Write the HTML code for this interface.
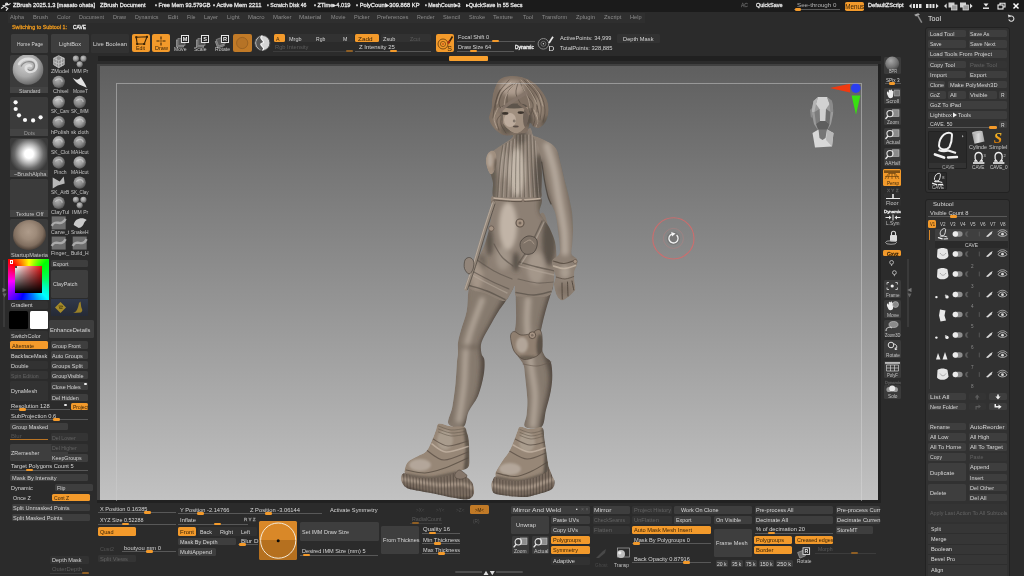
<!DOCTYPE html>
<html><head><meta charset="utf-8"><title>ZBrush</title>
<style>
html,body{margin:0;padding:0;background:#2b2b2b;}
body{width:1024px;height:576px;overflow:hidden;position:relative;font-family:"Liberation Sans",sans-serif;}
#r{position:absolute;left:0;top:0;width:1024px;height:576px;overflow:hidden;filter:blur(0.4px);}
#r div,#r span,#r svg{position:absolute;white-space:nowrap;overflow:hidden;}
#r span{line-height:1.15;overflow:visible;}
#r .b{box-sizing:content-box;}
</style></head><body><div id="r">
<div style="left:0px;top:0px;width:1024px;height:11.5px;background:#1b1b1b;"></div>
<div style="left:0px;top:11.5px;width:1024px;height:564.5px;background:#2b2b2b;"></div>
<div style="left:98px;top:56.2px;width:783px;height:5px;background:#202020;"></div>
<div style="left:97.4px;top:63.8px;width:783.2px;height:439px;background:#212121;"></div>
<div style="left:97.4px;top:63.8px;width:781px;height:436.4px;background:#404040;"></div>
<div style="left:100px;top:66px;width:778px;height:434px;background:linear-gradient(#5f5f5f,#8b8b8b 45%,#c2c2c2);"></div>
<svg style="left:0;top:0" width="1024" height="576" viewBox="0 0 1024 576"><defs>
<filter id="b2" x="-20%" y="-20%" width="140%" height="140%"><feGaussianBlur stdDeviation="2.2"/></filter>
<filter id="b1" x="-20%" y="-20%" width="140%" height="140%"><feGaussianBlur stdDeviation="1.3"/></filter>
<filter id="b0" x="-20%" y="-20%" width="140%" height="140%"><feGaussianBlur stdDeviation="0.7"/></filter>
<clipPath id="cp1"><path d="M480.0 255.0C475.2 258.7 472.9 266.0 471.0 272.0C469.1 278.0 469.0 284.5 468.3 291.0C467.6 297.5 467.9 304.5 466.7 311.0C465.5 317.5 462.4 324.8 461.0 330.0C459.6 335.2 458.5 338.6 458.0 342.5C457.5 346.4 458.2 350.1 458.0 353.4C457.8 356.6 457.4 357.0 457.0 362.0C456.6 367.0 456.3 375.9 455.5 383.4C454.7 390.9 453.5 400.2 452.3 407.0C451.1 413.8 446.6 420.7 448.4 424.0C450.2 427.3 459.9 429.1 463.3 427.0C466.7 424.9 466.2 416.7 468.7 411.5C471.1 406.3 475.5 402.0 478.0 396.0C480.5 390.0 482.5 381.6 483.6 375.6C484.7 369.6 484.8 363.7 484.4 360.0C484.0 356.3 482.0 356.3 481.5 353.4C481.0 350.5 480.2 346.9 481.5 342.5C482.8 338.1 486.5 332.2 489.4 327.0C492.3 321.8 496.1 315.2 498.7 311.0C501.3 306.8 502.4 306.2 505.0 302.0C507.6 297.8 512.6 292.0 514.4 286.0C516.2 280.0 518.4 272.0 516.0 266.0C513.6 260.0 506.0 251.8 500.0 250.0C494.0 248.2 484.8 251.3 480.0 255.0Z"/></clipPath><clipPath id="cp2"><path d="M515.0 262.0C510.8 273.0 514.9 274.4 515.0 280.0C515.1 285.6 515.4 289.1 515.6 295.6C515.8 302.1 516.2 313.0 516.0 319.0C515.8 325.0 515.2 328.5 514.4 331.5C513.6 334.5 511.3 334.1 511.0 337.0C510.7 339.9 511.5 345.2 512.8 348.7C514.1 352.2 517.2 355.3 519.0 358.0C520.8 360.7 522.5 362.1 523.5 365.0C524.5 367.9 524.4 369.9 525.0 375.6C525.6 381.3 527.0 392.5 527.3 399.0C527.6 405.5 527.0 410.0 526.6 414.7C526.2 419.4 522.5 424.9 525.0 427.0C527.5 429.1 537.9 429.8 541.4 427.0C544.9 424.2 544.4 416.0 546.0 410.0C547.6 404.0 549.8 396.7 550.8 391.0C551.8 385.3 552.3 380.4 552.3 375.6C552.3 370.8 551.9 365.1 550.8 362.0C549.7 358.9 547.1 359.2 545.6 357.0C544.1 354.8 542.8 352.7 542.0 348.7C541.2 344.7 541.0 336.6 541.0 333.0C541.0 329.4 540.9 330.7 541.7 327.0C542.5 323.3 544.2 316.2 545.6 311.0C547.0 305.8 549.0 299.9 550.3 295.6C551.6 291.3 552.6 289.8 553.4 285.0C554.2 280.2 554.5 271.5 555.0 267.0C555.5 262.5 556.5 262.0 556.5 257.8C556.5 253.6 556.3 247.2 555.0 242.0C553.7 236.8 551.2 231.2 548.7 226.5C546.2 221.8 545.6 208.1 540.0 214.0C534.4 219.9 519.2 251.0 515.0 262.0Z"/></clipPath><clipPath id="cp3"><path d="M494.0 195.0C487.7 196.5 492.9 205.1 492.5 208.0C492.1 210.9 491.5 213.9 491.0 217.0C490.5 220.1 489.5 227.1 488.6 231.0C487.7 234.9 485.4 242.4 484.0 246.0C482.6 249.6 479.7 254.5 478.0 258.0C476.3 261.5 472.2 268.0 471.0 272.0C469.8 276.0 467.0 285.1 469.0 288.0C471.0 290.9 481.2 292.3 486.0 294.0C490.8 295.7 501.2 302.1 505.0 301.0C508.8 299.9 513.0 286.7 514.5 286.0C516.0 285.3 513.3 294.5 516.0 296.0C518.7 297.5 530.3 297.3 535.0 297.0C539.7 296.7 548.3 298.0 551.0 294.0C553.7 290.0 554.3 271.8 555.0 267.0C555.7 262.2 556.5 261.1 556.5 257.8C556.5 254.5 556.0 246.2 555.0 242.0C554.0 237.8 550.8 230.4 548.7 226.5C546.6 222.6 540.8 216.4 539.6 212.5C538.4 208.6 545.6 199.3 539.5 197.0C533.4 194.7 500.3 193.5 494.0 195.0Z"/></clipPath><clipPath id="cp4"><path d="M510.5 336.0C510.7 333.2 512.2 331.7 514.0 331.5C515.8 331.3 518.2 334.7 521.0 335.0C523.8 335.3 528.2 334.4 531.0 333.5C533.8 332.6 536.2 329.6 538.0 329.5C539.8 329.4 540.8 330.4 541.5 333.0C542.2 335.6 542.3 341.8 542.2 345.0C542.1 348.2 542.2 350.0 541.0 352.0C539.8 354.0 537.8 355.8 535.0 357.0C532.2 358.2 527.1 360.0 524.0 359.5C520.9 359.0 518.4 355.9 516.5 354.0C514.6 352.1 513.8 351.0 512.8 348.0C511.8 345.0 510.3 338.8 510.5 336.0Z"/></clipPath><clipPath id="cp5"><path d="M513.5 128.0C512.2 128.8 513.9 134.9 512.5 137.0C511.1 139.1 505.5 142.3 503.0 144.0C500.5 145.7 496.0 148.5 494.0 150.0C492.0 151.5 489.1 153.5 488.0 155.0C486.9 156.5 486.0 159.3 486.0 161.0C486.0 162.7 487.4 166.3 488.0 168.0C488.6 169.7 489.8 172.0 490.5 174.0C491.2 176.0 492.5 179.9 493.0 183.0C493.5 186.1 490.8 195.3 494.0 197.5C497.2 199.7 510.9 199.4 517.0 199.5C523.1 199.6 536.7 199.8 540.0 198.5C543.3 197.2 541.2 193.1 541.5 190.0C541.8 186.9 541.9 178.9 542.0 175.0C542.1 171.1 541.2 164.6 542.0 161.0C542.8 157.4 548.1 150.8 548.0 148.0C547.9 145.2 542.9 141.7 541.0 140.0C539.1 138.3 534.9 137.1 533.5 135.5C532.1 133.9 532.0 128.6 530.5 128.0C529.0 127.4 524.3 131.0 522.0 131.0C519.7 131.0 514.8 127.2 513.5 128.0Z"/></clipPath><clipPath id="cp6"><path d="M489.0 152.0C490.2 150.8 491.8 150.2 493.0 150.5C494.2 150.8 495.4 151.9 496.0 154.0C496.6 156.1 496.8 160.0 496.5 163.0C496.2 166.0 495.1 170.2 494.0 172.0C492.9 173.8 491.2 175.0 490.0 174.0C488.8 173.0 487.2 168.7 486.5 166.0C485.8 163.3 485.6 160.3 486.0 158.0C486.4 155.7 487.8 153.2 489.0 152.0Z"/></clipPath><clipPath id="cp7"><path d="M533.7 136.0C535.4 135.5 545.9 140.4 549.4 142.5C552.9 144.6 555.3 146.7 557.0 150.0C558.7 153.3 559.8 159.7 561.0 164.4C562.2 169.1 563.8 176.6 565.0 181.5C566.2 186.4 568.0 192.4 569.0 197.0C570.0 201.6 571.4 207.3 572.0 212.0C572.6 216.7 572.9 223.5 573.0 228.0C573.1 232.5 572.7 238.1 572.5 242.0C572.3 245.9 571.0 251.5 571.6 254.0C572.2 256.5 575.8 256.8 576.6 258.4C577.4 260.0 577.3 263.1 577.0 265.0C576.7 266.9 574.9 269.1 574.5 271.0C574.1 272.9 574.1 275.4 574.2 278.0C574.3 280.6 575.3 286.1 575.3 288.0C575.3 289.9 575.5 289.6 574.5 291.0C573.5 292.4 570.2 295.6 568.3 297.0C566.4 298.4 563.7 300.6 562.0 300.5C560.3 300.4 558.2 298.4 557.0 296.0C555.8 293.6 554.2 287.3 554.0 284.4C553.8 281.5 555.8 279.1 555.6 276.5C555.4 273.9 553.1 269.5 552.6 267.0C552.1 264.5 551.1 262.2 552.2 260.0C553.3 257.8 558.8 256.9 559.7 252.5C560.6 248.2 558.7 237.0 558.0 231.0C557.3 225.0 556.4 217.2 555.0 212.5C553.6 207.8 550.1 202.5 549.0 200.0C547.9 197.5 548.4 198.4 547.8 195.6C547.2 192.8 545.6 186.7 544.7 181.5C543.8 176.3 542.5 166.3 541.5 161.0C540.5 155.7 539.2 149.8 538.0 146.0C536.8 142.2 532.0 136.5 533.7 136.0Z"/></clipPath><clipPath id="cp8"><path d="M401.2 477.5C401.3 475.9 401.2 474.4 403.0 473.6C404.8 472.8 406.0 472.4 412.0 472.5C418.0 472.6 432.2 474.2 439.0 474.0C445.8 473.8 449.1 471.0 453.0 471.0C456.9 471.0 459.4 472.2 462.5 474.0C465.6 475.8 469.9 479.1 471.9 482.0C473.8 484.9 474.2 489.0 474.2 491.5C474.2 494.0 473.4 495.7 472.0 497.0C470.6 498.3 468.9 499.3 465.6 499.4C462.3 499.5 456.4 498.3 452.0 497.5C447.6 496.7 444.3 495.8 439.0 494.7C433.7 493.6 425.2 492.1 420.0 491.0C414.8 489.9 410.8 489.6 407.8 488.4C404.9 487.1 403.4 485.3 402.3 483.5C401.2 481.7 401.1 479.1 401.2 477.5Z"/></clipPath><clipPath id="cp9"><path d="M491.4 485.3C491.3 483.1 491.9 481.1 493.0 479.5C494.1 477.9 493.5 476.1 498.0 475.8C502.5 475.5 513.0 478.1 520.0 477.5C527.0 476.9 535.4 474.4 540.0 472.5C544.6 470.6 545.5 465.4 547.5 466.0C549.5 466.6 551.1 473.3 552.3 476.0C553.5 478.7 554.6 480.0 554.7 482.0C554.8 484.0 554.3 486.4 553.0 488.0C551.7 489.6 549.9 490.4 546.9 491.6C543.9 492.8 538.6 494.1 535.0 495.0C531.4 495.9 530.0 496.9 525.0 497.0C520.0 497.1 510.2 496.2 505.0 495.5C499.8 494.8 496.0 494.7 493.7 493.0C491.4 491.3 491.5 487.6 491.4 485.3Z"/></clipPath><clipPath id="cp10"><path d="M439.0 423.6C441.5 423.0 446.8 425.8 451.0 426.3C455.2 426.8 461.3 425.6 464.0 426.7C466.7 427.8 466.2 430.8 467.0 433.0C467.8 435.2 468.3 436.3 468.7 440.0C469.1 443.7 469.3 450.6 469.3 455.0C469.3 459.4 469.9 463.9 468.7 466.5C467.5 469.1 464.3 469.4 462.0 470.5C459.7 471.6 457.8 472.0 455.0 473.0C452.2 474.0 449.2 475.6 445.0 476.5C440.8 477.4 435.0 478.4 430.0 478.5C425.0 478.6 419.1 478.1 415.0 477.3C410.9 476.5 407.2 474.8 405.5 473.5C403.8 472.2 404.3 471.6 404.7 469.7C405.1 467.8 405.6 464.3 407.8 462.0C410.0 459.7 414.9 457.8 418.0 456.0C421.1 454.2 424.0 453.9 426.5 451.0C429.0 448.1 431.2 441.9 432.8 438.4C434.4 434.9 435.0 432.5 436.0 430.0C437.0 427.5 436.5 424.2 439.0 423.6Z"/></clipPath><clipPath id="cp11"><path d="M520.3 426.7C522.5 426.4 527.4 428.9 531.0 429.0C534.6 429.1 540.0 425.7 542.2 427.5C544.5 429.3 543.6 434.2 544.5 440.0C545.4 445.8 547.1 457.3 547.7 462.0C548.4 466.7 548.7 466.2 548.4 468.0C548.1 469.8 548.2 470.9 546.0 472.5C543.8 474.1 539.3 476.1 535.0 477.5C530.7 478.9 525.0 480.2 520.0 480.7C515.0 481.2 508.8 480.8 505.0 480.4C501.2 480.0 498.6 479.4 497.0 478.3C495.4 477.2 495.3 475.4 495.3 474.0C495.3 472.6 495.6 472.0 496.9 469.7C498.2 467.4 500.9 463.1 503.0 460.0C505.1 456.9 507.4 454.6 509.4 451.0C511.4 447.4 513.4 441.7 514.8 438.4C516.1 435.1 516.6 432.9 517.5 431.0C518.4 429.1 518.0 427.0 520.3 426.7Z"/></clipPath><clipPath id="cp12"><path d="M500.0 79.0C502.6 77.0 506.3 76.3 510.0 76.0C513.7 75.7 518.2 76.0 522.0 77.0C525.8 78.0 529.8 79.8 533.0 82.0C536.2 84.2 538.7 87.0 541.0 90.0C543.3 93.0 545.7 96.5 547.0 100.0C548.3 103.5 548.8 107.5 548.6 111.0C548.4 114.5 547.4 118.2 546.0 121.0C544.6 123.8 542.0 126.5 540.0 127.5C538.0 128.5 535.7 127.8 534.0 127.0C532.3 126.2 531.2 122.2 530.0 123.0C528.8 123.8 529.0 130.2 527.0 132.0C525.0 133.8 520.2 133.5 518.0 134.0C515.8 134.5 516.2 134.7 514.0 135.0C511.8 135.3 507.8 136.2 505.0 135.6C502.2 135.0 499.3 133.2 497.0 131.3C494.7 129.4 492.3 126.4 491.0 124.0C489.7 121.6 488.9 119.7 489.0 117.0C489.1 114.3 491.0 111.1 491.5 108.0C492.0 104.9 491.7 101.7 492.2 98.4C492.7 95.1 493.3 91.4 494.6 88.2C495.9 85.0 497.4 81.0 500.0 79.0Z"/></clipPath><clipPath id="cp13"><path d="M500.5 108.5C501.4 106.4 502.9 105.3 506.0 104.5C509.1 103.7 515.5 103.2 519.0 103.5C522.5 103.8 525.3 103.9 527.0 106.0C528.7 108.1 529.1 112.8 529.0 116.0C528.9 119.2 527.8 122.4 526.5 125.0C525.2 127.6 522.8 130.1 521.0 131.5C519.2 132.9 517.4 133.4 515.5 133.2C513.6 133.0 511.4 131.9 509.5 130.5C507.6 129.1 505.4 127.2 504.0 125.0C502.6 122.8 501.4 119.8 500.8 117.0C500.2 114.2 499.6 110.6 500.5 108.5Z"/></clipPath></defs><g clip-path="url(#cp1)"><path d="M480.0 255.0C475.2 258.7 472.9 266.0 471.0 272.0C469.1 278.0 469.0 284.5 468.3 291.0C467.6 297.5 467.9 304.5 466.7 311.0C465.5 317.5 462.4 324.8 461.0 330.0C459.6 335.2 458.5 338.6 458.0 342.5C457.5 346.4 458.2 350.1 458.0 353.4C457.8 356.6 457.4 357.0 457.0 362.0C456.6 367.0 456.3 375.9 455.5 383.4C454.7 390.9 453.5 400.2 452.3 407.0C451.1 413.8 446.6 420.7 448.4 424.0C450.2 427.3 459.9 429.1 463.3 427.0C466.7 424.9 466.2 416.7 468.7 411.5C471.1 406.3 475.5 402.0 478.0 396.0C480.5 390.0 482.5 381.6 483.6 375.6C484.7 369.6 484.8 363.7 484.4 360.0C484.0 356.3 482.0 356.3 481.5 353.4C481.0 350.5 480.2 346.9 481.5 342.5C482.8 338.1 486.5 332.2 489.4 327.0C492.3 321.8 496.1 315.2 498.7 311.0C501.3 306.8 502.4 306.2 505.0 302.0C507.6 297.8 512.6 292.0 514.4 286.0C516.2 280.0 518.4 272.0 516.0 266.0C513.6 260.0 506.0 251.8 500.0 250.0C494.0 248.2 484.8 251.3 480.0 255.0Z" fill="#867a6e"/><g filter="url(#b2)"><path d="M482.0 300.0C480.2 305.0 473.7 321.7 471.0 330.0C468.3 338.3 467.2 340.8 466.0 350.0C464.8 359.2 465.2 373.3 464.0 385.0C462.8 396.7 459.8 414.2 459.0 420.0" fill="none" stroke="#b6aa9d" stroke-width="6" stroke-linecap="round" opacity="0.8"/><path d="M507.0 300.0C504.7 304.3 496.8 318.5 493.0 326.0C489.2 333.5 485.3 338.5 484.0 345.0C482.7 351.5 485.5 356.7 485.0 365.0C484.5 373.3 484.0 384.8 481.0 395.0C478.0 405.2 469.3 420.8 467.0 426.0" fill="none" stroke="#474039" stroke-width="9" stroke-linecap="round" opacity="0.8"/><path d="M467.0 292.0C466.5 296.7 465.7 311.2 464.0 320.0C462.3 328.8 458.5 334.2 457.0 345.0C455.5 355.8 456.2 372.2 455.0 385.0C453.8 397.8 450.8 415.8 450.0 422.0" fill="none" stroke="#6a5d52" stroke-width="2.5" stroke-linecap="round" opacity="0.6"/><ellipse cx="470" cy="347" rx="10" ry="3" fill="#6a5d52" opacity="0.5"/></g></g><g clip-path="url(#cp2)"><path d="M515.0 262.0C510.8 273.0 514.9 274.4 515.0 280.0C515.1 285.6 515.4 289.1 515.6 295.6C515.8 302.1 516.2 313.0 516.0 319.0C515.8 325.0 515.2 328.5 514.4 331.5C513.6 334.5 511.3 334.1 511.0 337.0C510.7 339.9 511.5 345.2 512.8 348.7C514.1 352.2 517.2 355.3 519.0 358.0C520.8 360.7 522.5 362.1 523.5 365.0C524.5 367.9 524.4 369.9 525.0 375.6C525.6 381.3 527.0 392.5 527.3 399.0C527.6 405.5 527.0 410.0 526.6 414.7C526.2 419.4 522.5 424.9 525.0 427.0C527.5 429.1 537.9 429.8 541.4 427.0C544.9 424.2 544.4 416.0 546.0 410.0C547.6 404.0 549.8 396.7 550.8 391.0C551.8 385.3 552.3 380.4 552.3 375.6C552.3 370.8 551.9 365.1 550.8 362.0C549.7 358.9 547.1 359.2 545.6 357.0C544.1 354.8 542.8 352.7 542.0 348.7C541.2 344.7 541.0 336.6 541.0 333.0C541.0 329.4 540.9 330.7 541.7 327.0C542.5 323.3 544.2 316.2 545.6 311.0C547.0 305.8 549.0 299.9 550.3 295.6C551.6 291.3 552.6 289.8 553.4 285.0C554.2 280.2 554.5 271.5 555.0 267.0C555.5 262.5 556.5 262.0 556.5 257.8C556.5 253.6 556.3 247.2 555.0 242.0C553.7 236.8 551.2 231.2 548.7 226.5C546.2 221.8 545.6 208.1 540.0 214.0C534.4 219.9 519.2 251.0 515.0 262.0Z" fill="#867a6e"/><g filter="url(#b2)"><path d="M528.0 300.0C527.8 304.2 526.5 314.2 527.0 325.0C527.5 335.8 529.7 353.3 531.0 365.0C532.3 376.7 534.7 385.0 535.0 395.0C535.3 405.0 533.3 420.0 533.0 425.0" fill="none" stroke="#b6aa9d" stroke-width="6.5" stroke-linecap="round" opacity="0.8"/><path d="M554.0 290.0C552.7 294.7 547.7 309.7 546.0 318.0C544.3 326.3 542.8 331.0 544.0 340.0C545.2 349.0 551.7 363.3 553.0 372.0C554.3 380.7 553.5 382.8 552.0 392.0C550.5 401.2 545.3 421.2 544.0 427.0" fill="none" stroke="#474039" stroke-width="9" stroke-linecap="round" opacity="0.8"/><path d="M515.0 296.0C515.2 300.3 516.3 313.8 516.0 322.0C515.7 330.2 511.8 337.3 513.0 345.0C514.2 352.7 520.8 358.8 523.0 368.0C525.2 377.2 525.8 390.3 526.0 400.0C526.2 409.7 524.3 421.7 524.0 426.0" fill="none" stroke="#65594e" stroke-width="3" stroke-linecap="round" opacity="0.6"/></g></g><g clip-path="url(#cp3)"><path d="M494.0 195.0C487.7 196.5 492.9 205.1 492.5 208.0C492.1 210.9 491.5 213.9 491.0 217.0C490.5 220.1 489.5 227.1 488.6 231.0C487.7 234.9 485.4 242.4 484.0 246.0C482.6 249.6 479.7 254.5 478.0 258.0C476.3 261.5 472.2 268.0 471.0 272.0C469.8 276.0 467.0 285.1 469.0 288.0C471.0 290.9 481.2 292.3 486.0 294.0C490.8 295.7 501.2 302.1 505.0 301.0C508.8 299.9 513.0 286.7 514.5 286.0C516.0 285.3 513.3 294.5 516.0 296.0C518.7 297.5 530.3 297.3 535.0 297.0C539.7 296.7 548.3 298.0 551.0 294.0C553.7 290.0 554.3 271.8 555.0 267.0C555.7 262.2 556.5 261.1 556.5 257.8C556.5 254.5 556.0 246.2 555.0 242.0C554.0 237.8 550.8 230.4 548.7 226.5C546.6 222.6 540.8 216.4 539.6 212.5C538.4 208.6 545.6 199.3 539.5 197.0C533.4 194.7 500.3 193.5 494.0 195.0Z" fill="#8d8074"/><g filter="url(#b2)"><ellipse cx="508" cy="226" rx="9" ry="24" fill="#c6baad" opacity="0.9"/><ellipse cx="503" cy="258" rx="7" ry="12" fill="#b6aa9d" opacity="0.5"/><ellipse cx="536" cy="268" rx="9" ry="16" fill="#b6aa9d" opacity="0.55"/><ellipse cx="549" cy="240" rx="7" ry="26" fill="#474039" opacity="0.7"/><ellipse cx="543" cy="205" rx="5" ry="12" fill="#474039" opacity="0.6"/><ellipse cx="489.5" cy="242" rx="3.5" ry="14" fill="#474039" opacity="0.7"/><ellipse cx="482" cy="262" rx="4" ry="8" fill="#474039" opacity="0.4"/><ellipse cx="516" cy="262" rx="3.5" ry="10" fill="#474039" opacity="0.75"/><ellipse cx="477" cy="276" rx="6" ry="14" fill="#bcab9b" opacity="0.5"/></g><path d="M469.0 285.5C472.0 286.4 481.0 288.7 487.0 291.0C493.0 293.3 502.0 298.1 505.0 299.5" fill="none" stroke="#5a5149" stroke-width="1.5" stroke-linecap="round" opacity=".75"/><path d="M468.5 290.5C471.4 291.4 480.2 293.8 486.0 296.0C491.8 298.2 500.2 302.2 503.0 303.5" fill="none" stroke="#c0b4a7" stroke-width="1.8" stroke-linecap="round" opacity=".75"/><path d="M472.0 271.0C475.0 272.6 483.8 277.5 490.0 280.5C496.2 283.5 505.8 287.6 509.0 289.0" fill="none" stroke="#5a5149" stroke-width="1.2" stroke-linecap="round" opacity=".65"/><path d="M472.0 275.0C475.0 276.6 484.2 281.5 490.0 284.5C495.8 287.5 504.2 291.6 507.0 293.0" fill="none" stroke="#b6aa9d" stroke-width="1.4" stroke-linecap="round" opacity=".55"/><path d="M477.0 260.0C479.8 261.8 488.2 267.8 494.0 271.0C499.8 274.2 509.0 277.7 512.0 279.0" fill="none" stroke="#5a5149" stroke-width="1.2" stroke-linecap="round" opacity=".6"/><path d="M516.0 292.5C519.0 292.9 528.2 295.2 534.0 295.0C539.8 294.8 548.2 292.1 551.0 291.5" fill="none" stroke="#5a5149" stroke-width="1.4" stroke-linecap="round" opacity=".75"/><path d="M516.0 297.5C519.0 297.9 528.3 300.1 534.0 300.0C539.7 299.9 547.3 297.5 550.0 297.0" fill="none" stroke="#c0b4a7" stroke-width="1.8" stroke-linecap="round" opacity=".7"/><path d="M519.0 262.0C522.0 262.8 531.0 265.5 537.0 267.0C543.0 268.5 552.0 270.3 555.0 271.0" fill="none" stroke="#5a5149" stroke-width="1.3" stroke-linecap="round" opacity=".7"/><path d="M519.0 266.0C522.0 266.8 531.0 269.5 537.0 271.0C543.0 272.5 552.0 274.3 555.0 275.0" fill="none" stroke="#b6aa9d" stroke-width="1.5" stroke-linecap="round" opacity=".55"/><path d="M518.0 279.0C521.2 279.7 531.0 282.5 537.0 283.0C543.0 283.5 551.2 282.2 554.0 282.0" fill="none" stroke="#5a5149" stroke-width="1.1" stroke-linecap="round" opacity=".55"/><path d="M494.0 244.0C495.3 246.2 498.8 253.3 502.0 257.0C505.2 260.7 511.2 264.5 513.0 266.0" fill="none" stroke="#5a5149" stroke-width="1.2" stroke-linecap="round" opacity=".65"/><path d="M542.0 221.0C540.2 224.8 535.0 236.8 531.0 244.0C527.0 251.2 520.2 260.7 518.0 264.0" fill="none" stroke="#5a5149" stroke-width="1.3" stroke-linecap="round" opacity=".65"/><path d="M544.0 222.0C542.2 225.8 536.8 238.0 533.0 245.0C529.2 252.0 523.0 260.8 521.0 264.0" fill="none" stroke="#c0b4a7" stroke-width="1.4" stroke-linecap="round" opacity=".5"/></g><circle cx="520" cy="223" r="4" fill="#a59383" stroke="#5f5349" stroke-width="1.1"/><circle cx="520" cy="223" r="1.5" fill="#75675b"/><path d="M521.0 241.0C522.2 239.0 525.5 236.4 528.0 236.0C530.5 235.6 534.5 236.8 536.0 238.5C537.5 240.2 537.5 243.6 537.0 246.0C536.5 248.4 535.0 251.7 533.0 253.0C531.0 254.3 527.1 254.8 525.0 254.0C522.9 253.2 521.2 250.2 520.5 248.0C519.8 245.8 519.8 243.0 521.0 241.0Z" fill="#7f7368" stroke="#4a433c" stroke-width=".8"/><path d="M524.0 243.0C525.0 242.5 528.3 239.8 530.0 240.0C531.7 240.2 533.3 243.3 534.0 244.0" fill="none" stroke="#b3a292" stroke-width="1" stroke-linecap="round" opacity=".8"/><g clip-path="url(#cp4)"><path d="M510.5 336.0C510.7 333.2 512.2 331.7 514.0 331.5C515.8 331.3 518.2 334.7 521.0 335.0C523.8 335.3 528.2 334.4 531.0 333.5C533.8 332.6 536.2 329.6 538.0 329.5C539.8 329.4 540.8 330.4 541.5 333.0C542.2 335.6 542.3 341.8 542.2 345.0C542.1 348.2 542.2 350.0 541.0 352.0C539.8 354.0 537.8 355.8 535.0 357.0C532.2 358.2 527.1 360.0 524.0 359.5C520.9 359.0 518.4 355.9 516.5 354.0C514.6 352.1 513.8 351.0 512.8 348.0C511.8 345.0 510.3 338.8 510.5 336.0Z" fill="#8f7f70"/><g filter="url(#b1)"><ellipse cx="522" cy="345" rx="6" ry="8" fill="#b6aa9d" opacity="0.9"/><ellipse cx="540" cy="346" rx="3.5" ry="12" fill="#474039" opacity="0.7"/><ellipse cx="527" cy="358" rx="10" ry="2.5" fill="#474039" opacity="0.5"/></g></g><path d="M510.5 336.0C510.7 333.2 512.2 331.7 514.0 331.5C515.8 331.3 518.2 334.7 521.0 335.0C523.8 335.3 528.2 334.4 531.0 333.5C533.8 332.6 536.2 329.6 538.0 329.5C539.8 329.4 540.8 330.4 541.5 333.0C542.2 335.6 542.3 341.8 542.2 345.0C542.1 348.2 542.2 350.0 541.0 352.0C539.8 354.0 537.8 355.8 535.0 357.0C532.2 358.2 527.1 360.0 524.0 359.5C520.9 359.0 518.4 355.9 516.5 354.0C514.6 352.1 513.8 351.0 512.8 348.0C511.8 345.0 510.3 338.8 510.5 336.0Z" fill="none" stroke="#54493f" stroke-width=".7"/><circle cx="532.3" cy="335.2" r="3.4" fill="#a59383" stroke="#5a4e44" stroke-width=".9"/><circle cx="532.3" cy="335.2" r="1.3" fill="#7d6f63"/><path d="M523.0 364.0C525.3 364.3 532.3 366.3 537.0 366.0C541.7 365.7 548.7 362.7 551.0 362.0" fill="none" stroke="#65594e" stroke-width="1" stroke-linecap="round" opacity=".6"/><g clip-path="url(#cp5)"><path d="M513.5 128.0C512.2 128.8 513.9 134.9 512.5 137.0C511.1 139.1 505.5 142.3 503.0 144.0C500.5 145.7 496.0 148.5 494.0 150.0C492.0 151.5 489.1 153.5 488.0 155.0C486.9 156.5 486.0 159.3 486.0 161.0C486.0 162.7 487.4 166.3 488.0 168.0C488.6 169.7 489.8 172.0 490.5 174.0C491.2 176.0 492.5 179.9 493.0 183.0C493.5 186.1 490.8 195.3 494.0 197.5C497.2 199.7 510.9 199.4 517.0 199.5C523.1 199.6 536.7 199.8 540.0 198.5C543.3 197.2 541.2 193.1 541.5 190.0C541.8 186.9 541.9 178.9 542.0 175.0C542.1 171.1 541.2 164.6 542.0 161.0C542.8 157.4 548.1 150.8 548.0 148.0C547.9 145.2 542.9 141.7 541.0 140.0C539.1 138.3 534.9 137.1 533.5 135.5C532.1 133.9 532.0 128.6 530.5 128.0C529.0 127.4 524.3 131.0 522.0 131.0C519.7 131.0 514.8 127.2 513.5 128.0Z" fill="#8d8074"/><g filter="url(#b2)"><ellipse cx="517" cy="172" rx="8" ry="24" fill="#c6baad" opacity="0.95"/><ellipse cx="504" cy="165" rx="4" ry="14" fill="#b6aa9d" opacity="0.5"/><ellipse cx="493" cy="182" rx="3.5" ry="20" fill="#474039" opacity="0.65"/><ellipse cx="539" cy="178" rx="5" ry="24" fill="#474039" opacity="0.75"/><ellipse cx="521" cy="136" rx="6" ry="8" fill="#474039" opacity="0.6"/><ellipse cx="545" cy="146" rx="6" ry="5" fill="#b6aa9d" opacity="0.7"/></g><path d="M502.7 145.6C502.2 149.0 500.6 157.4 499.8 166.0C498.9 174.6 497.9 191.8 497.5 197.0" fill="none" stroke="#5a5149" stroke-width="0.9" stroke-linecap="round" opacity=".6"/><path d="M504.1 145.6C503.6 149.0 502.0 157.4 501.2 166.0C500.3 174.6 499.4 191.8 499.0 197.0" fill="none" stroke="#cbbfb2" stroke-width="0.8" stroke-linecap="round" opacity=".45"/><path d="M506.2 143.4C505.8 147.2 504.5 157.1 503.8 166.0C503.1 174.9 502.3 191.8 502.0 197.0" fill="none" stroke="#5a5149" stroke-width="0.9" stroke-linecap="round" opacity=".6"/><path d="M507.6 143.4C507.2 147.2 505.9 157.1 505.2 166.0C504.5 174.9 503.8 191.8 503.5 197.0" fill="none" stroke="#cbbfb2" stroke-width="0.8" stroke-linecap="round" opacity=".45"/><path d="M509.7 141.3C509.4 145.4 508.3 156.7 507.8 166.0C507.3 175.3 506.7 191.8 506.5 197.0" fill="none" stroke="#5a5149" stroke-width="0.9" stroke-linecap="round" opacity=".6"/><path d="M511.1 141.3C510.8 145.4 509.7 156.7 509.2 166.0C508.7 175.3 508.2 191.8 508.0 197.0" fill="none" stroke="#cbbfb2" stroke-width="0.8" stroke-linecap="round" opacity=".45"/><path d="M513.2 139.1C513.0 143.6 512.2 156.3 511.8 166.0C511.4 175.7 511.1 191.8 511.0 197.0" fill="none" stroke="#5a5149" stroke-width="0.9" stroke-linecap="round" opacity=".6"/><path d="M514.6 139.1C514.4 143.6 513.6 156.3 513.2 166.0C512.9 175.7 512.6 191.8 512.5 197.0" fill="none" stroke="#cbbfb2" stroke-width="0.8" stroke-linecap="round" opacity=".45"/><path d="M516.7 135.0C516.6 140.2 516.0 155.7 515.8 166.0C515.6 176.3 515.6 191.8 515.5 197.0" fill="none" stroke="#5a5149" stroke-width="0.9" stroke-linecap="round" opacity=".6"/><path d="M518.1 135.0C518.0 140.2 517.4 155.7 517.2 166.0C517.0 176.3 517.0 191.8 517.0 197.0" fill="none" stroke="#cbbfb2" stroke-width="0.8" stroke-linecap="round" opacity=".45"/><path d="M520.2 135.0C520.2 140.2 519.8 155.7 519.8 166.0C519.8 176.3 520.0 191.8 520.0 197.0" fill="none" stroke="#5a5149" stroke-width="0.9" stroke-linecap="round" opacity=".6"/><path d="M521.6 135.0C521.6 140.2 521.2 155.7 521.2 166.0C521.2 176.3 521.5 191.8 521.5 197.0" fill="none" stroke="#cbbfb2" stroke-width="0.8" stroke-linecap="round" opacity=".45"/><path d="M523.7 135.0C523.7 140.2 523.7 155.7 523.8 166.0C523.9 176.3 524.4 191.8 524.5 197.0" fill="none" stroke="#5a5149" stroke-width="0.9" stroke-linecap="round" opacity=".6"/><path d="M525.1 135.0C525.1 140.2 525.1 155.7 525.2 166.0C525.4 176.3 525.9 191.8 526.0 197.0" fill="none" stroke="#cbbfb2" stroke-width="0.8" stroke-linecap="round" opacity=".45"/><path d="M527.2 135.0C527.3 140.2 527.5 155.7 527.8 166.0C528.1 176.3 528.8 191.8 529.0 197.0" fill="none" stroke="#5a5149" stroke-width="0.9" stroke-linecap="round" opacity=".6"/><path d="M528.6 135.0C528.7 140.2 528.9 155.7 529.2 166.0C529.5 176.3 530.3 191.8 530.5 197.0" fill="none" stroke="#cbbfb2" stroke-width="0.8" stroke-linecap="round" opacity=".45"/><path d="M530.8 135.0C530.9 140.2 531.4 155.7 531.8 166.0C532.3 176.3 533.2 191.8 533.5 197.0" fill="none" stroke="#5a5149" stroke-width="0.9" stroke-linecap="round" opacity=".6"/><path d="M532.1 135.0C532.3 140.2 532.8 155.7 533.2 166.0C533.7 176.3 534.7 191.8 535.0 197.0" fill="none" stroke="#cbbfb2" stroke-width="0.8" stroke-linecap="round" opacity=".45"/><path d="M533.9 137.6C534.1 142.3 534.8 156.1 535.4 166.0C536.0 175.9 537.1 191.8 537.5 197.0" fill="none" stroke="#5a5149" stroke-width="0.9" stroke-linecap="round" opacity=".6"/><path d="M535.3 137.6C535.5 142.3 536.2 156.1 536.8 166.0C537.4 175.9 538.6 191.8 539.0 197.0" fill="none" stroke="#cbbfb2" stroke-width="0.8" stroke-linecap="round" opacity=".45"/></g><path d="M494.0 198.0C497.8 198.3 509.3 199.7 517.0 199.8C524.7 199.9 536.2 198.8 540.0 198.6" fill="none" stroke="#bfae9e" stroke-width="1.5" stroke-linecap="round" /><path d="M494.0 200.0C497.8 200.3 509.3 201.5 517.0 201.6C524.7 201.7 536.2 200.6 540.0 200.4" fill="none" stroke="#54493f" stroke-width="1" stroke-linecap="round" opacity=".8"/><circle cx="493.2" cy="202.6" r="1.7" fill="#b3a191" stroke="#5a4e44" stroke-width=".5"/><circle cx="523" cy="200.6" r="1.6" fill="#85766a"/><g clip-path="url(#cp6)"><path d="M489.0 152.0C490.2 150.8 491.8 150.2 493.0 150.5C494.2 150.8 495.4 151.9 496.0 154.0C496.6 156.1 496.8 160.0 496.5 163.0C496.2 166.0 495.1 170.2 494.0 172.0C492.9 173.8 491.2 175.0 490.0 174.0C488.8 173.0 487.2 168.7 486.5 166.0C485.8 163.3 485.6 160.3 486.0 158.0C486.4 155.7 487.8 153.2 489.0 152.0Z" fill="#a08f7f"/><g filter="url(#b1)"><ellipse cx="490" cy="160" rx="2.5" ry="7" fill="#b6aa9d" opacity="0.9"/><ellipse cx="496" cy="166" rx="2" ry="8" fill="#474039" opacity="0.6"/></g></g><g clip-path="url(#cp7)"><path d="M533.7 136.0C535.4 135.5 545.9 140.4 549.4 142.5C552.9 144.6 555.3 146.7 557.0 150.0C558.7 153.3 559.8 159.7 561.0 164.4C562.2 169.1 563.8 176.6 565.0 181.5C566.2 186.4 568.0 192.4 569.0 197.0C570.0 201.6 571.4 207.3 572.0 212.0C572.6 216.7 572.9 223.5 573.0 228.0C573.1 232.5 572.7 238.1 572.5 242.0C572.3 245.9 571.0 251.5 571.6 254.0C572.2 256.5 575.8 256.8 576.6 258.4C577.4 260.0 577.3 263.1 577.0 265.0C576.7 266.9 574.9 269.1 574.5 271.0C574.1 272.9 574.1 275.4 574.2 278.0C574.3 280.6 575.3 286.1 575.3 288.0C575.3 289.9 575.5 289.6 574.5 291.0C573.5 292.4 570.2 295.6 568.3 297.0C566.4 298.4 563.7 300.6 562.0 300.5C560.3 300.4 558.2 298.4 557.0 296.0C555.8 293.6 554.2 287.3 554.0 284.4C553.8 281.5 555.8 279.1 555.6 276.5C555.4 273.9 553.1 269.5 552.6 267.0C552.1 264.5 551.1 262.2 552.2 260.0C553.3 257.8 558.8 256.9 559.7 252.5C560.6 248.2 558.7 237.0 558.0 231.0C557.3 225.0 556.4 217.2 555.0 212.5C553.6 207.8 550.1 202.5 549.0 200.0C547.9 197.5 548.4 198.4 547.8 195.6C547.2 192.8 545.6 186.7 544.7 181.5C543.8 176.3 542.5 166.3 541.5 161.0C540.5 155.7 539.2 149.8 538.0 146.0C536.8 142.2 532.0 136.5 533.7 136.0Z" fill="#8d8074"/><g filter="url(#b2)"><path d="M547.0 146.0C548.2 150.0 552.0 161.0 554.0 170.0C556.0 179.0 557.3 190.0 559.0 200.0C560.7 210.0 563.0 221.3 564.0 230.0C565.0 238.7 564.8 248.3 565.0 252.0" fill="none" stroke="#b6aa9d" stroke-width="7.5" stroke-linecap="round" opacity="0.9"/><path d="M559.0 152.0C560.2 156.7 563.8 170.3 566.0 180.0C568.2 189.7 570.5 200.8 572.0 210.0C573.5 219.2 574.8 227.3 575.0 235.0C575.2 242.7 573.3 252.5 573.0 256.0" fill="none" stroke="#474039" stroke-width="3" stroke-linecap="round" opacity="0.45"/><path d="M541.0 160.0C541.7 164.2 543.3 177.5 545.0 185.0C546.7 192.5 549.0 197.2 551.0 205.0C553.0 212.8 555.8 224.5 557.0 232.0C558.2 239.5 557.8 247.0 558.0 250.0" fill="none" stroke="#474039" stroke-width="3" stroke-linecap="round" opacity="0.6"/><ellipse cx="565" cy="272" rx="5" ry="7" fill="#b6aa9d" opacity="0.7"/><ellipse cx="564" cy="290" rx="7" ry="6" fill="#7a6c60" opacity="0.6"/></g><path d="M553.0 261.0C554.8 261.4 560.2 263.7 564.0 263.5C567.8 263.3 574.0 260.6 576.0 260.0" fill="none" stroke="#54493f" stroke-width="1.2" stroke-linecap="round" opacity=".8"/><path d="M553.5 266.0C555.2 266.4 560.3 268.6 564.0 268.5C567.7 268.4 573.6 266.0 575.5 265.5" fill="none" stroke="#c6b6a6" stroke-width="1.7" stroke-linecap="round" opacity=".8"/><path d="M556.0 277.0C557.5 277.3 562.0 279.1 565.0 279.0C568.0 278.9 572.5 276.9 574.0 276.5" fill="none" stroke="#54493f" stroke-width="1" stroke-linecap="round" opacity=".7"/><path d="M562.0 283.0C562.0 285.7 562.2 296.3 562.3 299.0" fill="none" stroke="#4f453c" stroke-width="0.9" stroke-linecap="round" /><path d="M567.5 282.0C567.6 284.3 567.9 293.7 568.0 296.0" fill="none" stroke="#4f453c" stroke-width="0.9" stroke-linecap="round" /><path d="M572.0 281.0C572.3 282.5 573.5 288.5 573.8 290.0" fill="none" stroke="#4f453c" stroke-width="0.9" stroke-linecap="round" /></g><circle cx="575.2" cy="261.5" r="2" fill="#a59383" stroke="#5a4e44" stroke-width=".5"/><path d="M541.7 162.0C542.2 165.2 543.7 175.8 544.7 181.5C545.7 187.2 546.8 192.2 547.8 196.0C548.8 199.8 550.5 202.7 551.0 204.0" fill="none" stroke="#463d35" stroke-width="1.2" stroke-linecap="round" opacity=".75"/><path d="M493.5 203.0C491.9 207.8 487.1 222.2 484.0 232.0C480.9 241.8 478.0 252.5 475.0 262.0C472.0 271.5 467.5 284.5 466.0 289.0" fill="none" stroke="#95887b" stroke-width="3.4" stroke-linecap="round" /><path d="M492.4 203.0C490.8 207.8 486.1 222.2 483.0 232.0C479.9 241.8 477.0 252.5 474.0 262.0C471.0 271.5 466.5 284.5 465.0 289.0" fill="none" stroke="#c0b4a7" stroke-width="1" stroke-linecap="round" opacity=".8"/><path d="M495.0 204.0C493.4 208.8 488.7 223.2 485.6 233.0C482.5 242.8 479.6 253.6 476.6 263.0C473.6 272.4 469.1 285.1 467.6 289.5" fill="none" stroke="#4a433c" stroke-width="0.9" stroke-linecap="round" opacity=".8"/><path d="M465.0 260.0C465.8 258.2 468.1 257.3 469.5 257.5C470.9 257.7 472.9 259.1 473.5 261.0C474.1 262.9 473.8 266.8 473.0 269.0C472.2 271.2 470.4 274.1 469.0 274.0C467.6 273.9 465.2 270.8 464.5 268.5C463.8 266.2 464.2 261.8 465.0 260.0Z" fill="#92857a" stroke="#4a433c" stroke-width=".7"/><circle cx="491.3" cy="228.5" r="2.6" fill="#a39181" stroke="#5a4e44" stroke-width=".6"/><g clip-path="url(#cp8)"><path d="M401.2 477.5C401.3 475.9 401.2 474.4 403.0 473.6C404.8 472.8 406.0 472.4 412.0 472.5C418.0 472.6 432.2 474.2 439.0 474.0C445.8 473.8 449.1 471.0 453.0 471.0C456.9 471.0 459.4 472.2 462.5 474.0C465.6 475.8 469.9 479.1 471.9 482.0C473.8 484.9 474.2 489.0 474.2 491.5C474.2 494.0 473.4 495.7 472.0 497.0C470.6 498.3 468.9 499.3 465.6 499.4C462.3 499.5 456.4 498.3 452.0 497.5C447.6 496.7 444.3 495.8 439.0 494.7C433.7 493.6 425.2 492.1 420.0 491.0C414.8 489.9 410.8 489.6 407.8 488.4C404.9 487.1 403.4 485.3 402.3 483.5C401.2 481.7 401.1 479.1 401.2 477.5Z" fill="#7a6c60"/><g filter="url(#b1)"><path d="M402.0 479.0C405.0 479.5 413.7 481.0 420.0 482.0C426.3 483.0 433.0 484.7 440.0 485.0C447.0 485.3 456.5 483.5 462.0 484.0C467.5 484.5 471.2 487.3 473.0 488.0" fill="none" stroke="#ad9c8c" stroke-width="4" stroke-linecap="round" opacity="0.85"/><path d="M404.0 488.0C408.3 489.0 421.5 492.2 430.0 494.0C438.5 495.8 448.0 498.2 455.0 499.0C462.0 499.8 469.2 499.0 472.0 499.0" fill="none" stroke="#474039" stroke-width="4" stroke-linecap="round" opacity="0.8"/></g><path d="M403.5 470 L404.7 501" stroke="#463d35" stroke-width="1.1" opacity=".5"/><path d="M406.6 470 L407.8 501" stroke="#463d35" stroke-width="1.1" opacity=".5"/><path d="M409.7 470 L410.9 501" stroke="#463d35" stroke-width="1.1" opacity=".5"/><path d="M412.8 470 L414.0 501" stroke="#463d35" stroke-width="1.1" opacity=".5"/><path d="M415.9 470 L417.1 501" stroke="#463d35" stroke-width="1.1" opacity=".5"/><path d="M419.0 470 L420.2 501" stroke="#463d35" stroke-width="1.1" opacity=".5"/><path d="M422.1 470 L423.3 501" stroke="#463d35" stroke-width="1.1" opacity=".5"/><path d="M425.2 470 L426.4 501" stroke="#463d35" stroke-width="1.1" opacity=".5"/><path d="M428.3 470 L429.5 501" stroke="#463d35" stroke-width="1.1" opacity=".5"/><path d="M431.4 470 L432.6 501" stroke="#463d35" stroke-width="1.1" opacity=".5"/><path d="M434.5 470 L435.7 501" stroke="#463d35" stroke-width="1.1" opacity=".5"/><path d="M437.6 470 L438.8 501" stroke="#463d35" stroke-width="1.1" opacity=".5"/><path d="M440.7 470 L441.9 501" stroke="#463d35" stroke-width="1.1" opacity=".5"/><path d="M443.8 470 L445.0 501" stroke="#463d35" stroke-width="1.1" opacity=".5"/><path d="M446.9 470 L448.1 501" stroke="#463d35" stroke-width="1.1" opacity=".5"/><path d="M450.0 470 L451.2 501" stroke="#463d35" stroke-width="1.1" opacity=".5"/><path d="M453.1 470 L454.3 501" stroke="#463d35" stroke-width="1.1" opacity=".5"/><path d="M456.2 470 L457.4 501" stroke="#463d35" stroke-width="1.1" opacity=".5"/><path d="M459.3 470 L460.5 501" stroke="#463d35" stroke-width="1.1" opacity=".5"/><path d="M462.4 470 L463.6 501" stroke="#463d35" stroke-width="1.1" opacity=".5"/><path d="M465.5 470 L466.7 501" stroke="#463d35" stroke-width="1.1" opacity=".5"/><path d="M468.6 470 L469.8 501" stroke="#463d35" stroke-width="1.1" opacity=".5"/><path d="M471.7 470 L472.9 501" stroke="#463d35" stroke-width="1.1" opacity=".5"/></g><g clip-path="url(#cp9)"><path d="M491.4 485.3C491.3 483.1 491.9 481.1 493.0 479.5C494.1 477.9 493.5 476.1 498.0 475.8C502.5 475.5 513.0 478.1 520.0 477.5C527.0 476.9 535.4 474.4 540.0 472.5C544.6 470.6 545.5 465.4 547.5 466.0C549.5 466.6 551.1 473.3 552.3 476.0C553.5 478.7 554.6 480.0 554.7 482.0C554.8 484.0 554.3 486.4 553.0 488.0C551.7 489.6 549.9 490.4 546.9 491.6C543.9 492.8 538.6 494.1 535.0 495.0C531.4 495.9 530.0 496.9 525.0 497.0C520.0 497.1 510.2 496.2 505.0 495.5C499.8 494.8 496.0 494.7 493.7 493.0C491.4 491.3 491.5 487.6 491.4 485.3Z" fill="#7a6c60"/><g filter="url(#b1)"><path d="M492.0 485.0C495.0 485.5 503.7 487.7 510.0 488.0C516.3 488.3 523.7 488.2 530.0 487.0C536.3 485.8 544.0 482.3 548.0 481.0C552.0 479.7 553.0 479.3 554.0 479.0" fill="none" stroke="#ad9c8c" stroke-width="4" stroke-linecap="round" opacity="0.85"/><path d="M493.0 494.0C496.7 494.7 507.2 497.8 515.0 498.0C522.8 498.2 533.5 496.5 540.0 495.0C546.5 493.5 551.7 490.0 554.0 489.0" fill="none" stroke="#474039" stroke-width="4" stroke-linecap="round" opacity="0.8"/></g><path d="M493.5 466 L493.9 499" stroke="#463d35" stroke-width="1.1" opacity=".5"/><path d="M496.6 466 L496.9 499" stroke="#463d35" stroke-width="1.1" opacity=".5"/><path d="M499.6 466 L500.0 499" stroke="#463d35" stroke-width="1.1" opacity=".5"/><path d="M502.6 466 L503.0 499" stroke="#463d35" stroke-width="1.1" opacity=".5"/><path d="M505.7 466 L506.1 499" stroke="#463d35" stroke-width="1.1" opacity=".5"/><path d="M508.8 466 L509.1 499" stroke="#463d35" stroke-width="1.1" opacity=".5"/><path d="M511.8 466 L512.2 499" stroke="#463d35" stroke-width="1.1" opacity=".5"/><path d="M514.9 466 L515.2 499" stroke="#463d35" stroke-width="1.1" opacity=".5"/><path d="M517.9 466 L518.3 499" stroke="#463d35" stroke-width="1.1" opacity=".5"/><path d="M521.0 466 L521.4 499" stroke="#463d35" stroke-width="1.1" opacity=".5"/><path d="M524.0 466 L524.4 499" stroke="#463d35" stroke-width="1.1" opacity=".5"/><path d="M527.0 466 L527.4 499" stroke="#463d35" stroke-width="1.1" opacity=".5"/><path d="M530.1 466 L530.5 499" stroke="#463d35" stroke-width="1.1" opacity=".5"/><path d="M533.1 466 L533.5 499" stroke="#463d35" stroke-width="1.1" opacity=".5"/><path d="M536.2 466 L536.6 499" stroke="#463d35" stroke-width="1.1" opacity=".5"/><path d="M539.2 466 L539.6 499" stroke="#463d35" stroke-width="1.1" opacity=".5"/><path d="M542.3 466 L542.7 499" stroke="#463d35" stroke-width="1.1" opacity=".5"/><path d="M545.4 466 L545.8 499" stroke="#463d35" stroke-width="1.1" opacity=".5"/><path d="M548.4 466 L548.8 499" stroke="#463d35" stroke-width="1.1" opacity=".5"/><path d="M551.5 466 L551.9 499" stroke="#463d35" stroke-width="1.1" opacity=".5"/><path d="M554.5 466 L554.9 499" stroke="#463d35" stroke-width="1.1" opacity=".5"/></g><g clip-path="url(#cp10)"><path d="M439.0 423.6C441.5 423.0 446.8 425.8 451.0 426.3C455.2 426.8 461.3 425.6 464.0 426.7C466.7 427.8 466.2 430.8 467.0 433.0C467.8 435.2 468.3 436.3 468.7 440.0C469.1 443.7 469.3 450.6 469.3 455.0C469.3 459.4 469.9 463.9 468.7 466.5C467.5 469.1 464.3 469.4 462.0 470.5C459.7 471.6 457.8 472.0 455.0 473.0C452.2 474.0 449.2 475.6 445.0 476.5C440.8 477.4 435.0 478.4 430.0 478.5C425.0 478.6 419.1 478.1 415.0 477.3C410.9 476.5 407.2 474.8 405.5 473.5C403.8 472.2 404.3 471.6 404.7 469.7C405.1 467.8 405.6 464.3 407.8 462.0C410.0 459.7 414.9 457.8 418.0 456.0C421.1 454.2 424.0 453.9 426.5 451.0C429.0 448.1 431.2 441.9 432.8 438.4C434.4 434.9 435.0 432.5 436.0 430.0C437.0 427.5 436.5 424.2 439.0 423.6Z" fill="#978777"/><g filter="url(#b1)"><ellipse cx="420" cy="465" rx="11" ry="6" fill="#b6aa9d" opacity="0.9"/><ellipse cx="445" cy="440" rx="8" ry="10" fill="#b6aa9d" opacity="0.6"/><path d="M466.0 430.0C466.3 433.3 468.0 443.3 468.0 450.0C468.0 456.7 466.3 466.7 466.0 470.0" fill="none" stroke="#474039" stroke-width="5" stroke-linecap="round" opacity="0.7"/><path d="M406.0 475.0C410.0 475.5 421.7 478.3 430.0 478.0C438.3 477.7 451.7 473.8 456.0 473.0" fill="none" stroke="#474039" stroke-width="3" stroke-linecap="round" opacity="0.6"/></g><path d="M438.5 426.0C440.6 426.7 446.7 429.6 451.0 430.0C455.3 430.4 462.2 428.8 464.5 428.5" fill="none" stroke="#65594e" stroke-width="0.8" stroke-linecap="round" opacity=".7"/><path d="M438.5 429.0C440.6 429.7 446.7 432.6 451.0 433.0C455.3 433.4 462.2 431.8 464.5 431.5" fill="none" stroke="#65594e" stroke-width="0.8" stroke-linecap="round" opacity=".7"/><path d="M438.5 432.0C440.6 432.7 446.7 435.6 451.0 436.0C455.3 436.4 462.2 434.8 464.5 434.5" fill="none" stroke="#65594e" stroke-width="0.8" stroke-linecap="round" opacity=".7"/><path d="M433.0 439.0C435.5 440.2 442.2 445.7 448.0 446.0C453.8 446.3 464.7 441.8 468.0 441.0" fill="none" stroke="#5a4e44" stroke-width="1.1" stroke-linecap="round" opacity=".75"/><path d="M427.0 450.5C429.8 452.1 437.2 459.8 444.0 460.0C450.8 460.2 464.0 453.3 468.0 452.0" fill="none" stroke="#5a4e44" stroke-width="1.1" stroke-linecap="round" opacity=".75"/><path d="M432.0 444.0C434.3 445.3 440.0 451.6 446.0 452.0C452.0 452.4 464.3 447.4 468.0 446.5" fill="none" stroke="#cbbbab" stroke-width="1.6" stroke-linecap="round" opacity=".7"/><path d="M406.0 470.0C409.2 470.5 418.5 473.3 425.0 473.0C431.5 472.7 437.8 470.5 445.0 468.0C452.2 465.5 464.2 459.7 468.0 458.0" fill="none" stroke="#54493f" stroke-width="1.1" stroke-linecap="round" opacity=".75"/></g><g clip-path="url(#cp11)"><path d="M520.3 426.7C522.5 426.4 527.4 428.9 531.0 429.0C534.6 429.1 540.0 425.7 542.2 427.5C544.5 429.3 543.6 434.2 544.5 440.0C545.4 445.8 547.1 457.3 547.7 462.0C548.4 466.7 548.7 466.2 548.4 468.0C548.1 469.8 548.2 470.9 546.0 472.5C543.8 474.1 539.3 476.1 535.0 477.5C530.7 478.9 525.0 480.2 520.0 480.7C515.0 481.2 508.8 480.8 505.0 480.4C501.2 480.0 498.6 479.4 497.0 478.3C495.4 477.2 495.3 475.4 495.3 474.0C495.3 472.6 495.6 472.0 496.9 469.7C498.2 467.4 500.9 463.1 503.0 460.0C505.1 456.9 507.4 454.6 509.4 451.0C511.4 447.4 513.4 441.7 514.8 438.4C516.1 435.1 516.6 432.9 517.5 431.0C518.4 429.1 518.0 427.0 520.3 426.7Z" fill="#978777"/><g filter="url(#b1)"><ellipse cx="510" cy="469" rx="11" ry="6" fill="#b6aa9d" opacity="0.9"/><ellipse cx="527" cy="442" rx="8" ry="10" fill="#b6aa9d" opacity="0.6"/><path d="M544.0 430.0C544.5 433.7 546.7 445.0 547.0 452.0C547.3 459.0 546.2 468.7 546.0 472.0" fill="none" stroke="#474039" stroke-width="5" stroke-linecap="round" opacity="0.75"/><path d="M497.0 478.0C500.8 478.5 512.0 481.7 520.0 481.0C528.0 480.3 540.8 475.2 545.0 474.0" fill="none" stroke="#474039" stroke-width="3" stroke-linecap="round" opacity="0.6"/></g><path d="M520.0 429.5C521.8 430.1 527.2 432.8 531.0 433.0C534.8 433.2 540.6 430.9 542.5 430.5" fill="none" stroke="#65594e" stroke-width="0.8" stroke-linecap="round" opacity=".7"/><path d="M520.0 432.5C521.8 433.1 527.2 435.8 531.0 436.0C534.8 436.2 540.6 433.9 542.5 433.5" fill="none" stroke="#65594e" stroke-width="0.8" stroke-linecap="round" opacity=".7"/><path d="M520.0 435.5C521.8 436.1 527.2 438.8 531.0 439.0C534.8 439.2 540.6 436.9 542.5 436.5" fill="none" stroke="#65594e" stroke-width="0.8" stroke-linecap="round" opacity=".7"/><path d="M515.0 439.0C517.5 440.0 525.0 444.5 530.0 445.0C535.0 445.5 542.5 442.5 545.0 442.0" fill="none" stroke="#5a4e44" stroke-width="1.1" stroke-linecap="round" opacity=".75"/><path d="M509.5 451.0C512.4 452.3 520.9 458.7 527.0 459.0C533.1 459.3 542.8 454.0 546.0 453.0" fill="none" stroke="#5a4e44" stroke-width="1.1" stroke-linecap="round" opacity=".75"/><path d="M513.0 445.0C515.7 446.2 523.5 451.6 529.0 452.0C534.5 452.4 543.2 448.2 546.0 447.5" fill="none" stroke="#cbbbab" stroke-width="1.6" stroke-linecap="round" opacity=".7"/><path d="M496.5 473.0C499.6 473.6 509.1 476.8 515.0 476.5C520.9 476.2 526.6 473.4 532.0 471.0C537.4 468.6 544.9 463.5 547.5 462.0" fill="none" stroke="#54493f" stroke-width="1.1" stroke-linecap="round" opacity=".75"/></g><path d="M455.0 474.0C455.5 472.7 457.7 470.3 459.0 470.0C460.3 469.7 461.7 471.0 463.0 472.0C464.3 473.0 467.2 474.8 467.0 476.0C466.8 477.2 463.8 478.7 462.0 479.0C460.2 479.3 457.2 478.8 456.0 478.0C454.8 477.2 454.5 475.3 455.0 474.0Z" fill="#85766a" stroke="#4f453c" stroke-width=".6"/><g clip-path="url(#cp12)"><path d="M500.0 79.0C502.6 77.0 506.3 76.3 510.0 76.0C513.7 75.7 518.2 76.0 522.0 77.0C525.8 78.0 529.8 79.8 533.0 82.0C536.2 84.2 538.7 87.0 541.0 90.0C543.3 93.0 545.7 96.5 547.0 100.0C548.3 103.5 548.8 107.5 548.6 111.0C548.4 114.5 547.4 118.2 546.0 121.0C544.6 123.8 542.0 126.5 540.0 127.5C538.0 128.5 535.7 127.8 534.0 127.0C532.3 126.2 531.2 122.2 530.0 123.0C528.8 123.8 529.0 130.2 527.0 132.0C525.0 133.8 520.2 133.5 518.0 134.0C515.8 134.5 516.2 134.7 514.0 135.0C511.8 135.3 507.8 136.2 505.0 135.6C502.2 135.0 499.3 133.2 497.0 131.3C494.7 129.4 492.3 126.4 491.0 124.0C489.7 121.6 488.9 119.7 489.0 117.0C489.1 114.3 491.0 111.1 491.5 108.0C492.0 104.9 491.7 101.7 492.2 98.4C492.7 95.1 493.3 91.4 494.6 88.2C495.9 85.0 497.4 81.0 500.0 79.0Z" fill="#7f7063"/><g filter="url(#b2)"><ellipse cx="512" cy="88" rx="12" ry="8" fill="#b9a898" opacity="0.8"/><ellipse cx="538" cy="108" rx="5" ry="12" fill="#ad9c8c" opacity="0.6"/><ellipse cx="497" cy="120" rx="4" ry="10" fill="#9f8e7e" opacity="0.5"/><ellipse cx="529" cy="118" rx="4" ry="9" fill="#474039" opacity="0.7"/><ellipse cx="507" cy="128" rx="6" ry="6" fill="#474039" opacity="0.5"/><ellipse cx="545" cy="122" rx="4" ry="6" fill="#474039" opacity="0.5"/></g><path d="M513.0 84.0C511.3 85.3 505.3 88.7 503.0 92.0C500.7 95.3 498.8 100.7 499.0 104.0C499.2 107.3 503.2 110.7 504.0 112.0" fill="none" stroke="#54493f" stroke-width="0.9" stroke-linecap="round" opacity=".7"/><path d="M516.0 83.0C514.7 84.5 509.5 88.5 508.0 92.0C506.5 95.5 507.2 102.0 507.0 104.0" fill="none" stroke="#54493f" stroke-width="0.9" stroke-linecap="round" opacity=".7"/><path d="M518.0 83.0C517.7 84.8 515.3 90.2 516.0 94.0C516.7 97.8 521.0 104.0 522.0 106.0" fill="none" stroke="#54493f" stroke-width="0.9" stroke-linecap="round" opacity=".7"/><path d="M520.0 82.0C521.0 84.0 523.8 90.3 526.0 94.0C528.2 97.7 532.2 100.7 533.0 104.0C533.8 107.3 531.3 112.3 531.0 114.0" fill="none" stroke="#54493f" stroke-width="0.9" stroke-linecap="round" opacity=".7"/><path d="M524.0 80.0C525.8 82.0 532.2 87.7 535.0 92.0C537.8 96.3 540.2 101.3 541.0 106.0C541.8 110.7 540.2 117.7 540.0 120.0" fill="none" stroke="#54493f" stroke-width="0.9" stroke-linecap="round" opacity=".7"/><path d="M530.0 83.0C531.8 85.0 538.5 90.5 541.0 95.0C543.5 99.5 544.7 105.5 545.0 110.0C545.3 114.5 543.3 120.0 543.0 122.0" fill="none" stroke="#54493f" stroke-width="0.9" stroke-linecap="round" opacity=".7"/><path d="M500.0 90.0C499.2 92.3 496.2 99.3 495.0 104.0C493.8 108.7 493.3 115.7 493.0 118.0" fill="none" stroke="#54493f" stroke-width="0.9" stroke-linecap="round" opacity=".7"/><path d="M504.0 112.0C502.8 113.3 497.8 117.0 497.0 120.0C496.2 123.0 498.7 128.3 499.0 130.0" fill="none" stroke="#54493f" stroke-width="0.9" stroke-linecap="round" opacity=".7"/><path d="M502.0 114.0C501.8 115.7 500.3 120.8 501.0 124.0C501.7 127.2 505.2 131.5 506.0 133.0" fill="none" stroke="#54493f" stroke-width="0.9" stroke-linecap="round" opacity=".7"/><path d="M531.0 108.0C531.7 109.7 534.7 115.0 535.0 118.0C535.3 121.0 533.3 124.7 533.0 126.0" fill="none" stroke="#54493f" stroke-width="0.9" stroke-linecap="round" opacity=".7"/><path d="M537.0 106.0C537.3 107.7 539.0 112.8 539.0 116.0C539.0 119.2 537.3 123.5 537.0 125.0" fill="none" stroke="#54493f" stroke-width="0.9" stroke-linecap="round" opacity=".7"/><path d="M509.0 80.0C507.2 82.3 500.3 89.0 498.0 94.0C495.7 99.0 495.5 107.3 495.0 110.0" fill="none" stroke="#54493f" stroke-width="0.9" stroke-linecap="round" opacity=".7"/><path d="M527.0 86.0C528.5 88.3 534.3 95.7 536.0 100.0C537.7 104.3 536.8 110.0 537.0 112.0" fill="none" stroke="#54493f" stroke-width="0.9" stroke-linecap="round" opacity=".7"/><path d="M511.0 82.0C509.3 83.7 503.3 88.3 501.0 92.0C498.7 95.7 497.7 102.0 497.0 104.0" fill="none" stroke="#c6b6a6" stroke-width="1" stroke-linecap="round" opacity=".55"/><path d="M521.0 80.0C522.5 81.8 527.3 87.0 530.0 91.0C532.7 95.0 535.8 101.8 537.0 104.0" fill="none" stroke="#c6b6a6" stroke-width="1" stroke-linecap="round" opacity=".55"/><path d="M527.0 80.0C528.8 82.0 535.3 87.7 538.0 92.0C540.7 96.3 542.2 103.7 543.0 106.0" fill="none" stroke="#c6b6a6" stroke-width="1" stroke-linecap="round" opacity=".55"/><path d="M498.0 108.0C497.3 109.7 494.2 114.7 494.0 118.0C493.8 121.3 496.5 126.3 497.0 128.0" fill="none" stroke="#c6b6a6" stroke-width="1" stroke-linecap="round" opacity=".55"/><path d="M534.0 110.0C534.7 111.7 537.7 117.2 538.0 120.0C538.3 122.8 536.3 125.8 536.0 127.0" fill="none" stroke="#c6b6a6" stroke-width="1" stroke-linecap="round" opacity=".55"/><path d="M514.0 85.0C512.7 86.8 507.7 92.2 506.0 96.0C504.3 99.8 504.3 106.0 504.0 108.0" fill="none" stroke="#c6b6a6" stroke-width="1" stroke-linecap="round" opacity=".55"/><path d="M522.0 86.0C523.0 88.0 526.7 94.3 528.0 98.0C529.3 101.7 529.7 106.3 530.0 108.0" fill="none" stroke="#c6b6a6" stroke-width="1" stroke-linecap="round" opacity=".55"/></g><g clip-path="url(#cp13)"><path d="M500.5 108.5C501.4 106.4 502.9 105.3 506.0 104.5C509.1 103.7 515.5 103.2 519.0 103.5C522.5 103.8 525.3 103.9 527.0 106.0C528.7 108.1 529.1 112.8 529.0 116.0C528.9 119.2 527.8 122.4 526.5 125.0C525.2 127.6 522.8 130.1 521.0 131.5C519.2 132.9 517.4 133.4 515.5 133.2C513.6 133.0 511.4 131.9 509.5 130.5C507.6 129.1 505.4 127.2 504.0 125.0C502.6 122.8 501.4 119.8 500.8 117.0C500.2 114.2 499.6 110.6 500.5 108.5Z" fill="#a08f7f"/><g filter="url(#b0)"><ellipse cx="510" cy="120" rx="6" ry="7" fill="#c2b2a2" opacity="0.85"/><ellipse cx="526" cy="118" rx="3" ry="10" fill="#474039" opacity="0.55"/><ellipse cx="514" cy="105.5" rx="14" ry="3" fill="#474039" opacity="0.75"/><ellipse cx="505.2" cy="113.4" rx="3.2" ry="1.4" fill="#372f29" opacity="0.95"/><ellipse cx="520.8" cy="112.6" rx="3.2" ry="1.4" fill="#372f29" opacity="0.95"/><ellipse cx="515.8" cy="126.6" rx="3" ry="1" fill="#4a4038" opacity="0.85"/><ellipse cx="514.2" cy="121" rx="1.4" ry="1.4" fill="#474039" opacity="0.5"/><ellipse cx="501.5" cy="118" rx="1.5" ry="8" fill="#474039" opacity="0.5"/></g></g><path d="M500.0 111.0C501.2 110.0 504.3 107.0 507.0 105.0C509.7 103.0 512.8 101.0 516.0 99.0C519.2 97.0 524.3 94.0 526.0 93.0" fill="none" stroke="#85766a" stroke-width="3.4" stroke-linecap="round" opacity=".9"/><path d="M519.0 104.0C520.0 104.7 523.3 106.3 525.0 108.0C526.7 109.7 528.3 113.0 529.0 114.0" fill="none" stroke="#7d6e61" stroke-width="2.5" stroke-linecap="round" opacity=".9"/></svg>
<svg style="left:0;top:0" width="1024" height="576" viewBox="0 0 1024 576"><polygon points="829.8,88 850,83.8 850,92.4" fill="#f03a10"/><circle cx="855.8" cy="88.1" r="4.8" fill="#2b3ef0"/><polygon points="851.6,95.4 860.4,95.4 856,114.8" fill="#38e010"/><polygon points="813.5,101 818,97 827,97 832,101 833.5,112 831,124 827,131 818.5,131 814,124 811.5,112" fill="#9a9a9a"/><polygon points="818,97 827,97 829.5,104 826,109 819.5,109 816,104" fill="#d2d2d2"/><polygon points="813.5,101 818,97 816,104 814.5,112 811.5,112" fill="#b4b4b4"/><polygon points="827,97 832,101 833.5,112 830.5,112 829.5,104" fill="#8a8a8a"/><polygon points="819.5,109 826,109 825.5,121 820,121" fill="#cfcfcf"/><polygon points="814.5,112 819.5,109 820,121 816,124" fill="#7c7c7c"/><polygon points="826,109 830.5,112 829.5,124 825.5,121" fill="#6e6e6e"/><polygon points="816,124 820,121 825.5,121 829.5,124 827,131 818.5,131" fill="#5e5e5e"/><polygon points="810,110 811.8,108 812.5,118 810.8,117" fill="#8a8a8a"/><polygon points="833.5,108 835.5,110 834.8,117 833,118" fill="#6a6a6a"/><polygon points="812.5,133 818.5,129.5 822.5,136 827,129.5 833.5,133 832,146.5 815,147.5" fill="#d8d8d8"/><polygon points="818.5,129.5 827,129.5 825.5,138 822.5,140 819.5,138" fill="#767676"/><polygon points="827,129.5 833.5,133 832,146.5 826,140" fill="#b8b8b8"/><circle cx="673.4" cy="238.4" r="20.6" fill="none" stroke="#d46a6a" stroke-width="1.1" opacity=".9"/><circle cx="673.4" cy="238.4" r="10" fill="none" stroke="#c08080" stroke-width=".8" opacity=".5"/><circle cx="673.4" cy="238.4" r="6.6" fill="#666" opacity=".45"/><path d="M676.6 235 A4.6 4.6 0 1 1 671.8 234.1" fill="none" stroke="#f4f4f4" stroke-width="1.3"/><polygon points="671.2,232 675.6,233.4 672,236.4" fill="#f4f4f4"/></svg>
<div style="left:116.2px;top:82.8px;width:743.8px;height:417.2px;border:1px solid rgba(205,205,205,.5);border-bottom:none;border-right:1px solid rgba(218,218,218,.45)"></div>
<svg style="left:0;top:0" width="12" height="12" viewBox="0 0 12 12"><path d="M1 8.5 L4.5 6.2 L6.3 4.2 L8.6 4.6 L10.6 3.4 M5.2 6.8 L7.8 8.6 L6 10.6 M4.5 6.2 L2.6 5.2 M6.6 3 a1 1 0 1 0 .1 0" stroke="#e8e8e8" stroke-width="1.1" fill="none"/></svg>
<svg style="left:12.5px;top:1.2000000000000002px" width="84.0" height="10"><text x="0" y="6.0" font-size="5.8" fill="#e4e4e4" stroke="#e4e4e4" stroke-width="0.3" textLength="82.0" lengthAdjust="spacingAndGlyphs" font-family="Liberation Sans, sans-serif">ZBrush 2025.1.3 [masato ohata]</text></svg>
<svg style="left:100px;top:1.2000000000000002px" width="47.5" height="10"><text x="0" y="6.0" font-size="5.8" fill="#e4e4e4" stroke="#e4e4e4" stroke-width="0.3" textLength="45.5" lengthAdjust="spacingAndGlyphs" font-family="Liberation Sans, sans-serif">ZBrush Document</text></svg>
<svg style="left:154.5px;top:1.2000000000000002px" width="57.5" height="10"><text x="0" y="6.0" font-size="5.8" fill="#e4e4e4" stroke="#e4e4e4" stroke-width="0.3" textLength="55.5" lengthAdjust="spacingAndGlyphs" font-family="Liberation Sans, sans-serif">• Free Mem 93.579GB</text></svg>
<svg style="left:213px;top:1.2000000000000002px" width="50.5" height="10"><text x="0" y="6.0" font-size="5.8" fill="#e4e4e4" stroke="#e4e4e4" stroke-width="0.3" textLength="48.5" lengthAdjust="spacingAndGlyphs" font-family="Liberation Sans, sans-serif">• Active Mem 2211</text></svg>
<svg style="left:267px;top:1.2000000000000002px" width="41.5" height="10"><text x="0" y="6.0" font-size="5.8" fill="#e4e4e4" stroke="#e4e4e4" stroke-width="0.3" textLength="39.5" lengthAdjust="spacingAndGlyphs" font-family="Liberation Sans, sans-serif">• Scratch Disk 46</text></svg>
<svg style="left:314px;top:1.2000000000000002px" width="38.5" height="10"><text x="0" y="6.0" font-size="5.8" fill="#e4e4e4" stroke="#e4e4e4" stroke-width="0.3" textLength="36.5" lengthAdjust="spacingAndGlyphs" font-family="Liberation Sans, sans-serif">• ZTime▸4.019</text></svg>
<svg style="left:356px;top:1.2000000000000002px" width="65.5" height="10"><text x="0" y="6.0" font-size="5.8" fill="#e4e4e4" stroke="#e4e4e4" stroke-width="0.3" textLength="63.5" lengthAdjust="spacingAndGlyphs" font-family="Liberation Sans, sans-serif">• PolyCount▸309.868 KP</text></svg>
<svg style="left:425px;top:1.2000000000000002px" width="37.5" height="10"><text x="0" y="6.0" font-size="5.8" fill="#e4e4e4" stroke="#e4e4e4" stroke-width="0.3" textLength="35.5" lengthAdjust="spacingAndGlyphs" font-family="Liberation Sans, sans-serif">• MeshCount▸3</text></svg>
<svg style="left:466px;top:1.2000000000000002px" width="58.5" height="10"><text x="0" y="6.0" font-size="5.8" fill="#e4e4e4" stroke="#e4e4e4" stroke-width="0.3" textLength="56.5" lengthAdjust="spacingAndGlyphs" font-family="Liberation Sans, sans-serif">▸QuickSave In 55 Secs</text></svg>
<svg style="left:740.5px;top:1.2000000000000002px" width="9.0" height="10"><text x="0" y="6.0" font-size="5.8" fill="#5c5c5c" stroke="#5c5c5c" stroke-width="0.3" textLength="7.0" lengthAdjust="spacingAndGlyphs" font-family="Liberation Sans, sans-serif">AC</text></svg>
<svg style="left:756px;top:1.2000000000000002px" width="28.5" height="10"><text x="0" y="6.0" font-size="5.8" fill="#e4e4e4" stroke="#e4e4e4" stroke-width="0.3" textLength="26.5" lengthAdjust="spacingAndGlyphs" font-family="Liberation Sans, sans-serif">QuickSave</text></svg>
<svg style="left:797px;top:1.2000000000000002px" width="41.5" height="10"><text x="0" y="5.7" font-size="5.5" fill="#b4b4b4"  textLength="39.5" lengthAdjust="spacingAndGlyphs" font-family="Liberation Sans, sans-serif">See-through  0</text></svg>
<div style="left:794px;top:9.3px;width:46px;height:1px;background:#5a5a5a;"></div>
<div style="left:794.5px;top:8.4px;width:6.5px;height:2.6px;background:#f39a2b;border-radius:1.3px"></div>
<div class="b" style="left:845.2px;top:1.5px;width:19.2px;height:9px;line-height:9px;background:#f39a2b;color:#3a2408;font-size:6.3px;border-radius:1.8px;text-align:center;">Menus</div>
<svg style="left:868px;top:1.2000000000000002px" width="37.5" height="10"><text x="0" y="6.0" font-size="5.8" fill="#e4e4e4" stroke="#e4e4e4" stroke-width="0.3" textLength="35.5" lengthAdjust="spacingAndGlyphs" font-family="Liberation Sans, sans-serif">DefaultZScript</text></svg>
<svg style="left:905px;top:0" width="119" height="12"><polygon points="6.6,3.4 4,6 6.6,8.6" fill="#e0e0e0"/><rect x="8" y="4" width="2" height="4" fill="#e0e0e0"/><rect x="11" y="4" width="2" height="4" fill="#e0e0e0"/><rect x="14" y="4" width="2.5" height="4" fill="#e0e0e0"/><rect x="21" y="4" width="2.5" height="4" fill="#e0e0e0"/><rect x="24.5" y="4" width="2" height="4" fill="#e0e0e0"/><rect x="27.5" y="4" width="2" height="4" fill="#e0e0e0"/><polygon points="31,3.4 33.6,6 31,8.6" fill="#e0e0e0"/><polygon points="41.6,3.4 39,6 41.6,8.6" fill="#e0e0e0"/><rect x="43.5" y="2.5" width="6" height="5" fill="#cfcfcf"/><rect x="46.5" y="5" width="5.5" height="5" fill="#9a9a9a" stroke="#e0e0e0" stroke-width=".7"/><rect x="55" y="2.5" width="6" height="5" fill="#cfcfcf"/><rect x="58" y="5" width="5.5" height="5" fill="#9a9a9a" stroke="#e0e0e0" stroke-width=".7"/><polygon points="65,3.4 67.6,6 65,8.6" fill="#e0e0e0"/><path d="M78.5 3.5 L83.5 3.5 L81 6.5Z" fill="#f0f0f0"/><rect x="78" y="7.5" width="6" height="1.4" fill="#f0f0f0"/><rect x="93" y="5" width="5" height="4" fill="none" stroke="#f0f0f0" stroke-width="1.1"/><path d="M95 5 V3.2 H100 V7 H98" fill="none" stroke="#f0f0f0" stroke-width="1.1"/><path d="M108.5 3.5 L113.5 8.5 M113.5 3.5 L108.5 8.5" stroke="#ffffff" stroke-width="1.5"/></svg>
<div style="left:8px;top:12.5px;width:637px;height:10px;background:#2f2f2f;"></div>
<svg style="left:10px;top:13.2px" width="16" height="10"><text x="0" y="6.0" font-size="5.8" fill="#8c8c8c"  textLength="14" lengthAdjust="spacingAndGlyphs" font-family="Liberation Sans, sans-serif">Alpha</text></svg>
<svg style="left:33px;top:13.2px" width="17" height="10"><text x="0" y="6.0" font-size="5.8" fill="#8c8c8c"  textLength="15" lengthAdjust="spacingAndGlyphs" font-family="Liberation Sans, sans-serif">Brush</text></svg>
<svg style="left:56.5px;top:13.2px" width="15.5" height="10"><text x="0" y="6.0" font-size="5.8" fill="#8c8c8c"  textLength="13.5" lengthAdjust="spacingAndGlyphs" font-family="Liberation Sans, sans-serif">Color</text></svg>
<svg style="left:78.5px;top:13.2px" width="27.0" height="10"><text x="0" y="6.0" font-size="5.8" fill="#8c8c8c"  textLength="25.0" lengthAdjust="spacingAndGlyphs" font-family="Liberation Sans, sans-serif">Document</text></svg>
<svg style="left:113px;top:13.2px" width="15" height="10"><text x="0" y="6.0" font-size="5.8" fill="#8c8c8c"  textLength="13" lengthAdjust="spacingAndGlyphs" font-family="Liberation Sans, sans-serif">Draw</text></svg>
<svg style="left:135px;top:13.2px" width="25.5" height="10"><text x="0" y="6.0" font-size="5.8" fill="#8c8c8c"  textLength="23.5" lengthAdjust="spacingAndGlyphs" font-family="Liberation Sans, sans-serif">Dynamics</text></svg>
<svg style="left:167.5px;top:13.2px" width="12.0" height="10"><text x="0" y="6.0" font-size="5.8" fill="#8c8c8c"  textLength="10.0" lengthAdjust="spacingAndGlyphs" font-family="Liberation Sans, sans-serif">Edit</text></svg>
<svg style="left:187px;top:13.2px" width="10.5" height="10"><text x="0" y="6.0" font-size="5.8" fill="#8c8c8c"  textLength="8.5" lengthAdjust="spacingAndGlyphs" font-family="Liberation Sans, sans-serif">File</text></svg>
<svg style="left:204px;top:13.2px" width="16" height="10"><text x="0" y="6.0" font-size="5.8" fill="#8c8c8c"  textLength="14" lengthAdjust="spacingAndGlyphs" font-family="Liberation Sans, sans-serif">Layer</text></svg>
<svg style="left:226.5px;top:13.2px" width="14.5" height="10"><text x="0" y="6.0" font-size="5.8" fill="#8c8c8c"  textLength="12.5" lengthAdjust="spacingAndGlyphs" font-family="Liberation Sans, sans-serif">Light</text></svg>
<svg style="left:248px;top:13.2px" width="18.5" height="10"><text x="0" y="6.0" font-size="5.8" fill="#8c8c8c"  textLength="16.5" lengthAdjust="spacingAndGlyphs" font-family="Liberation Sans, sans-serif">Macro</text></svg>
<svg style="left:272.5px;top:13.2px" width="20.5" height="10"><text x="0" y="6.0" font-size="5.8" fill="#8c8c8c"  textLength="18.5" lengthAdjust="spacingAndGlyphs" font-family="Liberation Sans, sans-serif">Marker</text></svg>
<svg style="left:299px;top:13.2px" width="24.5" height="10"><text x="0" y="6.0" font-size="5.8" fill="#8c8c8c"  textLength="22.5" lengthAdjust="spacingAndGlyphs" font-family="Liberation Sans, sans-serif">Material</text></svg>
<svg style="left:330.5px;top:13.2px" width="16.5" height="10"><text x="0" y="6.0" font-size="5.8" fill="#8c8c8c"  textLength="14.5" lengthAdjust="spacingAndGlyphs" font-family="Liberation Sans, sans-serif">Movie</text></svg>
<svg style="left:353.5px;top:13.2px" width="17.5" height="10"><text x="0" y="6.0" font-size="5.8" fill="#8c8c8c"  textLength="15.5" lengthAdjust="spacingAndGlyphs" font-family="Liberation Sans, sans-serif">Picker</text></svg>
<svg style="left:377px;top:13.2px" width="33.5" height="10"><text x="0" y="6.0" font-size="5.8" fill="#8c8c8c"  textLength="31.5" lengthAdjust="spacingAndGlyphs" font-family="Liberation Sans, sans-serif">Preferences</text></svg>
<svg style="left:417px;top:13.2px" width="19.5" height="10"><text x="0" y="6.0" font-size="5.8" fill="#8c8c8c"  textLength="17.5" lengthAdjust="spacingAndGlyphs" font-family="Liberation Sans, sans-serif">Render</text></svg>
<svg style="left:443px;top:13.2px" width="19" height="10"><text x="0" y="6.0" font-size="5.8" fill="#8c8c8c"  textLength="17" lengthAdjust="spacingAndGlyphs" font-family="Liberation Sans, sans-serif">Stencil</text></svg>
<svg style="left:469px;top:13.2px" width="18" height="10"><text x="0" y="6.0" font-size="5.8" fill="#8c8c8c"  textLength="16" lengthAdjust="spacingAndGlyphs" font-family="Liberation Sans, sans-serif">Stroke</text></svg>
<svg style="left:493px;top:13.2px" width="22" height="10"><text x="0" y="6.0" font-size="5.8" fill="#8c8c8c"  textLength="20" lengthAdjust="spacingAndGlyphs" font-family="Liberation Sans, sans-serif">Texture</text></svg>
<svg style="left:523px;top:13.2px" width="12" height="10"><text x="0" y="6.0" font-size="5.8" fill="#8c8c8c"  textLength="10" lengthAdjust="spacingAndGlyphs" font-family="Liberation Sans, sans-serif">Tool</text></svg>
<svg style="left:542px;top:13.2px" width="27" height="10"><text x="0" y="6.0" font-size="5.8" fill="#8c8c8c"  textLength="25" lengthAdjust="spacingAndGlyphs" font-family="Liberation Sans, sans-serif">Transform</text></svg>
<svg style="left:576px;top:13.2px" width="21" height="10"><text x="0" y="6.0" font-size="5.8" fill="#8c8c8c"  textLength="19" lengthAdjust="spacingAndGlyphs" font-family="Liberation Sans, sans-serif">Zplugin</text></svg>
<svg style="left:604px;top:13.2px" width="19.5" height="10"><text x="0" y="6.0" font-size="5.8" fill="#8c8c8c"  textLength="17.5" lengthAdjust="spacingAndGlyphs" font-family="Liberation Sans, sans-serif">Zscript</text></svg>
<svg style="left:630px;top:13.2px" width="13.5" height="10"><text x="0" y="6.0" font-size="5.8" fill="#8c8c8c"  textLength="11.5" lengthAdjust="spacingAndGlyphs" font-family="Liberation Sans, sans-serif">Help</text></svg>
<svg style="left:11.5px;top:23.4px" width="57.0" height="10"><text x="0" y="6.0" font-size="5.8" fill="#e8971f" stroke="#e8971f" stroke-width="0.3" textLength="55.0" lengthAdjust="spacingAndGlyphs" font-family="Liberation Sans, sans-serif">Switching to Subtool 1:</text></svg>
<svg style="left:73px;top:23.4px" width="15" height="10"><text x="0" y="6.0" font-size="5.8" fill="#f0f0f0" stroke="#f0f0f0" stroke-width="0.3" textLength="13" lengthAdjust="spacingAndGlyphs" font-family="Liberation Sans, sans-serif">CAVE</text></svg>
<div style="left:10.5px;top:34px;width:37.5px;height:18.5px;background:#3e3e3e;border-radius:1.5px;"></div>
<svg style="left:17px;top:39.715px" width="28" height="10"><text x="0" y="5.9" font-size="5.7" fill="#d6d6d6"  textLength="26" lengthAdjust="spacingAndGlyphs" font-family="Liberation Sans, sans-serif">Home Page</text></svg>
<div style="left:51px;top:34px;width:38px;height:18.5px;background:#3e3e3e;border-radius:1.5px;"></div>
<svg style="left:59px;top:39.715px" width="24" height="10"><text x="0" y="5.9" font-size="5.7" fill="#d6d6d6"  textLength="22" lengthAdjust="spacingAndGlyphs" font-family="Liberation Sans, sans-serif">LightBox</text></svg>
<div style="left:90.5px;top:34px;width:38.5px;height:18.5px;background:#323232;border-radius:1.5px;"></div>
<svg style="left:92.5px;top:39.715px" width="36.0" height="10"><text x="0" y="5.9" font-size="5.7" fill="#d6d6d6"  textLength="34.0" lengthAdjust="spacingAndGlyphs" font-family="Liberation Sans, sans-serif">Live Boolean</text></svg>
<div style="left:131.5px;top:34px;width:18.5px;height:18px;background:#f39a2b;border-radius:2px;"></div>
<div style="left:152px;top:34px;width:18.19999999999999px;height:18px;background:#f39a2b;border-radius:2px;"></div>
<svg style="left:131.5px;top:34px" width="19" height="18"><path d="M4.2 3.2 L15 2.8 L12.2 10 L5.2 10 Z" fill="none" stroke="#3a2408" stroke-width="1.1"/><rect x="3.3" y="2.2" width="2" height="2" fill="#3a2408"/><rect x="14" y="1.8" width="2" height="2" fill="#3a2408"/><rect x="11.2" y="9" width="2" height="2" fill="#3a2408"/><rect x="4.2" y="9" width="2" height="2" fill="#3a2408"/></svg>
<svg style="left:136px;top:44.32px" width="11" height="10"><text x="0" y="5.8" font-size="5.6" fill="#3a2408"  textLength="9" lengthAdjust="spacingAndGlyphs" font-family="Liberation Sans, sans-serif">Edit</text></svg>
<svg style="left:152px;top:34px" width="19" height="18"><path d="M9 2.5 V5.5 M9 8.5 V11.5 M4.5 7 H7.5 M10.5 7 H13.5" stroke="#3a2408" stroke-width="1.1"/><rect x="8.4" y="6.4" width="1.2" height="1.2" fill="#3a2408"/></svg>
<svg style="left:154.5px;top:44.32px" width="15.0" height="10"><text x="0" y="5.8" font-size="5.6" fill="#3a2408"  textLength="13.0" lengthAdjust="spacingAndGlyphs" font-family="Liberation Sans, sans-serif">Draw</text></svg>
<svg style="left:174px;top:34px;overflow:visible" width="18" height="18"><g transform="rotate(0 6 10)"><rect x="2.5" y="6" width="7" height="7" fill="#6a6a6a" stroke="#9a9a9a" stroke-width=".8"/><rect x="4" y="4.5" width="7" height="7" fill="#555" stroke="#9a9a9a" stroke-width=".6"/></g><rect x="7.5" y="1.5" width="7" height="7" fill="#222" stroke="#e6e6e6" stroke-width="1"/><text x="11" y="7.4" font-size="5.6" font-weight="bold" text-anchor="middle" fill="#f2f2f2" font-family="Liberation Sans, sans-serif">M</text></svg>
<svg style="left:174px;top:44.52px" width="14.5" height="10"><text x="0" y="5.8" font-size="5.6" fill="#c8c8c8"  textLength="12.5" lengthAdjust="spacingAndGlyphs" font-family="Liberation Sans, sans-serif">Move</text></svg>
<svg style="left:194px;top:34px;overflow:visible" width="18" height="18"><g transform="rotate(0 6 10)"><rect x="2.5" y="6" width="7" height="7" fill="#6a6a6a" stroke="#9a9a9a" stroke-width=".8"/><rect x="4" y="4.5" width="7" height="7" fill="#555" stroke="#9a9a9a" stroke-width=".6"/></g><rect x="7.5" y="1.5" width="7" height="7" fill="#222" stroke="#e6e6e6" stroke-width="1"/><text x="11" y="7.4" font-size="5.6" font-weight="bold" text-anchor="middle" fill="#f2f2f2" font-family="Liberation Sans, sans-serif">S</text></svg>
<svg style="left:194px;top:44.52px" width="14.5" height="10"><text x="0" y="5.8" font-size="5.6" fill="#c8c8c8"  textLength="12.5" lengthAdjust="spacingAndGlyphs" font-family="Liberation Sans, sans-serif">Scale</text></svg>
<svg style="left:214px;top:34px;overflow:visible" width="18" height="18"><g transform="rotate(-20 6 10)"><rect x="2.5" y="6" width="7" height="7" fill="#6a6a6a" stroke="#9a9a9a" stroke-width=".8"/><rect x="4" y="4.5" width="7" height="7" fill="#555" stroke="#9a9a9a" stroke-width=".6"/></g><rect x="7.5" y="1.5" width="7" height="7" fill="#222" stroke="#e6e6e6" stroke-width="1"/><text x="11" y="7.4" font-size="5.6" font-weight="bold" text-anchor="middle" fill="#f2f2f2" font-family="Liberation Sans, sans-serif">R</text></svg>
<svg style="left:214.5px;top:44.52px" width="17.0" height="10"><text x="0" y="5.8" font-size="5.6" fill="#c8c8c8"  textLength="15.0" lengthAdjust="spacingAndGlyphs" font-family="Liberation Sans, sans-serif">Rotate</text></svg>
<div style="left:233px;top:34px;width:18.5px;height:18.299999999999997px;background:#c17a27;border-radius:2px;"></div>
<svg style="left:233px;top:34px" width="19" height="19"><circle cx="9.2" cy="9" r="5.6" fill="#b67326" stroke="#9c6322" stroke-width="1"/></svg>
<svg style="left:253px;top:34px" width="19" height="19"><circle cx="9.4" cy="9" r="7.6" fill="#d4d4d4" stroke="#4a4a4a" stroke-width="1"/><path d="M9.4 1.6 C4 4 14 8 9.4 9 C4 10.5 14 14 9.4 16.4 A7.5 7.5 0 0 1 9.4 1.6Z" fill="#555"/><path d="M9.4 1.6 C4 4 14 8 9.4 9 C4 10.5 14 14 9.4 16.4" fill="none" stroke="#f4f4f4" stroke-width="1.2"/></svg>
<div style="left:273.5px;top:34.4px;width:11.699999999999989px;height:7.399999999999999px;background:#f39a2b;border-radius:1.5px;"></div>
<svg style="left:276px;top:34.565px" width="5.5" height="10"><text x="0" y="5.9" font-size="5.7" fill="#3a2408"  textLength="3.5" lengthAdjust="spacingAndGlyphs" font-family="Liberation Sans, sans-serif">A</text></svg>
<div style="left:286.5px;top:34.4px;width:67.0px;height:7.399999999999999px;background:#323232;border-radius:1.5px;"></div>
<svg style="left:289px;top:34.665000000000006px" width="14.5" height="10"><text x="0" y="5.9" font-size="5.7" fill="#d6d6d6"  textLength="12.5" lengthAdjust="spacingAndGlyphs" font-family="Liberation Sans, sans-serif">Mrgb</text></svg>
<svg style="left:315.7px;top:34.665000000000006px" width="11.300000000000011" height="10"><text x="0" y="5.9" font-size="5.7" fill="#d6d6d6"  textLength="9.300000000000011" lengthAdjust="spacingAndGlyphs" font-family="Liberation Sans, sans-serif">Rgb</text></svg>
<svg style="left:343.2px;top:34.665000000000006px" width="6.400000000000034" height="10"><text x="0" y="5.9" font-size="5.7" fill="#d6d6d6"  textLength="4.400000000000034" lengthAdjust="spacingAndGlyphs" font-family="Liberation Sans, sans-serif">M</text></svg>
<div style="left:354.7px;top:34.4px;width:24.600000000000023px;height:7.399999999999999px;background:#f39a2b;border-radius:1.5px;"></div>
<svg style="left:357.5px;top:34.565px" width="16.5" height="10"><text x="0" y="5.9" font-size="5.7" fill="#3a2408"  textLength="14.5" lengthAdjust="spacingAndGlyphs" font-family="Liberation Sans, sans-serif">Zadd</text></svg>
<div style="left:380.5px;top:34.4px;width:50.5px;height:7.399999999999999px;background:#323232;border-radius:1.5px;"></div>
<svg style="left:383.3px;top:34.665000000000006px" width="14.5" height="10"><text x="0" y="5.9" font-size="5.7" fill="#d6d6d6"  textLength="12.5" lengthAdjust="spacingAndGlyphs" font-family="Liberation Sans, sans-serif">Zsub</text></svg>
<svg style="left:410.2px;top:34.665000000000006px" width="12.100000000000023" height="10"><text x="0" y="5.9" font-size="5.7" fill="#5c5c5c"  textLength="10.100000000000023" lengthAdjust="spacingAndGlyphs" font-family="Liberation Sans, sans-serif">Zcut</text></svg>
<svg style="left:275px;top:43.365px" width="35.5" height="10"><text x="0" y="5.9" font-size="5.7" fill="#5c5c5c"  textLength="33.5" lengthAdjust="spacingAndGlyphs" font-family="Liberation Sans, sans-serif">Rgb Intensity</text></svg>
<div style="left:273px;top:50.5px;width:80px;height:1px;background:#3c3c3c;"></div>
<div style="left:345.5px;top:49.699999999999996px;width:7px;height:2.6px;background:#8f5f25;border-radius:1.3px;"></div>
<svg style="left:359.4px;top:43.365px" width="37.900000000000034" height="10"><text x="0" y="5.9" font-size="5.7" fill="#d6d6d6"  textLength="35.900000000000034" lengthAdjust="spacingAndGlyphs" font-family="Liberation Sans, sans-serif">Z Intensity 25</text></svg>
<div style="left:355px;top:50.5px;width:76px;height:1px;background:#585858;"></div>
<div style="left:390.2px;top:49.699999999999996px;width:7px;height:2.6px;background:#f39a2b;border-radius:1.3px;"></div>
<div style="left:435.6px;top:34px;width:18.299999999999955px;height:18px;background:#f39a2b;border-radius:2px;"></div>
<svg style="left:435.6px;top:34px" width="19" height="18"><circle cx="7" cy="10" r="5" fill="none" stroke="#7a4a12" stroke-width="1"/><circle cx="7" cy="10" r="2.6" fill="none" stroke="#7a4a12" stroke-width=".8"/><circle cx="7" cy="10" r=".8" fill="#b02a10"/><path d="M12.5 9 L16.5 2.5" stroke="#3a2408" stroke-width="1.6"/><path d="M12 9.5 L13.6 7" stroke="#b02a10" stroke-width="1.8"/></svg>
<span style="left:447.2px;top:44.55px;color:#3a2408;font-size:7px;bold">S</span>
<svg style="left:457.8px;top:33.465px" width="33.0" height="10"><text x="0" y="5.9" font-size="5.7" fill="#d6d6d6"  textLength="31.0" lengthAdjust="spacingAndGlyphs" font-family="Liberation Sans, sans-serif">Focal Shift  0</text></svg>
<div style="left:457px;top:40.6px;width:78px;height:1px;background:#585858;"></div>
<div style="left:492.2px;top:39.8px;width:7px;height:2.6px;background:#f39a2b;border-radius:1.3px;"></div>
<svg style="left:457.8px;top:43.365px" width="35.19999999999999" height="10"><text x="0" y="5.9" font-size="5.7" fill="#d6d6d6"  textLength="33.19999999999999" lengthAdjust="spacingAndGlyphs" font-family="Liberation Sans, sans-serif">Draw Size  64</text></svg>
<div style="left:457px;top:50.5px;width:57px;height:1px;background:#585858;"></div>
<div style="left:469.5px;top:49.699999999999996px;width:7px;height:2.6px;background:#f39a2b;border-radius:1.3px;"></div>
<svg style="left:514.8px;top:43.67px" width="20.800000000000068" height="10"><text x="0" y="4.8" font-size="4.6" fill="#f0f0f0" stroke="#f0f0f0" stroke-width="0.3" textLength="18.800000000000068" lengthAdjust="spacingAndGlyphs" font-family="Liberation Sans, sans-serif">Dynamic</text></svg>
<svg style="left:536px;top:34px" width="20" height="19"><circle cx="7.4" cy="9.8" r="5.3" fill="none" stroke="#8a8a8a" stroke-width="1"/><circle cx="7.4" cy="9.8" r="2.5" fill="none" stroke="#777" stroke-width=".8"/><circle cx="7.4" cy="9.8" r=".7" fill="#ddd"/><path d="M13 9 L17 2.8" stroke="#e8e8e8" stroke-width="1.7"/></svg>
<span style="left:548.6px;top:43.800000000000004px;color:#e8e8e8;font-size:8px;">D</span>
<svg style="left:559.5px;top:34.065000000000005px" width="53.5" height="10"><text x="0" y="5.9" font-size="5.7" fill="#d6d6d6"  textLength="51.5" lengthAdjust="spacingAndGlyphs" font-family="Liberation Sans, sans-serif">ActivePoints: 34,999</text></svg>
<svg style="left:559.5px;top:44.065000000000005px" width="54.5" height="10"><text x="0" y="5.9" font-size="5.7" fill="#d6d6d6"  textLength="52.5" lengthAdjust="spacingAndGlyphs" font-family="Liberation Sans, sans-serif">TotalPoints: 328,885</text></svg>
<div style="left:617px;top:34px;width:43px;height:8.5px;background:#323232;border-radius:1.5px;"></div>
<svg style="left:623px;top:34.715px" width="32.5" height="10"><text x="0" y="5.9" font-size="5.7" fill="#d6d6d6"  textLength="30.5" lengthAdjust="spacingAndGlyphs" font-family="Liberation Sans, sans-serif">Depth Mask</text></svg>
<div style="left:448.8px;top:56.2px;width:39.2px;height:4.7px;background:#f8a02e;border-radius:1px;"></div>
<div style="left:3.4px;top:260px;width:1.6px;height:67px;background:#3a3a3a;"></div>
<svg style="left:1.6px;top:287.4px" width="6" height="12"><path d="M0.5 0.8 L4.6 3 L0.5 5.2Z" fill="#777"/><path d="M0.5 6.6 L4.6 6.6 L2.5 10.5Z" fill="#666"/></svg>
<div style="left:10.2px;top:55.2px;width:37.6px;height:38.2px;background:#3b3b3b;border-radius:1.5px;"></div>
<svg style="left:10.2px;top:55.2px" width="38" height="38"><defs><radialGradient id="gs" cx=".42" cy=".35" r=".7"><stop offset="0" stop-color="#cfcfcf"/><stop offset=".55" stop-color="#a9a9a9"/><stop offset="1" stop-color="#5e5e5e"/></radialGradient></defs><circle cx="18" cy="14.5" r="15.3" fill="url(#gs)"/><path d="M9 9 C13 2 26 2 26.5 10 C27 17 18 19 16 14.5 C15 11 19 9.5 21 11" fill="none" stroke="#e4e4e4" stroke-width="2.6" stroke-linecap="round" opacity=".85"/><path d="M11 11.5 C14 5 25 5 24.5 11 C24 16 18.5 16.5 18 14" fill="none" stroke="#7c7c7c" stroke-width="1.2" opacity=".8"/></svg>
<div style="left:10.2px;top:87px;width:37.6px;height:6.4px;background:#434343;"></div>
<svg style="left:18.5px;top:86.865px" width="23.5" height="10"><text x="0" y="5.9" font-size="5.7" fill="#c4c4c4"  textLength="21.5" lengthAdjust="spacingAndGlyphs" font-family="Liberation Sans, sans-serif">Standard</text></svg>
<div style="left:10.2px;top:96.6px;width:37.6px;height:39px;background:#3b3b3b;border-radius:1.5px;"></div>
<div style="left:10.2px;top:128.6px;width:37.6px;height:7px;background:#434343;"></div>
<svg style="left:0;top:0" width="60" height="140"><circle cx="15.6" cy="102.3" r="2.1" fill="#fafafa"/><circle cx="15.7" cy="109" r="2.1" fill="#fafafa"/><circle cx="19" cy="115.3" r="2.1" fill="#fafafa"/><circle cx="25" cy="120" r="2.1" fill="#fafafa"/><circle cx="33.1" cy="120.4" r="2.1" fill="#fafafa"/><circle cx="40.6" cy="117.3" r="2.1" fill="#fafafa"/></svg>
<svg style="left:23.5px;top:129.065px" width="13.0" height="10"><text x="0" y="5.9" font-size="5.7" fill="#9a9a9a"  textLength="11.0" lengthAdjust="spacingAndGlyphs" font-family="Liberation Sans, sans-serif">Dots</text></svg>
<div style="left:10.2px;top:138px;width:37.6px;height:38.6px;background:#3b3b3b;border-radius:1.5px;"></div>
<div style="left:11px;top:139px;width:36px;height:31px;background:radial-gradient(circle at 50% 48%,#ffffff 0,#ffffff 18%,#b4b4b4 40%,#6a6a6a 60%,#3b3b3b 82%);"></div>
<div style="left:10.2px;top:170px;width:37.6px;height:6.6px;background:#434343;"></div>
<svg style="left:13.5px;top:169.865px" width="34.5" height="10"><text x="0" y="5.9" font-size="5.7" fill="#c4c4c4"  textLength="32.5" lengthAdjust="spacingAndGlyphs" font-family="Liberation Sans, sans-serif">~BrushAlpha</text></svg>
<div style="left:10.2px;top:178.6px;width:37.6px;height:38px;background:#3b3b3b;border-radius:1.5px;"></div>
<div style="left:10.2px;top:210px;width:37.6px;height:6.6px;background:#434343;"></div>
<svg style="left:15.5px;top:210.065px" width="29.5" height="10"><text x="0" y="5.9" font-size="5.7" fill="#c4c4c4"  textLength="27.5" lengthAdjust="spacingAndGlyphs" font-family="Liberation Sans, sans-serif">Texture Off</text></svg>
<div style="left:10.2px;top:218.6px;width:37.6px;height:38px;background:#3b3b3b;border-radius:1.5px;"></div>
<div style="left:12.5px;top:219.6px;width:33px;height:31.5px;background:radial-gradient(circle at 47% 38%,#ae9b8a 0,#9e8b7a 30%,#806e5f 55%,#54473d 68%,#3b3b3b 71%);border-radius:50%;"></div>
<svg style="left:10.6px;top:250.665px" width="39.0" height="10"><text x="0" y="5.9" font-size="5.7" fill="#c4c4c4"  textLength="37.0" lengthAdjust="spacingAndGlyphs" font-family="Liberation Sans, sans-serif">StartupMateria</text></svg>
<svg style="left:0;top:0" width="100" height="262"><defs><radialGradient id="sb" cx=".4" cy=".35" r=".75"><stop offset="0" stop-color="#c6c6c6"/><stop offset=".5" stop-color="#9a9a9a"/><stop offset="1" stop-color="#4a4a4a"/></radialGradient><radialGradient id="sb2" cx=".4" cy=".35" r=".75"><stop offset="0" stop-color="#b0b0b0"/><stop offset=".5" stop-color="#888"/><stop offset="1" stop-color="#444"/></radialGradient></defs>
<path d="M53.7 58.2 L58.7 55.7 L64.2 58.2 L64.2 64.7 L58.7 67.7 L53.7 64.7Z" fill="#8e8e8e" stroke="#d0d0d0" stroke-width=".8"/><path d="M53.7 58.2 L58.7 60.7 L64.2 58.2 M58.7 60.7 V67.7 M56.2 56.900000000000006 V66.2 M61.400000000000006 56.900000000000006 V66.2 M53.7 61.7 L58.7 64.2 L64.2 61.7" fill="none" stroke="#d8d8d8" stroke-width=".6"/>
<circle cx="75.9" cy="58.7" r="3.1" fill="url(#sb)"/><circle cx="83.5" cy="58.7" r="3.1" fill="url(#sb)"/><circle cx="79.7" cy="64.3" r="3.1" fill="url(#sb)"/>
<circle cx="58.7" cy="81.85" r="6.2" fill="url(#sb2)"/><path d="M55.2 80.85 C57.7 77.85 61.7 78.35 62.2 81.85" stroke="#dcdcdc" stroke-width="1.1" fill="none" opacity=".55"/>
<path d="M72.7 77.85 C76.7 80.85 79.7 79.85 80.7 76.85 C82.7 80.85 85.7 83.85 86.7 87.85 C82.7 85.85 76.7 84.85 72.7 77.85Z" fill="#e2e2e2"/>
<circle cx="58.7" cy="102.0" r="6.2" fill="url(#sb)"/><path d="M55.2 101.0 C57.7 98.0 61.7 98.5 62.2 102.0" stroke="#dcdcdc" stroke-width="1.1" fill="none" opacity=".55"/>
<circle cx="79.7" cy="102.0" r="6.2" fill="url(#sb2)"/><path d="M76.2 101.0 C78.7 98.0 82.7 98.5 83.2 102.0" stroke="#dcdcdc" stroke-width="1.1" fill="none" opacity=".55"/>
<circle cx="58.7" cy="122.15" r="6.2" fill="url(#sb2)"/><path d="M55.2 121.15 C57.7 118.15 61.7 118.65 62.2 122.15" stroke="#dcdcdc" stroke-width="1.1" fill="none" opacity=".55"/>
<circle cx="79.7" cy="122.15" r="6.2" fill="url(#sb)"/><path d="M76.2 121.15 C78.7 118.15 82.7 118.65 83.2 122.15" stroke="#dcdcdc" stroke-width="1.1" fill="none" opacity=".55"/>
<circle cx="58.7" cy="142.3" r="6.2" fill="url(#sb)"/><path d="M55.2 141.3 C57.7 138.3 61.7 138.8 62.2 142.3" stroke="#dcdcdc" stroke-width="1.1" fill="none" opacity=".55"/>
<circle cx="79.7" cy="142.3" r="6.2" fill="url(#sb2)"/><path d="M76.2 141.3 C78.7 138.3 82.7 138.8 83.2 142.3" stroke="#dcdcdc" stroke-width="1.1" fill="none" opacity=".55"/>
<circle cx="58.7" cy="162.45" r="6.2" fill="url(#sb2)"/><path d="M55.2 161.45 C57.7 158.45 61.7 158.95 62.2 162.45" stroke="#dcdcdc" stroke-width="1.1" fill="none" opacity=".55"/>
<circle cx="79.7" cy="162.45" r="6.2" fill="url(#sb)"/><path d="M76.2 161.45 C78.7 158.45 82.7 158.95 83.2 162.45" stroke="#dcdcdc" stroke-width="1.1" fill="none" opacity=".55"/>
<path d="M52.7 177.6 L59.7 181.6 L63.7 176.6 L64.7 183.6 L57.7 185.6 L52.7 188.6Z" fill="#b8b8b8"/>
<circle cx="79.7" cy="182.6" r="6.2" fill="url(#sb2)"/><path d="M76.2 181.6 C78.7 178.6 82.7 179.1 83.2 182.6" stroke="#dcdcdc" stroke-width="1.1" fill="none" opacity=".55"/>
<circle cx="58.7" cy="202.75" r="6.2" fill="url(#sb2)"/><path d="M55.2 201.75 C57.7 198.75 61.7 199.25 62.2 202.75" stroke="#dcdcdc" stroke-width="1.1" fill="none" opacity=".55"/>
<circle cx="75.9" cy="199.75" r="3.1" fill="url(#sb)"/><circle cx="83.5" cy="199.75" r="3.1" fill="url(#sb)"/><circle cx="79.7" cy="205.35" r="3.1" fill="url(#sb)"/>
<rect x="51.7" y="216.39999999999998" width="14" height="13" fill="#6e6e6e"/><path d="M51.7 225.89999999999998 C55.7 217.89999999999998 60.7 227.89999999999998 65.7 218.89999999999998" stroke="#b9b9b9" stroke-width="2.4" fill="none" opacity=".8"/>
<path d="M73.7 224.89999999999998 C74.7 217.89999999999998 82.7 216.89999999999998 86.7 219.89999999999998 C82.7 221.89999999999998 84.7 226.89999999999998 78.7 227.89999999999998 Z" fill="#c9c9c9"/>
<rect x="51.7" y="236.55" width="14" height="13" fill="#6e6e6e"/><path d="M51.7 246.05 C55.7 238.05 60.7 248.05 65.7 239.05" stroke="#b9b9b9" stroke-width="2.4" fill="none" opacity=".8"/>
<rect x="72.7" y="236.55" width="14" height="13" fill="#6e6e6e"/><path d="M72.7 246.05 C76.7 238.05 81.7 248.05 86.7 239.05" stroke="#b9b9b9" stroke-width="2.4" fill="none" opacity=".8"/>
</svg>
<svg style="left:51px;top:67.11999999999999px" width="20.299999999999997" height="10"><text x="0" y="5.8" font-size="5.6" fill="#c4c4c4"  textLength="18.299999999999997" lengthAdjust="spacingAndGlyphs" font-family="Liberation Sans, sans-serif">ZModel</text></svg>
<svg style="left:72px;top:67.11999999999999px" width="18.299999999999997" height="10"><text x="0" y="5.8" font-size="5.6" fill="#c4c4c4"  textLength="16.299999999999997" lengthAdjust="spacingAndGlyphs" font-family="Liberation Sans, sans-serif">IMM Pr</text></svg>
<svg style="left:52.5px;top:87.28999999999999px" width="17.5" height="10"><text x="0" y="5.8" font-size="5.6" fill="#c4c4c4"  textLength="15.5" lengthAdjust="spacingAndGlyphs" font-family="Liberation Sans, sans-serif">Chisel</text></svg>
<svg style="left:72.5px;top:87.28999999999999px" width="17.0" height="10"><text x="0" y="5.8" font-size="5.6" fill="#c4c4c4"  textLength="15.0" lengthAdjust="spacingAndGlyphs" font-family="Liberation Sans, sans-serif">MoveT</text></svg>
<svg style="left:51px;top:107.46px" width="20.299999999999997" height="10"><text x="0" y="5.8" font-size="5.6" fill="#c4c4c4"  textLength="18.299999999999997" lengthAdjust="spacingAndGlyphs" font-family="Liberation Sans, sans-serif">SK_Carv</text></svg>
<svg style="left:71px;top:107.46px" width="19.599999999999994" height="10"><text x="0" y="5.8" font-size="5.6" fill="#c4c4c4"  textLength="17.599999999999994" lengthAdjust="spacingAndGlyphs" font-family="Liberation Sans, sans-serif">SK_IMM</text></svg>
<svg style="left:51px;top:127.63px" width="20.299999999999997" height="10"><text x="0" y="5.8" font-size="5.6" fill="#c4c4c4"  textLength="18.299999999999997" lengthAdjust="spacingAndGlyphs" font-family="Liberation Sans, sans-serif">hPolish</text></svg>
<svg style="left:71px;top:127.63px" width="19.599999999999994" height="10"><text x="0" y="5.8" font-size="5.6" fill="#c4c4c4"  textLength="17.599999999999994" lengthAdjust="spacingAndGlyphs" font-family="Liberation Sans, sans-serif">sk cloth</text></svg>
<svg style="left:51px;top:147.79999999999998px" width="20.299999999999997" height="10"><text x="0" y="5.8" font-size="5.6" fill="#c4c4c4"  textLength="18.299999999999997" lengthAdjust="spacingAndGlyphs" font-family="Liberation Sans, sans-serif">SK_Clot</text></svg>
<svg style="left:71px;top:147.79999999999998px" width="19.599999999999994" height="10"><text x="0" y="5.8" font-size="5.6" fill="#c4c4c4"  textLength="17.599999999999994" lengthAdjust="spacingAndGlyphs" font-family="Liberation Sans, sans-serif">MAHcut</text></svg>
<svg style="left:53.5px;top:167.96999999999997px" width="14.5" height="10"><text x="0" y="5.8" font-size="5.6" fill="#c4c4c4"  textLength="12.5" lengthAdjust="spacingAndGlyphs" font-family="Liberation Sans, sans-serif">Pinch</text></svg>
<svg style="left:71px;top:167.96999999999997px" width="19.599999999999994" height="10"><text x="0" y="5.8" font-size="5.6" fill="#c4c4c4"  textLength="17.599999999999994" lengthAdjust="spacingAndGlyphs" font-family="Liberation Sans, sans-serif">MAHcut</text></svg>
<svg style="left:51px;top:188.14px" width="20.299999999999997" height="10"><text x="0" y="5.8" font-size="5.6" fill="#c4c4c4"  textLength="18.299999999999997" lengthAdjust="spacingAndGlyphs" font-family="Liberation Sans, sans-serif">SK_AirB</text></svg>
<svg style="left:71px;top:188.14px" width="19.599999999999994" height="10"><text x="0" y="5.8" font-size="5.6" fill="#c4c4c4"  textLength="17.599999999999994" lengthAdjust="spacingAndGlyphs" font-family="Liberation Sans, sans-serif">SK_Clay</text></svg>
<svg style="left:51px;top:208.30999999999997px" width="20.299999999999997" height="10"><text x="0" y="5.8" font-size="5.6" fill="#c4c4c4"  textLength="18.299999999999997" lengthAdjust="spacingAndGlyphs" font-family="Liberation Sans, sans-serif">ClayTul</text></svg>
<svg style="left:72px;top:208.30999999999997px" width="18.299999999999997" height="10"><text x="0" y="5.8" font-size="5.6" fill="#c4c4c4"  textLength="16.299999999999997" lengthAdjust="spacingAndGlyphs" font-family="Liberation Sans, sans-serif">IMM Pr</text></svg>
<svg style="left:51px;top:228.48px" width="20.299999999999997" height="10"><text x="0" y="5.8" font-size="5.6" fill="#c4c4c4"  textLength="18.299999999999997" lengthAdjust="spacingAndGlyphs" font-family="Liberation Sans, sans-serif">Carve_t</text></svg>
<svg style="left:71px;top:228.48px" width="19.599999999999994" height="10"><text x="0" y="5.8" font-size="5.6" fill="#c4c4c4"  textLength="17.599999999999994" lengthAdjust="spacingAndGlyphs" font-family="Liberation Sans, sans-serif">SnakeH</text></svg>
<svg style="left:51px;top:248.65px" width="20.299999999999997" height="10"><text x="0" y="5.8" font-size="5.6" fill="#c4c4c4"  textLength="18.299999999999997" lengthAdjust="spacingAndGlyphs" font-family="Liberation Sans, sans-serif">Finger_</text></svg>
<svg style="left:71px;top:248.65px" width="19.599999999999994" height="10"><text x="0" y="5.8" font-size="5.6" fill="#c4c4c4"  textLength="17.599999999999994" lengthAdjust="spacingAndGlyphs" font-family="Liberation Sans, sans-serif">Build_H</text></svg>
<div style="left:8.1px;top:258.7px;width:41.1px;height:40.9px;background:conic-gradient(from -45deg,#ff0000 0,#ff8000 6%,#ffff00 13%,#80ff00 19%,#00ff00 25%,#00ff60 37%,#00ffff 50%,#0080ff 58%,#0000ff 68%,#8000ff 76%,#ff00ff 86%,#ff0080 94%,#ff0000 100%);"></div>
<div style="left:15.2px;top:265.7px;width:27.3px;height:27px;background:linear-gradient(to top,#000 2%,rgba(0,0,0,0) 100%),linear-gradient(to right,#ffffff,#e01010);"></div>
<div style="left:9.6px;top:260.4px;width:1.8px;height:1.8px;border:.7px solid #fff;background:#d02020"></div>
<div style="left:15.4px;top:266px;width:1.6px;height:1.6px;background:#444;"></div>
<div style="left:51.2px;top:260.2px;width:36.599999999999994px;height:7.100000000000023px;background:#3e3e3e;border-radius:1.5px;"></div>
<svg style="left:52.5px;top:260.21500000000003px" width="17.5" height="10"><text x="0" y="5.9" font-size="5.7" fill="#d6d6d6"  textLength="15.5" lengthAdjust="spacingAndGlyphs" font-family="Liberation Sans, sans-serif">Export</text></svg>
<div style="left:51.2px;top:269.6px;width:36.599999999999994px;height:28.19999999999999px;background:#3e3e3e;border-radius:1.5px;"></div>
<svg style="left:52.5px;top:280.1650000000001px" width="26.5" height="10"><text x="0" y="5.9" font-size="5.7" fill="#d6d6d6"  textLength="24.5" lengthAdjust="spacingAndGlyphs" font-family="Liberation Sans, sans-serif">ClayPatch</text></svg>
<div style="left:51.2px;top:299.3px;width:36.6px;height:16.4px;background:linear-gradient(#30384a,#252a36);"></div>
<svg style="left:51.2px;top:299.3px" width="37" height="17"><path d="M9.5 3 L15 8.5 L9.5 14 L4 8.5Z" fill="#a58a2a"/><path d="M7.5 7 h4 v1 h-3 v1.5 h3" stroke="#574810" stroke-width=".8" fill="none"/><path d="M22 14 C26 13 27 9 28 4 L29.5 2.5 L30 6 C30 10 33 11 30 13.5 Z" fill="#9a8128"/></svg>
<div style="left:10px;top:301px;width:38px;height:8px;background:#323232;border-radius:1.5px;"></div>
<svg style="left:11.3px;top:301.46500000000003px" width="23.7" height="10"><text x="0" y="5.9" font-size="5.7" fill="#d6d6d6"  textLength="21.7" lengthAdjust="spacingAndGlyphs" font-family="Liberation Sans, sans-serif">Gradient</text></svg>
<div style="left:9.4px;top:310.6px;width:18.7px;height:18.4px;background:#000;border-radius:1.5px;"></div>
<div style="left:30px;top:310.6px;width:18px;height:18.4px;background:#fff;border-radius:1.5px;"></div>
<div style="left:49.2px;top:320.4px;width:44.599999999999994px;height:18.0px;background:#3e3e3e;border-radius:1.5px;"></div>
<svg style="left:50px;top:325.865px" width="42.3" height="10"><text x="0" y="5.9" font-size="5.7" fill="#d6d6d6"  textLength="40.3" lengthAdjust="spacingAndGlyphs" font-family="Liberation Sans, sans-serif">EnhanceDetails</text></svg>
<div style="left:10px;top:331px;width:38px;height:9px;background:#323232;border-radius:1.5px;"></div>
<svg style="left:11.3px;top:331.96500000000003px" width="31.7" height="10"><text x="0" y="5.9" font-size="5.7" fill="#d6d6d6"  textLength="29.7" lengthAdjust="spacingAndGlyphs" font-family="Liberation Sans, sans-serif">SwitchColor</text></svg>
<div style="left:10px;top:341.2px;width:38px;height:7.800000000000011px;background:#f39a2b;border-radius:1.5px;"></div>
<svg style="left:11.5px;top:341.56500000000005px" width="24.0" height="10"><text x="0" y="5.9" font-size="5.7" fill="#3a2408"  textLength="22.0" lengthAdjust="spacingAndGlyphs" font-family="Liberation Sans, sans-serif">Alternate</text></svg>
<div style="left:51.2px;top:341.2px;width:36.599999999999994px;height:7.800000000000011px;background:#3e3e3e;border-radius:1.5px;"></div>
<svg style="left:52.3px;top:341.56500000000005px" width="30.700000000000003" height="10"><text x="0" y="5.9" font-size="5.7" fill="#d6d6d6"  textLength="28.700000000000003" lengthAdjust="spacingAndGlyphs" font-family="Liberation Sans, sans-serif">Group Front</text></svg>
<div style="left:10px;top:351px;width:38px;height:8.399999999999977px;background:#323232;border-radius:1.5px;"></div>
<svg style="left:11.3px;top:351.665px" width="38.2" height="10"><text x="0" y="5.9" font-size="5.7" fill="#d6d6d6"  textLength="36.2" lengthAdjust="spacingAndGlyphs" font-family="Liberation Sans, sans-serif">BackfaceMask</text></svg>
<div style="left:51.2px;top:351.2px;width:36.599999999999994px;height:7.800000000000011px;background:#3e3e3e;border-radius:1.5px;"></div>
<svg style="left:52.3px;top:351.56500000000005px" width="32.7" height="10"><text x="0" y="5.9" font-size="5.7" fill="#d6d6d6"  textLength="30.700000000000003" lengthAdjust="spacingAndGlyphs" font-family="Liberation Sans, sans-serif">Auto Groups</text></svg>
<div style="left:10px;top:361px;width:38px;height:8.399999999999977px;background:#323232;border-radius:1.5px;"></div>
<svg style="left:11.3px;top:361.665px" width="19.7" height="10"><text x="0" y="5.9" font-size="5.7" fill="#d6d6d6"  textLength="17.7" lengthAdjust="spacingAndGlyphs" font-family="Liberation Sans, sans-serif">Double</text></svg>
<div style="left:51.2px;top:361.3px;width:36.599999999999994px;height:7.699999999999989px;background:#3e3e3e;border-radius:1.5px;"></div>
<svg style="left:52.3px;top:361.615px" width="32.7" height="10"><text x="0" y="5.9" font-size="5.7" fill="#d6d6d6"  textLength="30.700000000000003" lengthAdjust="spacingAndGlyphs" font-family="Liberation Sans, sans-serif">Groups Split</text></svg>
<div style="left:10px;top:371px;width:38px;height:8.399999999999977px;background:#343434;border-radius:1.5px;"></div>
<svg style="left:11.3px;top:371.665px" width="29.7" height="10"><text x="0" y="5.9" font-size="5.7" fill="#636363"  textLength="27.7" lengthAdjust="spacingAndGlyphs" font-family="Liberation Sans, sans-serif">Spin Edition</text></svg>
<div style="left:51.2px;top:371.4px;width:36.599999999999994px;height:7.600000000000023px;background:#3e3e3e;border-radius:1.5px;"></div>
<svg style="left:52.3px;top:371.665px" width="33.7" height="10"><text x="0" y="5.9" font-size="5.7" fill="#d6d6d6"  textLength="31.700000000000003" lengthAdjust="spacingAndGlyphs" font-family="Liberation Sans, sans-serif">GroupVisible</text></svg>
<div style="left:10px;top:381px;width:38px;height:20px;background:#323232;border-radius:1.5px;"></div>
<svg style="left:11.3px;top:387.46500000000003px" width="28.2" height="10"><text x="0" y="5.9" font-size="5.7" fill="#d6d6d6"  textLength="26.2" lengthAdjust="spacingAndGlyphs" font-family="Liberation Sans, sans-serif">DynaMesh</text></svg>
<div style="left:51.2px;top:382.4px;width:36.599999999999994px;height:7.600000000000023px;background:#3e3e3e;border-radius:1.5px;"></div>
<svg style="left:52.3px;top:382.665px" width="30.700000000000003" height="10"><text x="0" y="5.9" font-size="5.7" fill="#d6d6d6"  textLength="28.700000000000003" lengthAdjust="spacingAndGlyphs" font-family="Liberation Sans, sans-serif">Close Holes</text></svg>
<div style="left:84.2px;top:382.8px;width:2.6px;height:2.6px;border-radius:50%;background:#f0f0f0"></div>
<div style="left:51.2px;top:393.8px;width:36.599999999999994px;height:7.399999999999977px;background:#3e3e3e;border-radius:1.5px;"></div>
<svg style="left:52.3px;top:393.96500000000003px" width="28.700000000000003" height="10"><text x="0" y="5.9" font-size="5.7" fill="#d6d6d6"  textLength="26.700000000000003" lengthAdjust="spacingAndGlyphs" font-family="Liberation Sans, sans-serif">Del Hidden</text></svg>
<svg style="left:11.3px;top:401.665px" width="40.7" height="10"><text x="0" y="5.9" font-size="5.7" fill="#d6d6d6"  textLength="38.7" lengthAdjust="spacingAndGlyphs" font-family="Liberation Sans, sans-serif">Resolution 128</text></svg>
<div style="left:10px;top:408.8px;width:60px;height:1px;background:#585858;"></div>
<div style="left:18.5px;top:408.0px;width:7px;height:2.6px;background:#f39a2b;border-radius:1.3px;"></div>
<div style="left:64.3px;top:403.8px;width:2.6px;height:2.6px;border-radius:50%;background:#e8e8e8"></div>
<div style="left:70.8px;top:402.5px;width:17.200000000000003px;height:7.5px;background:#f39a2b;border-radius:1.5px;"></div>
<svg style="left:72.5px;top:402.71500000000003px" width="17.5" height="10"><text x="0" y="5.9" font-size="5.7" fill="#3a2408"  textLength="15.5" lengthAdjust="spacingAndGlyphs" font-family="Liberation Sans, sans-serif">Project</text></svg>
<svg style="left:11.3px;top:411.865px" width="47.2" height="10"><text x="0" y="5.9" font-size="5.7" fill="#d6d6d6"  textLength="45.2" lengthAdjust="spacingAndGlyphs" font-family="Liberation Sans, sans-serif">SubProjection 0.6</text></svg>
<div style="left:10px;top:419.0px;width:78px;height:1px;background:#585858;"></div>
<div style="left:52.5px;top:418.2px;width:7px;height:2.6px;background:#f39a2b;border-radius:1.3px;"></div>
<div style="left:10px;top:423px;width:57.5px;height:7.199999999999989px;background:#3e3e3e;border-radius:1.5px;"></div>
<svg style="left:11.5px;top:423.06500000000005px" width="38.0" height="10"><text x="0" y="5.9" font-size="5.7" fill="#d6d6d6"  textLength="36.0" lengthAdjust="spacingAndGlyphs" font-family="Liberation Sans, sans-serif">Group Masked</text></svg>
<svg style="left:11.3px;top:432.46500000000003px" width="12.7" height="10"><text x="0" y="5.9" font-size="5.7" fill="#555"  textLength="10.7" lengthAdjust="spacingAndGlyphs" font-family="Liberation Sans, sans-serif">Blur</text></svg>
<div style="left:10px;top:438.8px;width:38px;height:1.4px;background:#b97424;"></div>
<div style="left:51.2px;top:433.2px;width:36.599999999999994px;height:7.800000000000011px;background:#343434;border-radius:1.5px;"></div>
<svg style="left:52.3px;top:433.56500000000005px" width="25.700000000000003" height="10"><text x="0" y="5.9" font-size="5.7" fill="#636363"  textLength="23.700000000000003" lengthAdjust="spacingAndGlyphs" font-family="Liberation Sans, sans-serif">Del Lower</text></svg>
<div style="left:10px;top:443.8px;width:57.5px;height:17.69999999999999px;background:#3e3e3e;border-radius:1.5px;"></div>
<svg style="left:11.3px;top:449.115px" width="30.2" height="10"><text x="0" y="5.9" font-size="5.7" fill="#d6d6d6"  textLength="28.2" lengthAdjust="spacingAndGlyphs" font-family="Liberation Sans, sans-serif">ZRemesher</text></svg>
<div style="left:51.2px;top:443.8px;width:36.599999999999994px;height:7.800000000000011px;background:#343434;border-radius:1.5px;"></div>
<svg style="left:52.3px;top:444.1650000000001px" width="26.700000000000003" height="10"><text x="0" y="5.9" font-size="5.7" fill="#636363"  textLength="24.700000000000003" lengthAdjust="spacingAndGlyphs" font-family="Liberation Sans, sans-serif">Del Higher</text></svg>
<div style="left:51.2px;top:454px;width:36.599999999999994px;height:7.800000000000011px;background:#3e3e3e;border-radius:1.5px;"></div>
<svg style="left:52.3px;top:454.365px" width="31.700000000000003" height="10"><text x="0" y="5.9" font-size="5.7" fill="#d6d6d6"  textLength="29.700000000000003" lengthAdjust="spacingAndGlyphs" font-family="Liberation Sans, sans-serif">KeepGroups</text></svg>
<svg style="left:11.3px;top:462.46500000000003px" width="64.7" height="10"><text x="0" y="5.9" font-size="5.7" fill="#d6d6d6"  textLength="62.7" lengthAdjust="spacingAndGlyphs" font-family="Liberation Sans, sans-serif">Target Polygons Count 5</text></svg>
<div style="left:10px;top:469.6px;width:78px;height:1px;background:#585858;"></div>
<div style="left:25.5px;top:468.8px;width:7px;height:2.6px;background:#f39a2b;border-radius:1.3px;"></div>
<div style="left:10px;top:473.8px;width:78px;height:7.399999999999977px;background:#3e3e3e;border-radius:1.5px;"></div>
<svg style="left:11.5px;top:473.96500000000003px" width="46.5" height="10"><text x="0" y="5.9" font-size="5.7" fill="#d6d6d6"  textLength="44.5" lengthAdjust="spacingAndGlyphs" font-family="Liberation Sans, sans-serif">Mask By Intensity</text></svg>
<svg style="left:11.3px;top:484.06500000000005px" width="23.7" height="10"><text x="0" y="5.9" font-size="5.7" fill="#d6d6d6"  textLength="21.7" lengthAdjust="spacingAndGlyphs" font-family="Liberation Sans, sans-serif">Dynamic</text></svg>
<div style="left:55px;top:484.2px;width:37.5px;height:7.199999999999989px;background:#3e3e3e;border-radius:1.5px;"></div>
<svg style="left:57px;top:484.265px" width="10.5" height="10"><text x="0" y="5.9" font-size="5.7" fill="#d6d6d6"  textLength="8.5" lengthAdjust="spacingAndGlyphs" font-family="Liberation Sans, sans-serif">Flip</text></svg>
<svg style="left:12.8px;top:494.06500000000005px" width="19.7" height="10"><text x="0" y="5.9" font-size="5.7" fill="#d6d6d6"  textLength="17.7" lengthAdjust="spacingAndGlyphs" font-family="Liberation Sans, sans-serif">Once Z</text></svg>
<div style="left:52px;top:494px;width:38px;height:7.399999999999977px;background:#f39a2b;border-radius:1.5px;"></div>
<svg style="left:53.8px;top:494.165px" width="17.200000000000003" height="10"><text x="0" y="5.9" font-size="5.7" fill="#3a2408"  textLength="15.200000000000003" lengthAdjust="spacingAndGlyphs" font-family="Liberation Sans, sans-serif">Cont Z</text></svg>
<div style="left:12px;top:504.2px;width:77.5px;height:7.199999999999989px;background:#3e3e3e;border-radius:1.5px;"></div>
<svg style="left:13px;top:504.265px" width="58.5" height="10"><text x="0" y="5.9" font-size="5.7" fill="#d6d6d6"  textLength="56.5" lengthAdjust="spacingAndGlyphs" font-family="Liberation Sans, sans-serif">Split Unmasked Points</text></svg>
<div style="left:12px;top:514.2px;width:77.5px;height:7.199999999999932px;background:#3e3e3e;border-radius:1.5px;"></div>
<svg style="left:13px;top:514.265px" width="51.5" height="10"><text x="0" y="5.9" font-size="5.7" fill="#d6d6d6"  textLength="49.5" lengthAdjust="spacingAndGlyphs" font-family="Liberation Sans, sans-serif">Split Masked Points</text></svg>
<div style="left:50px;top:556px;width:39px;height:8px;background:#323232;border-radius:1.5px;"></div>
<svg style="left:52px;top:556.465px" width="31.5" height="10"><text x="0" y="5.9" font-size="5.7" fill="#d6d6d6"  textLength="29.5" lengthAdjust="spacingAndGlyphs" font-family="Liberation Sans, sans-serif">Depth Mask</text></svg>
<svg style="left:51.5px;top:565.465px" width="32.0" height="10"><text x="0" y="5.9" font-size="5.7" fill="#5c5c5c"  textLength="30.0" lengthAdjust="spacingAndGlyphs" font-family="Liberation Sans, sans-serif">OuterDepth</text></svg>
<div style="left:50px;top:572.6px;width:39px;height:1px;background:#3c3c3c;"></div>
<div style="left:81.5px;top:571.8px;width:7px;height:2.6px;background:#8f5f25;border-radius:1.3px;"></div>
<svg style="left:99.5px;top:505.06500000000005px" width="49.5" height="10"><text x="0" y="5.9" font-size="5.7" fill="#d6d6d6"  textLength="47.5" lengthAdjust="spacingAndGlyphs" font-family="Liberation Sans, sans-serif">X Position 0.16385</text></svg>
<div style="left:98px;top:512.2px;width:78px;height:1px;background:#585858;"></div>
<div style="left:144.0px;top:511.40000000000003px;width:7px;height:2.6px;background:#f39a2b;border-radius:1.3px;"></div>
<svg style="left:99.5px;top:516.465px" width="45.5" height="10"><text x="0" y="5.9" font-size="5.7" fill="#d6d6d6"  textLength="43.5" lengthAdjust="spacingAndGlyphs" font-family="Liberation Sans, sans-serif">XYZ Size 0.52288</text></svg>
<div style="left:98px;top:523.6px;width:78px;height:1px;background:#585858;"></div>
<div style="left:122.0px;top:522.8px;width:7px;height:2.6px;background:#f39a2b;border-radius:1.3px;"></div>
<div style="left:97.5px;top:527.2px;width:38.5px;height:8.399999999999977px;background:#f39a2b;border-radius:1.5px;"></div>
<svg style="left:99.5px;top:527.8650000000001px" width="15.5" height="10"><text x="0" y="5.9" font-size="5.7" fill="#3a2408"  textLength="13.5" lengthAdjust="spacingAndGlyphs" font-family="Liberation Sans, sans-serif">Quad</text></svg>
<svg style="left:99.5px;top:545.065px" width="16.0" height="10"><text x="0" y="5.9" font-size="5.7" fill="#555"  textLength="14.0" lengthAdjust="spacingAndGlyphs" font-family="Liberation Sans, sans-serif">Cust2</text></svg>
<svg style="left:124px;top:543.865px" width="39" height="10"><text x="0" y="5.9" font-size="5.7" fill="#d6d6d6"  textLength="37" lengthAdjust="spacingAndGlyphs" font-family="Liberation Sans, sans-serif">boutyou mm 0</text></svg>
<div style="left:122px;top:551.0px;width:54px;height:1px;background:#585858;"></div>
<div style="left:145.8px;top:550.1999999999999px;width:7px;height:2.6px;background:#f39a2b;border-radius:1.3px;"></div>
<div style="left:98px;top:555px;width:38px;height:7.2000000000000455px;background:#343434;border-radius:1.5px;"></div>
<svg style="left:99.5px;top:555.065px" width="30.0" height="10"><text x="0" y="5.9" font-size="5.7" fill="#636363"  textLength="28.0" lengthAdjust="spacingAndGlyphs" font-family="Liberation Sans, sans-serif">Split Views</text></svg>
<svg style="left:180px;top:506.06500000000005px" width="51.5" height="10"><text x="0" y="5.9" font-size="5.7" fill="#d6d6d6"  textLength="49.5" lengthAdjust="spacingAndGlyphs" font-family="Liberation Sans, sans-serif">Y Position -2.14766</text></svg>
<div style="left:178px;top:513.2px;width:70px;height:1px;background:#585858;"></div>
<div style="left:196.5px;top:512.4px;width:7px;height:2.6px;background:#f39a2b;border-radius:1.3px;"></div>
<svg style="left:180px;top:516.465px" width="18" height="10"><text x="0" y="5.9" font-size="5.7" fill="#d6d6d6"  textLength="16" lengthAdjust="spacingAndGlyphs" font-family="Liberation Sans, sans-serif">Inflate</text></svg>
<div style="left:178px;top:523.6px;width:70px;height:1px;background:#585858;"></div>
<div style="left:214.0px;top:522.8px;width:7px;height:2.6px;background:#f39a2b;border-radius:1.3px;"></div>
<svg style="left:244px;top:516.645px" width="13.5" height="10"><text x="0" y="4.3" font-size="4.1" fill="#9a9a9a" stroke="#9a9a9a" stroke-width="0.3" textLength="11.5" lengthAdjust="spacingAndGlyphs" font-family="Liberation Sans, sans-serif">R Y Z</text></svg>
<div style="left:178px;top:527.2px;width:18px;height:8.399999999999977px;background:#f39a2b;border-radius:1.5px;"></div>
<svg style="left:180px;top:527.8650000000001px" width="16" height="10"><text x="0" y="5.9" font-size="5.7" fill="#3a2408"  textLength="14" lengthAdjust="spacingAndGlyphs" font-family="Liberation Sans, sans-serif">Front</text></svg>
<div style="left:197.5px;top:527.2px;width:59.5px;height:8.399999999999977px;background:#323232;border-radius:1.5px;"></div>
<svg style="left:200px;top:527.865px" width="14" height="10"><text x="0" y="5.9" font-size="5.7" fill="#d6d6d6"  textLength="12" lengthAdjust="spacingAndGlyphs" font-family="Liberation Sans, sans-serif">Back</text></svg>
<svg style="left:220px;top:527.865px" width="15" height="10"><text x="0" y="5.9" font-size="5.7" fill="#d6d6d6"  textLength="13" lengthAdjust="spacingAndGlyphs" font-family="Liberation Sans, sans-serif">Right</text></svg>
<svg style="left:240.5px;top:527.865px" width="11.0" height="10"><text x="0" y="5.9" font-size="5.7" fill="#d6d6d6"  textLength="9.0" lengthAdjust="spacingAndGlyphs" font-family="Liberation Sans, sans-serif">Left</text></svg>
<div style="left:178px;top:538px;width:57.5px;height:7.399999999999977px;background:#3e3e3e;border-radius:1.5px;"></div>
<svg style="left:180px;top:538.1650000000001px" width="39.5" height="10"><text x="0" y="5.9" font-size="5.7" fill="#d6d6d6"  textLength="37.5" lengthAdjust="spacingAndGlyphs" font-family="Liberation Sans, sans-serif">Mask By Depth</text></svg>
<svg style="left:240.5px;top:536.965px" width="19.5" height="10"><text x="0" y="5.9" font-size="5.7" fill="#d6d6d6"  textLength="17.5" lengthAdjust="spacingAndGlyphs" font-family="Liberation Sans, sans-serif">Blur D</text></svg>
<div style="left:237.5px;top:544.1px;width:20.5px;height:1px;background:#585858;"></div>
<div style="left:239.0px;top:543.3px;width:7px;height:2.6px;background:#f39a2b;border-radius:1.3px;"></div>
<div style="left:178px;top:548.4px;width:38.30000000000001px;height:7.2000000000000455px;background:#3e3e3e;border-radius:1.5px;"></div>
<svg style="left:180px;top:548.465px" width="34" height="10"><text x="0" y="5.9" font-size="5.7" fill="#d6d6d6"  textLength="32" lengthAdjust="spacingAndGlyphs" font-family="Liberation Sans, sans-serif">MultiAppend</text></svg>
<svg style="left:249.5px;top:506.06500000000005px" width="52.0" height="10"><text x="0" y="5.9" font-size="5.7" fill="#d6d6d6"  textLength="50.0" lengthAdjust="spacingAndGlyphs" font-family="Liberation Sans, sans-serif">Z Position -3.06144</text></svg>
<div style="left:248px;top:513.2px;width:74px;height:1px;background:#585858;"></div>
<div style="left:264.8px;top:512.4px;width:7px;height:2.6px;background:#f39a2b;border-radius:1.3px;"></div>
<svg style="left:330px;top:505.76500000000004px" width="49.5" height="10"><text x="0" y="5.9" font-size="5.7" fill="#d6d6d6"  textLength="47.5" lengthAdjust="spacingAndGlyphs" font-family="Liberation Sans, sans-serif">Activate Symmetry</text></svg>
<div style="left:259.2px;top:521px;width:38.3px;height:39.2px;background:linear-gradient(#d98828 0,#d98828 50%,#b5701f 50%,#b5701f 100%);border-radius:1.5px;"></div>
<svg style="left:259.2px;top:521px" width="39" height="40"><circle cx="19.2" cy="19.6" r="17.6" fill="none" stroke="#f4ead8" stroke-width="1"/><circle cx="19.2" cy="19.8" r="1.5" fill="#0a0a0a"/></svg>
<div style="left:300px;top:522.2px;width:79px;height:18.399999999999977px;background:#3e3e3e;border-radius:1.5px;"></div>
<svg style="left:301.5px;top:527.8650000000001px" width="49.0" height="10"><text x="0" y="5.9" font-size="5.7" fill="#d6d6d6"  textLength="47.0" lengthAdjust="spacingAndGlyphs" font-family="Liberation Sans, sans-serif">Set IMM Draw Size</text></svg>
<svg style="left:301.5px;top:547.465px" width="65.5" height="10"><text x="0" y="5.9" font-size="5.7" fill="#d6d6d6"  textLength="63.5" lengthAdjust="spacingAndGlyphs" font-family="Liberation Sans, sans-serif">Desired IMM Size (mm) 5</text></svg>
<div style="left:300px;top:554.6px;width:78px;height:1px;background:#585858;"></div>
<div style="left:302.8px;top:553.8px;width:7px;height:2.6px;background:#f39a2b;border-radius:1.3px;"></div>
<div style="left:381.2px;top:526px;width:38.10000000000002px;height:27.600000000000023px;background:#3e3e3e;border-radius:1.5px;"></div>
<svg style="left:382.5px;top:536.265px" width="38.5" height="10"><text x="0" y="5.9" font-size="5.7" fill="#d6d6d6"  textLength="36.5" lengthAdjust="spacingAndGlyphs" font-family="Liberation Sans, sans-serif">From Thicknes</text></svg>
<svg style="left:416px;top:505.865px" width="10.5" height="10"><text x="0" y="5.9" font-size="5.7" fill="#4a4a4a"  textLength="8.5" lengthAdjust="spacingAndGlyphs" font-family="Liberation Sans, sans-serif">&gt;X&lt;</text></svg>
<svg style="left:435.5px;top:505.865px" width="10.5" height="10"><text x="0" y="5.9" font-size="5.7" fill="#4a4a4a"  textLength="8.5" lengthAdjust="spacingAndGlyphs" font-family="Liberation Sans, sans-serif">&gt;Y&lt;</text></svg>
<svg style="left:456px;top:505.865px" width="10.5" height="10"><text x="0" y="5.9" font-size="5.7" fill="#4a4a4a"  textLength="8.5" lengthAdjust="spacingAndGlyphs" font-family="Liberation Sans, sans-serif">&gt;Z&lt;</text></svg>
<div style="left:470px;top:505.2px;width:19px;height:8.800000000000011px;background:#c17a27;border-radius:1.5px;"></div>
<svg style="left:475px;top:506.06500000000005px" width="11" height="10"><text x="0" y="5.9" font-size="5.7" fill="#3a2408"  textLength="9" lengthAdjust="spacingAndGlyphs" font-family="Liberation Sans, sans-serif">&gt;M&lt;</text></svg>
<svg style="left:411.5px;top:515.465px" width="31.5" height="10"><text x="0" y="5.9" font-size="5.7" fill="#5c5c5c"  textLength="29.5" lengthAdjust="spacingAndGlyphs" font-family="Liberation Sans, sans-serif">RadialCount</text></svg>
<div style="left:410px;top:522.6px;width:32px;height:1px;background:#3c3c3c;"></div>
<div style="left:412.0px;top:521.8px;width:7px;height:2.6px;background:#8f5f25;border-radius:1.3px;"></div>
<svg style="left:472.5px;top:516.965px" width="8.5" height="10"><text x="0" y="5.9" font-size="5.7" fill="#555"  textLength="6.5" lengthAdjust="spacingAndGlyphs" font-family="Liberation Sans, sans-serif">(R)</text></svg>
<svg style="left:423px;top:525.465px" width="29" height="10"><text x="0" y="5.9" font-size="5.7" fill="#d6d6d6"  textLength="27" lengthAdjust="spacingAndGlyphs" font-family="Liberation Sans, sans-serif">Quality 16</text></svg>
<div style="left:422px;top:532.6px;width:38px;height:1px;background:#585858;"></div>
<div style="left:428.5px;top:531.8px;width:7px;height:2.6px;background:#f39a2b;border-radius:1.3px;"></div>
<svg style="left:423px;top:535.6650000000001px" width="39" height="10"><text x="0" y="5.9" font-size="5.7" fill="#d6d6d6"  textLength="37" lengthAdjust="spacingAndGlyphs" font-family="Liberation Sans, sans-serif">Min Thickness</text></svg>
<div style="left:422px;top:542.8000000000001px;width:38px;height:1px;background:#585858;"></div>
<div style="left:433.5px;top:542.0px;width:7px;height:2.6px;background:#f39a2b;border-radius:1.3px;"></div>
<svg style="left:423px;top:545.865px" width="39" height="10"><text x="0" y="5.9" font-size="5.7" fill="#d6d6d6"  textLength="37" lengthAdjust="spacingAndGlyphs" font-family="Liberation Sans, sans-serif">Max Thickness</text></svg>
<div style="left:422px;top:553.0px;width:38px;height:1px;background:#585858;"></div>
<div style="left:437.5px;top:552.1999999999999px;width:7px;height:2.6px;background:#f39a2b;border-radius:1.3px;"></div>
<div style="left:454.5px;top:571px;width:68px;height:2.4px;background:#4e4e4e;border-radius:1px;"></div>
<div style="left:482px;top:569.5px;width:14px;height:5px;background:#2a2a2a;"></div>
<svg style="left:483px;top:569.5px" width="13" height="6"><path d="M0.5 5 L3 0.8 L5.5 5Z" fill="#ddd"/><path d="M6.8 1 L11.8 1 L9.3 5.2Z" fill="#ddd"/></svg>
<div style="left:511px;top:506px;width:78.5px;height:7.600000000000023px;background:#3e3e3e;border-radius:1.5px;"></div>
<svg style="left:513px;top:506.26500000000004px" width="50" height="10"><text x="0" y="5.9" font-size="5.7" fill="#d6d6d6"  textLength="48" lengthAdjust="spacingAndGlyphs" font-family="Liberation Sans, sans-serif">Mirror And Weld</text></svg>
<span style="left:576px;top:506.65000000000003px;color:#e0e0e0;font-size:5px;">▪</span>
<svg style="left:580.5px;top:505.6700000000001px" width="9.5" height="10"><text x="0" y="4.8" font-size="4.6" fill="#666"  textLength="7.5" lengthAdjust="spacingAndGlyphs" font-family="Liberation Sans, sans-serif">× ×</text></svg>
<div style="left:592.5px;top:506px;width:37.5px;height:7.600000000000023px;background:#3e3e3e;border-radius:1.5px;"></div>
<svg style="left:594px;top:506.26500000000004px" width="19.5" height="10"><text x="0" y="5.9" font-size="5.7" fill="#d6d6d6"  textLength="17.5" lengthAdjust="spacingAndGlyphs" font-family="Liberation Sans, sans-serif">Mirror</text></svg>
<div style="left:511px;top:516px;width:38px;height:18px;background:#3e3e3e;border-radius:1.5px;"></div>
<svg style="left:516px;top:521.465px" width="22" height="10"><text x="0" y="5.9" font-size="5.7" fill="#d6d6d6"  textLength="20" lengthAdjust="spacingAndGlyphs" font-family="Liberation Sans, sans-serif">Unwrap</text></svg>
<div style="left:551px;top:516px;width:38.5px;height:7.600000000000023px;background:#3e3e3e;border-radius:1.5px;"></div>
<svg style="left:553px;top:516.265px" width="28" height="10"><text x="0" y="5.9" font-size="5.7" fill="#d6d6d6"  textLength="26" lengthAdjust="spacingAndGlyphs" font-family="Liberation Sans, sans-serif">Paste UVs</text></svg>
<div style="left:551px;top:526px;width:38.5px;height:8px;background:#3e3e3e;border-radius:1.5px;"></div>
<svg style="left:553px;top:526.465px" width="27" height="10"><text x="0" y="5.9" font-size="5.7" fill="#d6d6d6"  textLength="25" lengthAdjust="spacingAndGlyphs" font-family="Liberation Sans, sans-serif">Copy UVs</text></svg>
<div style="left:592.5px;top:516px;width:37.5px;height:7.600000000000023px;background:#343434;border-radius:1.5px;"></div>
<svg style="left:594px;top:516.265px" width="33" height="10"><text x="0" y="5.9" font-size="5.7" fill="#636363"  textLength="31" lengthAdjust="spacingAndGlyphs" font-family="Liberation Sans, sans-serif">CheckSeams</text></svg>
<div style="left:592.5px;top:526px;width:37.5px;height:8px;background:#343434;border-radius:1.5px;"></div>
<svg style="left:594px;top:526.465px" width="20" height="10"><text x="0" y="5.9" font-size="5.7" fill="#636363"  textLength="18" lengthAdjust="spacingAndGlyphs" font-family="Liberation Sans, sans-serif">Flatten</text></svg>
<div style="left:551px;top:536px;width:38.5px;height:8px;background:#f39a2b;border-radius:1.5px;"></div>
<svg style="left:553px;top:536.465px" width="30" height="10"><text x="0" y="5.9" font-size="5.7" fill="#3a2408"  textLength="28" lengthAdjust="spacingAndGlyphs" font-family="Liberation Sans, sans-serif">Polygroups</text></svg>
<div style="left:551px;top:546px;width:38.5px;height:8px;background:#f39a2b;border-radius:1.5px;"></div>
<svg style="left:553px;top:546.465px" width="27" height="10"><text x="0" y="5.9" font-size="5.7" fill="#3a2408"  textLength="25" lengthAdjust="spacingAndGlyphs" font-family="Liberation Sans, sans-serif">Symmetry</text></svg>
<div style="left:551px;top:557px;width:38.5px;height:8px;background:#323232;border-radius:1.5px;"></div>
<svg style="left:553px;top:557.465px" width="24" height="10"><text x="0" y="5.9" font-size="5.7" fill="#d6d6d6"  textLength="22" lengthAdjust="spacingAndGlyphs" font-family="Liberation Sans, sans-serif">Adaptive</text></svg>
<div style="left:512px;top:536px;width:17px;height:17.5px;background:#3b3b3b;border-radius:1.5px;"></div>
<svg style="left:512px;top:536px" width="17" height="17.5"><rect x="8.5" y="2" width="6.5" height="6.5" fill="#8c8c8c" stroke="#c4c4c4" stroke-width=".6"/><circle cx="6.3" cy="5.8" r="3.2" fill="none" stroke="#e2e2e2" stroke-width="1.1"/><path d="M4.2 8.2 L1.6 11.4" stroke="#e2e2e2" stroke-width="1.4"/></svg>
<svg style="left:514px;top:546.985px" width="14.5" height="10"><text x="0" y="5.5" font-size="5.3" fill="#c4c4c4"  textLength="12.5" lengthAdjust="spacingAndGlyphs" font-family="Liberation Sans, sans-serif">Zoom</text></svg>
<div style="left:532px;top:536px;width:17px;height:17.5px;background:#3b3b3b;border-radius:1.5px;"></div>
<svg style="left:532px;top:536px" width="17" height="17.5"><rect x="8.5" y="2" width="6.5" height="6.5" fill="#8c8c8c" stroke="#c4c4c4" stroke-width=".6"/><circle cx="6.3" cy="5.8" r="3.2" fill="none" stroke="#e2e2e2" stroke-width="1.1"/><path d="M4.2 8.2 L1.6 11.4" stroke="#e2e2e2" stroke-width="1.4"/></svg>
<svg style="left:533.5px;top:546.985px" width="16.5" height="10"><text x="0" y="5.5" font-size="5.3" fill="#c4c4c4"  textLength="14.5" lengthAdjust="spacingAndGlyphs" font-family="Liberation Sans, sans-serif">Actual</text></svg>
<svg style="left:594px;top:548px" width="16" height="12"><path d="M2 10 L9 3 L12 1 L11 5 L5 10Z" fill="#484848"/></svg>
<svg style="left:595px;top:561.2850000000001px" width="14.5" height="10"><text x="0" y="5.5" font-size="5.3" fill="#4a4a4a"  textLength="12.5" lengthAdjust="spacingAndGlyphs" font-family="Liberation Sans, sans-serif">Ghost</text></svg>
<svg style="left:612.5px;top:547px" width="18" height="13"><rect x="4.5" y="1" width="12" height="9" fill="none" stroke="#aaa" stroke-width=".7"/><circle cx="8" cy="7" r="4" fill="#bdbdbd"/><circle cx="6.8" cy="5.8" r="1.6" fill="#efefef"/></svg>
<svg style="left:614px;top:561.085px" width="17" height="10"><text x="0" y="5.5" font-size="5.3" fill="#c4c4c4"  textLength="15" lengthAdjust="spacingAndGlyphs" font-family="Liberation Sans, sans-serif">Transp</text></svg>
<div style="left:632px;top:506px;width:40px;height:7.600000000000023px;background:#343434;border-radius:1.5px;"></div>
<svg style="left:634px;top:506.26500000000004px" width="39" height="10"><text x="0" y="5.9" font-size="5.7" fill="#636363"  textLength="37" lengthAdjust="spacingAndGlyphs" font-family="Liberation Sans, sans-serif">Project History</text></svg>
<div style="left:674px;top:506px;width:78px;height:7.600000000000023px;background:#3e3e3e;border-radius:1.5px;"></div>
<svg style="left:681px;top:506.26500000000004px" width="39.5" height="10"><text x="0" y="5.9" font-size="5.7" fill="#d6d6d6"  textLength="37.5" lengthAdjust="spacingAndGlyphs" font-family="Liberation Sans, sans-serif">Work On Clone</text></svg>
<div style="left:754.5px;top:506px;width:78.5px;height:7.600000000000023px;background:#3e3e3e;border-radius:1.5px;"></div>
<svg style="left:756px;top:506.26500000000004px" width="39.5" height="10"><text x="0" y="5.9" font-size="5.7" fill="#d6d6d6"  textLength="37.5" lengthAdjust="spacingAndGlyphs" font-family="Liberation Sans, sans-serif">Pre-process All</text></svg>
<div style="left:835.5px;top:506px;width:44.5px;height:7.600000000000023px;background:#3e3e3e;border-radius:1.5px;"></div>
<svg style="left:836.5px;top:506.26500000000004px" width="45.5" height="10"><text x="0" y="5.9" font-size="5.7" fill="#d6d6d6"  textLength="43.5" lengthAdjust="spacingAndGlyphs" font-family="Liberation Sans, sans-serif">Pre-process Curr</text></svg>
<div style="left:632px;top:516px;width:40px;height:7.600000000000023px;background:#343434;border-radius:1.5px;"></div>
<svg style="left:634px;top:516.265px" width="27" height="10"><text x="0" y="5.9" font-size="5.7" fill="#636363"  textLength="25" lengthAdjust="spacingAndGlyphs" font-family="Liberation Sans, sans-serif">UnFlatten</text></svg>
<div style="left:674px;top:516px;width:37.299999999999955px;height:7.600000000000023px;background:#3e3e3e;border-radius:1.5px;"></div>
<svg style="left:675.5px;top:516.265px" width="17.5" height="10"><text x="0" y="5.9" font-size="5.7" fill="#d6d6d6"  textLength="15.5" lengthAdjust="spacingAndGlyphs" font-family="Liberation Sans, sans-serif">Export</text></svg>
<div style="left:714px;top:516px;width:38px;height:7.600000000000023px;background:#3e3e3e;border-radius:1.5px;"></div>
<svg style="left:715.5px;top:516.265px" width="27.0" height="10"><text x="0" y="5.9" font-size="5.7" fill="#d6d6d6"  textLength="25.0" lengthAdjust="spacingAndGlyphs" font-family="Liberation Sans, sans-serif">On Visible</text></svg>
<div style="left:754.5px;top:516px;width:78.5px;height:7.600000000000023px;background:#3e3e3e;border-radius:1.5px;"></div>
<svg style="left:756px;top:516.265px" width="34" height="10"><text x="0" y="5.9" font-size="5.7" fill="#d6d6d6"  textLength="32" lengthAdjust="spacingAndGlyphs" font-family="Liberation Sans, sans-serif">Decimate All</text></svg>
<div style="left:835.5px;top:516px;width:44.5px;height:7.600000000000023px;background:#3e3e3e;border-radius:1.5px;"></div>
<svg style="left:836.5px;top:516.265px" width="45.5" height="10"><text x="0" y="5.9" font-size="5.7" fill="#d6d6d6"  textLength="43.5" lengthAdjust="spacingAndGlyphs" font-family="Liberation Sans, sans-serif">Decimate Curren</text></svg>
<div style="left:632px;top:526px;width:79.29999999999995px;height:8px;background:#f39a2b;border-radius:1.5px;"></div>
<svg style="left:634px;top:526.465px" width="60" height="10"><text x="0" y="5.9" font-size="5.7" fill="#3a2408"  textLength="58" lengthAdjust="spacingAndGlyphs" font-family="Liberation Sans, sans-serif">Auto Mask Mesh Insert</text></svg>
<div style="left:714px;top:528.6px;width:38px;height:28.0px;background:#3e3e3e;border-radius:1.5px;"></div>
<svg style="left:715.5px;top:539.065px" width="33.5" height="10"><text x="0" y="5.9" font-size="5.7" fill="#d6d6d6"  textLength="31.5" lengthAdjust="spacingAndGlyphs" font-family="Liberation Sans, sans-serif">Frame Mesh</text></svg>
<svg style="left:756px;top:525.465px" width="51" height="10"><text x="0" y="5.9" font-size="5.7" fill="#d6d6d6"  textLength="49" lengthAdjust="spacingAndGlyphs" font-family="Liberation Sans, sans-serif">% of decimation 20</text></svg>
<div style="left:754.5px;top:532.6px;width:78.5px;height:1px;background:#585858;"></div>
<div style="left:768.0px;top:531.8px;width:7px;height:2.6px;background:#f39a2b;border-radius:1.3px;"></div>
<div style="left:835.5px;top:526px;width:37.5px;height:8px;background:#3e3e3e;border-radius:1.5px;"></div>
<svg style="left:837px;top:526.465px" width="22.5" height="10"><text x="0" y="5.9" font-size="5.7" fill="#d6d6d6"  textLength="20.5" lengthAdjust="spacingAndGlyphs" font-family="Liberation Sans, sans-serif">StoreMT</text></svg>
<svg style="left:634px;top:535.6650000000001px" width="58" height="10"><text x="0" y="5.9" font-size="5.7" fill="#d6d6d6"  textLength="56" lengthAdjust="spacingAndGlyphs" font-family="Liberation Sans, sans-serif">Mask By Polygroups 0</text></svg>
<div style="left:632px;top:542.8000000000001px;width:79px;height:1px;background:#585858;"></div>
<div style="left:633.0px;top:542.0px;width:7px;height:2.6px;background:#f39a2b;border-radius:1.3px;"></div>
<div style="left:754.2px;top:536px;width:38.299999999999955px;height:8px;background:#f39a2b;border-radius:1.5px;"></div>
<svg style="left:756px;top:536.465px" width="30" height="10"><text x="0" y="5.9" font-size="5.7" fill="#3a2408"  textLength="28" lengthAdjust="spacingAndGlyphs" font-family="Liberation Sans, sans-serif">Polygroups</text></svg>
<div style="left:795px;top:536px;width:38px;height:8px;background:#f39a2b;border-radius:1.5px;"></div>
<svg style="left:796.5px;top:536.465px" width="38.5" height="10"><text x="0" y="5.9" font-size="5.7" fill="#3a2408"  textLength="36.5" lengthAdjust="spacingAndGlyphs" font-family="Liberation Sans, sans-serif">Creased edges</text></svg>
<div style="left:754.2px;top:546px;width:38.299999999999955px;height:8px;background:#f39a2b;border-radius:1.5px;"></div>
<svg style="left:756px;top:546.465px" width="19.5" height="10"><text x="0" y="5.9" font-size="5.7" fill="#3a2408"  textLength="17.5" lengthAdjust="spacingAndGlyphs" font-family="Liberation Sans, sans-serif">Border</text></svg>
<svg style="left:797px;top:546.5px;overflow:visible" width="16" height="12"><g transform="rotate(-22 5 7)"><rect x="1.5" y="4" width="6" height="6" fill="#6a6a6a" stroke="#9a9a9a" stroke-width=".7"/></g><rect x="6" y="0.8" width="6.6" height="6.6" fill="#222" stroke="#e6e6e6" stroke-width=".9"/><text x="9.3" y="6.3" font-size="5.2" font-weight="bold" text-anchor="middle" fill="#f2f2f2" font-family="Liberation Sans, sans-serif">R</text></svg>
<svg style="left:796.5px;top:556.8850000000001px" width="16.5" height="10"><text x="0" y="5.5" font-size="5.3" fill="#c4c4c4"  textLength="14.5" lengthAdjust="spacingAndGlyphs" font-family="Liberation Sans, sans-serif">Rotate</text></svg>
<svg style="left:818px;top:545.465px" width="16.5" height="10"><text x="0" y="5.9" font-size="5.7" fill="#5c5c5c"  textLength="14.5" lengthAdjust="spacingAndGlyphs" font-family="Liberation Sans, sans-serif">Morph</text></svg>
<div style="left:815px;top:552.6px;width:61px;height:1px;background:#3c3c3c;"></div>
<div style="left:850.5px;top:551.8px;width:7px;height:2.6px;background:#8f5f25;border-radius:1.3px;"></div>
<svg style="left:634px;top:555.065px" width="58" height="10"><text x="0" y="5.9" font-size="5.7" fill="#d6d6d6"  textLength="56" lengthAdjust="spacingAndGlyphs" font-family="Liberation Sans, sans-serif">Back Opacity 0.87916</text></svg>
<div style="left:632px;top:562.2px;width:79px;height:1px;background:#585858;"></div>
<div style="left:683.0px;top:561.4px;width:7px;height:2.6px;background:#f39a2b;border-radius:1.3px;"></div>
<div style="left:716px;top:560px;width:12px;height:6.600000000000023px;background:#3e3e3e;border-radius:1.5px;"></div>
<svg style="left:717.2px;top:559.765px" width="11.599999999999909" height="10"><text x="0" y="5.9" font-size="5.7" fill="#d6d6d6"  textLength="9.599999999999909" lengthAdjust="spacingAndGlyphs" font-family="Liberation Sans, sans-serif">20 k</text></svg>
<div style="left:731px;top:560px;width:11.700000000000045px;height:6.600000000000023px;background:#3e3e3e;border-radius:1.5px;"></div>
<svg style="left:732.2px;top:559.765px" width="11.299999999999955" height="10"><text x="0" y="5.9" font-size="5.7" fill="#d6d6d6"  textLength="9.299999999999955" lengthAdjust="spacingAndGlyphs" font-family="Liberation Sans, sans-serif">35 k</text></svg>
<div style="left:745px;top:560px;width:12px;height:6.600000000000023px;background:#3e3e3e;border-radius:1.5px;"></div>
<svg style="left:746.2px;top:559.765px" width="11.599999999999909" height="10"><text x="0" y="5.9" font-size="5.7" fill="#d6d6d6"  textLength="9.599999999999909" lengthAdjust="spacingAndGlyphs" font-family="Liberation Sans, sans-serif">75 k</text></svg>
<div style="left:759px;top:560px;width:15px;height:6.600000000000023px;background:#3e3e3e;border-radius:1.5px;"></div>
<svg style="left:760.2px;top:559.765px" width="14.599999999999909" height="10"><text x="0" y="5.9" font-size="5.7" fill="#d6d6d6"  textLength="12.599999999999909" lengthAdjust="spacingAndGlyphs" font-family="Liberation Sans, sans-serif">150 k</text></svg>
<div style="left:776px;top:560px;width:16.5px;height:6.600000000000023px;background:#3e3e3e;border-radius:1.5px;"></div>
<svg style="left:777.2px;top:559.765px" width="16.09999999999991" height="10"><text x="0" y="5.9" font-size="5.7" fill="#d6d6d6"  textLength="14.099999999999909" lengthAdjust="spacingAndGlyphs" font-family="Liberation Sans, sans-serif">250 k</text></svg>
<div style="left:884.2px;top:57.2px;width:16.399999999999977px;height:16.599999999999994px;background:#3b3b3b;border-radius:1.5px;"></div>
<svg style="left:884.2px;top:57.2px;overflow:visible" width="16.399999999999977" height="16.599999999999994"><defs><radialGradient id="bp" cx=".4" cy=".3" r=".8"><stop offset="0" stop-color="#a8a8a8"/><stop offset=".6" stop-color="#707070"/><stop offset="1" stop-color="#3b3b3b"/></radialGradient></defs><circle cx="8.2" cy="6.6" r="7" fill="url(#bp)"/></svg>
<svg style="left:888.5px;top:67.18499999999999px" width="10.0" height="10"><text x="0" y="5.5" font-size="5.3" fill="#c4c4c4"  textLength="8.0" lengthAdjust="spacingAndGlyphs" font-family="Liberation Sans, sans-serif">BPR</text></svg>
<svg style="left:886px;top:75.865px" width="15.5" height="10"><text x="0" y="5.9" font-size="5.7" fill="#d6d6d6"  textLength="13.5" lengthAdjust="spacingAndGlyphs" font-family="Liberation Sans, sans-serif">SPix 3</text></svg>
<div style="left:885px;top:83.0px;width:16px;height:1px;background:#585858;"></div>
<div style="left:888.75px;top:82.2px;width:6.5px;height:2.6px;background:#f39a2b;border-radius:1.3px;"></div>
<div style="left:884.2px;top:87.6px;width:16.399999999999977px;height:16.400000000000006px;background:#3b3b3b;border-radius:1.5px;"></div>
<svg style="left:884.2px;top:87.6px;overflow:visible" width="16.399999999999977" height="16.400000000000006"><path d="M3 6 C2.5 3 4 2.5 4.6 5 L4.8 2.6 C5.2 1.4 6.4 1.6 6.3 3 L6.5 2 C7 1 8.2 1.3 8 2.8 L8.3 3 C9 2.4 9.8 3 9.5 4.2 L9 8.5 C8.5 10.5 5.5 10.8 4.5 9.2Z" fill="#ececec"/><rect x="10.5" y="2" width="5" height="6" fill="#7a7a7a" stroke="#bbb" stroke-width=".5"/></svg>
<svg style="left:886px;top:97.38499999999999px" width="15" height="10"><text x="0" y="5.5" font-size="5.3" fill="#c4c4c4"  textLength="13" lengthAdjust="spacingAndGlyphs" font-family="Liberation Sans, sans-serif">Scroll</text></svg>
<div style="left:884.2px;top:107.5px;width:16.399999999999977px;height:17.200000000000003px;background:#3b3b3b;border-radius:1.5px;"></div>
<svg style="left:884.2px;top:107.5px;overflow:visible" width="16.399999999999977" height="17.200000000000003"><rect x="8.5" y="1.8" width="6.5" height="6.5" fill="#8c8c8c" stroke="#c4c4c4" stroke-width=".6"/><circle cx="6" cy="5.6" r="3.1" fill="none" stroke="#e2e2e2" stroke-width="1.1"/><path d="M4 8 L1.5 11" stroke="#e2e2e2" stroke-width="1.4"/></svg>
<svg style="left:886.5px;top:118.085px" width="14.0" height="10"><text x="0" y="5.5" font-size="5.3" fill="#c4c4c4"  textLength="12.0" lengthAdjust="spacingAndGlyphs" font-family="Liberation Sans, sans-serif">Zoom</text></svg>
<div style="left:884.2px;top:128px;width:16.399999999999977px;height:17px;background:#3b3b3b;border-radius:1.5px;"></div>
<svg style="left:884.2px;top:128px;overflow:visible" width="16.399999999999977" height="17"><rect x="8.5" y="1.8" width="6.5" height="6.5" fill="#8c8c8c" stroke="#c4c4c4" stroke-width=".6"/><circle cx="6" cy="5.6" r="3.1" fill="none" stroke="#e2e2e2" stroke-width="1.1"/><path d="M4 8 L1.5 11" stroke="#e2e2e2" stroke-width="1.4"/></svg>
<svg style="left:885.5px;top:138.385px" width="16.0" height="10"><text x="0" y="5.5" font-size="5.3" fill="#c4c4c4"  textLength="14.0" lengthAdjust="spacingAndGlyphs" font-family="Liberation Sans, sans-serif">Actual</text></svg>
<div style="left:884.2px;top:148px;width:16.399999999999977px;height:18px;background:#3b3b3b;border-radius:1.5px;"></div>
<svg style="left:884.2px;top:148px;overflow:visible" width="16.399999999999977" height="18"><rect x="8.5" y="1.8" width="6.5" height="6.5" fill="#8c8c8c" stroke="#c4c4c4" stroke-width=".6"/><circle cx="6" cy="5.6" r="3.1" fill="none" stroke="#e2e2e2" stroke-width="1.1"/><path d="M4 8 L1.5 11" stroke="#e2e2e2" stroke-width="1.4"/></svg>
<svg style="left:885px;top:159.385px" width="17" height="10"><text x="0" y="5.5" font-size="5.3" fill="#c4c4c4"  textLength="15" lengthAdjust="spacingAndGlyphs" font-family="Liberation Sans, sans-serif">AAHalf</text></svg>
<div style="left:883px;top:169px;width:18.200000000000045px;height:16.599999999999994px;background:#f39a2b;border-radius:1.5px;"></div>
<svg style="left:883px;top:169px;overflow:visible" width="18.200000000000045" height="16.599999999999994"><path d="M1 2 H17 M1 3.2 H17" stroke="#3a2408" stroke-width=".9"/><path d="M2 10 L5.5 4.5 H12.5 L16 10 M2 7.5 H16 M9 4.5 V10 M6.5 4.5 L5 10 M11.5 4.5 L13 10" stroke="#6b430f" stroke-width=".7" fill="none"/></svg>
<svg style="left:886.5px;top:178.98499999999999px" width="14.0" height="10"><text x="0" y="5.5" font-size="5.3" fill="#3a2408"  textLength="12.0" lengthAdjust="spacingAndGlyphs" font-family="Liberation Sans, sans-serif">Persp</text></svg>
<svg style="left:887px;top:187.38px" width="13.5" height="10"><text x="0" y="4.6000000000000005" font-size="4.4" fill="#5a5a5a" stroke="#5a5a5a" stroke-width="0.3" textLength="11.5" lengthAdjust="spacingAndGlyphs" font-family="Liberation Sans, sans-serif">X Y Z</text></svg>
<div style="left:883.5px;top:192.5px;width:17.5px;height:13px;background:#2f2f2f;border-radius:1.5px;"></div>
<svg style="left:883.5px;top:192.5px" width="18" height="8"><path d="M2 5.5 H16" stroke="#e8e8e8" stroke-width="1"/><path d="M9 1 V5" stroke="#e8e8e8" stroke-width="1.6"/></svg>
<svg style="left:886px;top:198.685px" width="14.5" height="10"><text x="0" y="5.5" font-size="5.3" fill="#c4c4c4"  textLength="12.5" lengthAdjust="spacingAndGlyphs" font-family="Liberation Sans, sans-serif">Floor</text></svg>
<svg style="left:884px;top:208.18px" width="19" height="10"><text x="0" y="4.6000000000000005" font-size="4.4" fill="#f0f0f0" stroke="#f0f0f0" stroke-width="0.3" textLength="17" lengthAdjust="spacingAndGlyphs" font-family="Liberation Sans, sans-serif">Dynamic</text></svg>
<div style="left:883.5px;top:213.5px;width:17.5px;height:12px;background:#2f2f2f;border-radius:1.5px;"></div>
<svg style="left:883.5px;top:213.5px" width="18" height="7"><path d="M1.5 3.5 H7 M11 3.5 H16.5 M9 0.5 V6.5" stroke="#e8e8e8" stroke-width="1"/><path d="M5 1.5 L7.5 3.5 L5 5.5Z M13 1.5 L10.5 3.5 L13 5.5Z" fill="#e8e8e8"/></svg>
<svg style="left:885.5px;top:218.885px" width="15.5" height="10"><text x="0" y="5.5" font-size="5.3" fill="#c4c4c4"  textLength="13.5" lengthAdjust="spacingAndGlyphs" font-family="Liberation Sans, sans-serif">L.Sym</text></svg>
<svg style="left:884px;top:230px" width="17" height="16"><rect x="6" y="5" width="7" height="6.5" rx="1" fill="#dcdcdc"/><path d="M7.5 5 V3.2 a2 2 0 0 1 4 0 V5" fill="none" stroke="#dcdcdc" stroke-width="1.1"/><ellipse cx="7" cy="12.5" rx="5.5" ry="1.8" fill="none" stroke="#bdbdbd" stroke-width=".8"/></svg>
<div style="left:883px;top:249.6px;width:18.2px;height:6.8px;background:#f39a2b;border-radius:1.5px;"></div>
<svg style="left:886.5px;top:249.71999999999997px" width="13.5" height="10"><text x="0" y="5.8" font-size="5.6" fill="#3a2408" stroke="#3a2408" stroke-width="0.3" textLength="11.5" lengthAdjust="spacingAndGlyphs" font-family="Liberation Sans, sans-serif">Gxyz</text></svg>
<svg style="left:888px;top:259px" width="12" height="18"><circle cx="3.6" cy="3.4" r="1.9" fill="none" stroke="#ccc" stroke-width=".8"/><path d="M3.6 5.3 V7" stroke="#ccc" stroke-width=".8"/><circle cx="6.4" cy="13.6" r="1.9" fill="none" stroke="#ccc" stroke-width=".8"/><path d="M6.4 15.5 V17.2" stroke="#ccc" stroke-width=".8"/></svg>
<div style="left:884.2px;top:280px;width:16.399999999999977px;height:17.600000000000023px;background:#3b3b3b;border-radius:1.5px;"></div>
<svg style="left:884.2px;top:280px;overflow:visible" width="16.399999999999977" height="17.600000000000023"><circle cx="8.2" cy="6" r="1.6" fill="#f0f0f0"/><path d="M3 2.5 h2 M3 2.5 v2 M13.4 2.5 h-2 M13.4 2.5 v2 M3 9.5 h2 M3 9.5 v-2 M13.4 9.5 h-2 M13.4 9.5 v-2" stroke="#cfcfcf" stroke-width=".9" fill="none"/></svg>
<svg style="left:886px;top:290.985px" width="15.5" height="10"><text x="0" y="5.5" font-size="5.3" fill="#c4c4c4"  textLength="13.5" lengthAdjust="spacingAndGlyphs" font-family="Liberation Sans, sans-serif">Frame</text></svg>
<div style="left:884.2px;top:300px;width:16.399999999999977px;height:17.600000000000023px;background:#3b3b3b;border-radius:1.5px;"></div>
<svg style="left:884.2px;top:300px;overflow:visible" width="16.399999999999977" height="17.600000000000023"><path d="M3 6 C2.5 3 4 2.5 4.6 5 L4.8 2.6 C5.2 1.4 6.4 1.6 6.3 3 L6.5 2 C7 1 8.2 1.3 8 2.8 L8.3 3 C9 2.4 9.8 3 9.5 4.2 L9 8.5 C8.5 10.5 5.5 10.8 4.5 9.2Z" fill="#ececec"/><circle cx="11.5" cy="4.5" r="3" fill="#8a8a8a" stroke="#ccc" stroke-width=".5"/></svg>
<svg style="left:886.5px;top:310.985px" width="14.0" height="10"><text x="0" y="5.5" font-size="5.3" fill="#c4c4c4"  textLength="12.0" lengthAdjust="spacingAndGlyphs" font-family="Liberation Sans, sans-serif">Move</text></svg>
<div style="left:884.2px;top:320px;width:16.399999999999977px;height:17.19999999999999px;background:#3b3b3b;border-radius:1.5px;"></div>
<svg style="left:884.2px;top:320px;overflow:visible" width="16.399999999999977" height="17.19999999999999"><ellipse cx="9.5" cy="4.5" rx="4.5" ry="3" fill="#8a8a8a" stroke="#ccc" stroke-width=".6"/><path d="M2 11 C2 7 6 6.5 8 8" stroke="#e2e2e2" stroke-width="1" fill="none"/></svg>
<svg style="left:884.8px;top:330.585px" width="17.40000000000009" height="10"><text x="0" y="5.5" font-size="5.3" fill="#c4c4c4"  textLength="15.400000000000091" lengthAdjust="spacingAndGlyphs" font-family="Liberation Sans, sans-serif">Zoom3D</text></svg>
<div style="left:884.2px;top:340px;width:16.399999999999977px;height:17.600000000000023px;background:#3b3b3b;border-radius:1.5px;"></div>
<svg style="left:884.2px;top:340px;overflow:visible" width="16.399999999999977" height="17.600000000000023"><circle cx="7" cy="5" r="2.8" fill="none" stroke="#e2e2e2" stroke-width="1"/><path d="M9.5 4 C13 4 14 8 11 9.5 M11 9.5 l2.2 -.3 M11 9.5 l.4 -2" stroke="#e2e2e2" stroke-width="1" fill="none"/></svg>
<svg style="left:885.5px;top:350.985px" width="16.0" height="10"><text x="0" y="5.5" font-size="5.3" fill="#c4c4c4"  textLength="14.0" lengthAdjust="spacingAndGlyphs" font-family="Liberation Sans, sans-serif">Rotate</text></svg>
<div style="left:884.2px;top:361px;width:16.399999999999977px;height:16.600000000000023px;background:#3b3b3b;border-radius:1.5px;"></div>
<svg style="left:884.2px;top:361px;overflow:visible" width="16.399999999999977" height="16.600000000000023"><path d="M1 1.5 H16 M1 2.6 H16" stroke="#d8d8d8" stroke-width=".8"/><path d="M2.5 4 H14.5 V10 H2.5Z M6.5 4 V10 M10.5 4 V10 M2.5 7 H14.5" stroke="#d0d0d0" stroke-width=".7" fill="none"/></svg>
<svg style="left:887px;top:370.985px" width="13" height="10"><text x="0" y="5.5" font-size="5.3" fill="#c4c4c4"  textLength="11" lengthAdjust="spacingAndGlyphs" font-family="Liberation Sans, sans-serif">PolyF</text></svg>
<svg style="left:884.5px;top:380.29px" width="18.0" height="10"><text x="0" y="4.4" font-size="4.2" fill="#555" stroke="#555" stroke-width="0.3" textLength="16.0" lengthAdjust="spacingAndGlyphs" font-family="Liberation Sans, sans-serif">Dynamic</text></svg>
<div style="left:884.2px;top:384.5px;width:16.399999999999977px;height:14.5px;background:#3b3b3b;border-radius:1.5px;"></div>
<svg style="left:884.2px;top:384.5px;overflow:visible" width="16.399999999999977" height="14.5"><circle cx="5" cy="4.5" r="2.6" fill="#9a9a9a"/><circle cx="11.4" cy="4.5" r="2.6" fill="#9a9a9a"/><circle cx="8.2" cy="3.6" r="3" fill="#e8e8e8"/></svg>
<svg style="left:888px;top:392.385px" width="11.5" height="10"><text x="0" y="5.5" font-size="5.3" fill="#c4c4c4"  textLength="9.5" lengthAdjust="spacingAndGlyphs" font-family="Liberation Sans, sans-serif">Solo</text></svg>
<div style="left:907.4px;top:259px;width:1.6px;height:68px;background:#3a3a3a;"></div>
<svg style="left:905.6px;top:287.4px" width="6" height="12"><path d="M5.5 0.8 L1.4 3 L5.5 5.2Z" fill="#777"/><path d="M5.5 6.6 L1.4 6.6 L3.5 10.5Z" fill="#666"/></svg>
<svg style="left:912px;top:11.5px" width="12" height="12"><path d="M2.2 2.8 L6.2 1.2 L8 2.4 L4 4.6Z" fill="#a8a8a8"/><path d="M5.6 3.4 L9.8 10.6" stroke="#8a8a8a" stroke-width="1.5"/></svg>
<svg style="left:927.5px;top:13.97px" width="15.0" height="10"><text x="0" y="6.8" font-size="6.6" fill="#e2e2e2"  textLength="13.0" lengthAdjust="spacingAndGlyphs" font-family="Liberation Sans, sans-serif">Tool</text></svg>
<svg style="left:1006px;top:13px" width="12" height="12"><path d="M3.6 3.6 A2.6 2.6 0 1 1 2.8 6.4" fill="none" stroke="#dcdcdc" stroke-width="1.1"/><path d="M1.8 1.6 L5 2.6 L2.6 4.8Z" fill="#dcdcdc"/></svg>
<div style="left:925px;top:26.8px;width:84.6px;height:165.8px;background:#313131;border-radius:3px;border:1px solid #222;box-sizing:border-box;"></div>
<div style="left:928px;top:29.5px;width:38px;height:7.5px;background:#3e3e3e;border-radius:1.5px;"></div>
<svg style="left:929.5px;top:29.715px" width="26.5" height="10"><text x="0" y="5.9" font-size="5.7" fill="#d6d6d6"  textLength="24.5" lengthAdjust="spacingAndGlyphs" font-family="Liberation Sans, sans-serif">Load Tool</text></svg>
<div style="left:968.5px;top:29.5px;width:38.5px;height:7.5px;background:#3e3e3e;border-radius:1.5px;"></div>
<svg style="left:970px;top:29.715px" width="21.5" height="10"><text x="0" y="5.9" font-size="5.7" fill="#d6d6d6"  textLength="19.5" lengthAdjust="spacingAndGlyphs" font-family="Liberation Sans, sans-serif">Save As</text></svg>
<div style="left:928px;top:40px;width:38px;height:7.5px;background:#3e3e3e;border-radius:1.5px;"></div>
<svg style="left:929.5px;top:40.215px" width="13.5" height="10"><text x="0" y="5.9" font-size="5.7" fill="#d6d6d6"  textLength="11.5" lengthAdjust="spacingAndGlyphs" font-family="Liberation Sans, sans-serif">Save</text></svg>
<div style="left:968.5px;top:40px;width:38.5px;height:7.5px;background:#3e3e3e;border-radius:1.5px;"></div>
<svg style="left:970px;top:40.215px" width="27.5" height="10"><text x="0" y="5.9" font-size="5.7" fill="#d6d6d6"  textLength="25.5" lengthAdjust="spacingAndGlyphs" font-family="Liberation Sans, sans-serif">Save Next</text></svg>
<div style="left:928px;top:50px;width:79px;height:7.5px;background:#3e3e3e;border-radius:1.5px;"></div>
<svg style="left:929.5px;top:50.215px" width="64.0" height="10"><text x="0" y="5.9" font-size="5.7" fill="#d6d6d6"  textLength="62.0" lengthAdjust="spacingAndGlyphs" font-family="Liberation Sans, sans-serif">Load Tools From Project</text></svg>
<div style="left:928px;top:60.5px;width:38px;height:7.5px;background:#3e3e3e;border-radius:1.5px;"></div>
<svg style="left:929.5px;top:60.715px" width="27.0" height="10"><text x="0" y="5.9" font-size="5.7" fill="#d6d6d6"  textLength="25.0" lengthAdjust="spacingAndGlyphs" font-family="Liberation Sans, sans-serif">Copy Tool</text></svg>
<div style="left:968.5px;top:60.5px;width:38.5px;height:7.5px;background:#343434;border-radius:1.5px;"></div>
<svg style="left:970px;top:60.715px" width="29" height="10"><text x="0" y="5.9" font-size="5.7" fill="#636363"  textLength="27" lengthAdjust="spacingAndGlyphs" font-family="Liberation Sans, sans-serif">Paste Tool</text></svg>
<div style="left:928px;top:70.7px;width:38px;height:7.5px;background:#3e3e3e;border-radius:1.5px;"></div>
<svg style="left:929.5px;top:70.91499999999999px" width="19.0" height="10"><text x="0" y="5.9" font-size="5.7" fill="#d6d6d6"  textLength="17.0" lengthAdjust="spacingAndGlyphs" font-family="Liberation Sans, sans-serif">Import</text></svg>
<div style="left:968.5px;top:70.7px;width:38.5px;height:7.5px;background:#3e3e3e;border-radius:1.5px;"></div>
<svg style="left:970px;top:70.91499999999999px" width="18.5" height="10"><text x="0" y="5.9" font-size="5.7" fill="#d6d6d6"  textLength="16.5" lengthAdjust="spacingAndGlyphs" font-family="Liberation Sans, sans-serif">Export</text></svg>
<div style="left:928px;top:81px;width:17.299999999999955px;height:7.400000000000006px;background:#3e3e3e;border-radius:1.5px;"></div>
<svg style="left:929.5px;top:81.16499999999999px" width="16.0" height="10"><text x="0" y="5.9" font-size="5.7" fill="#d6d6d6"  textLength="14.0" lengthAdjust="spacingAndGlyphs" font-family="Liberation Sans, sans-serif">Clone</text></svg>
<div style="left:948px;top:81px;width:59px;height:7.400000000000006px;background:#3e3e3e;border-radius:1.5px;"></div>
<svg style="left:950px;top:81.16499999999999px" width="49.5" height="10"><text x="0" y="5.9" font-size="5.7" fill="#d6d6d6"  textLength="47.5" lengthAdjust="spacingAndGlyphs" font-family="Liberation Sans, sans-serif">Make PolyMesh3D</text></svg>
<div style="left:928px;top:91.2px;width:17.5px;height:7.599999999999994px;background:#3e3e3e;border-radius:1.5px;"></div>
<svg style="left:929.5px;top:91.46499999999999px" width="12.0" height="10"><text x="0" y="5.9" font-size="5.7" fill="#d6d6d6"  textLength="10.0" lengthAdjust="spacingAndGlyphs" font-family="Liberation Sans, sans-serif">GoZ</text></svg>
<div style="left:948px;top:91.2px;width:18px;height:7.599999999999994px;background:#3e3e3e;border-radius:1.5px;"></div>
<svg style="left:950px;top:91.46499999999999px" width="8.5" height="10"><text x="0" y="5.9" font-size="5.7" fill="#d6d6d6"  textLength="6.5" lengthAdjust="spacingAndGlyphs" font-family="Liberation Sans, sans-serif">All</text></svg>
<div style="left:968.5px;top:91.2px;width:28.5px;height:7.599999999999994px;background:#3e3e3e;border-radius:1.5px;"></div>
<svg style="left:970px;top:91.46499999999999px" width="19.5" height="10"><text x="0" y="5.9" font-size="5.7" fill="#d6d6d6"  textLength="17.5" lengthAdjust="spacingAndGlyphs" font-family="Liberation Sans, sans-serif">Visible</text></svg>
<div style="left:999px;top:91.2px;width:8px;height:7.599999999999994px;background:#3e3e3e;border-radius:1.5px;"></div>
<svg style="left:1001.2px;top:91.46499999999999px" width="5.599999999999909" height="10"><text x="0" y="5.9" font-size="5.7" fill="#d6d6d6"  textLength="3.599999999999909" lengthAdjust="spacingAndGlyphs" font-family="Liberation Sans, sans-serif">R</text></svg>
<div style="left:928px;top:101.2px;width:79px;height:7.599999999999994px;background:#3e3e3e;border-radius:1.5px;"></div>
<svg style="left:929.5px;top:101.46499999999999px" width="33.0" height="10"><text x="0" y="5.9" font-size="5.7" fill="#d6d6d6"  textLength="31.0" lengthAdjust="spacingAndGlyphs" font-family="Liberation Sans, sans-serif">GoZ To iPad</text></svg>
<div style="left:928px;top:111.2px;width:79px;height:7.599999999999994px;background:#3e3e3e;border-radius:1.5px;"></div>
<svg style="left:929.5px;top:111.46499999999999px" width="24.0" height="10"><text x="0" y="5.9" font-size="5.7" fill="#d6d6d6"  textLength="22.0" lengthAdjust="spacingAndGlyphs" font-family="Liberation Sans, sans-serif">Lightbox</text></svg>
<svg style="left:957.5px;top:111.46499999999999px" width="15.0" height="10"><text x="0" y="5.9" font-size="5.7" fill="#d6d6d6"  textLength="13.0" lengthAdjust="spacingAndGlyphs" font-family="Liberation Sans, sans-serif">Tools</text></svg>
<svg style="left:951.5px;top:112px" width="6" height="6"><path d="M1 .6 L5 3 L1 5.4Z" fill="#f2f2f2"/></svg>
<svg style="left:929.5px;top:120.06499999999998px" width="24.5" height="10"><text x="0" y="5.9" font-size="5.7" fill="#d6d6d6"  textLength="22.5" lengthAdjust="spacingAndGlyphs" font-family="Liberation Sans, sans-serif">CAVE. 50</text></svg>
<div style="left:928px;top:127.19999999999999px;width:69px;height:1px;background:#585858;"></div>
<div style="left:989.25px;top:126.39999999999999px;width:7.5px;height:2.6px;background:#f39a2b;border-radius:1.3px;"></div>
<div style="left:999px;top:121.2px;width:8px;height:6.3999999999999915px;background:#3e3e3e;border-radius:1.5px;"></div>
<svg style="left:1001.2px;top:120.865px" width="5.599999999999909" height="10"><text x="0" y="5.9" font-size="5.7" fill="#d6d6d6"  textLength="3.599999999999909" lengthAdjust="spacingAndGlyphs" font-family="Liberation Sans, sans-serif">R</text></svg>
<div style="left:928px;top:130.6px;width:39px;height:38.6px;background:#2a2a2a;border-radius:1px;border:1px solid #222;box-sizing:border-box;"></div>
<div style="left:929px;top:162.6px;width:37px;height:5.8px;background:#333;"></div>
<svg style="left:928px;top:130.6px" width="39" height="39"><path d="M16 3.5 C20 1 24 1.5 24 4 C24 9 23 13 21.5 16 L19 18 C15 19 12 18 11 15 C11 10 13 6 16 3.5Z" fill="none" stroke="#f2f2f2" stroke-width="2" stroke-linejoin="round"/><path d="M10.5 19 C14 20.5 17 20.5 20 19.5 L28 22" stroke="#ececec" stroke-width="2.2" fill="none"/><path d="M7 23.5 L16 26.5" stroke="#f2f2f2" stroke-width="2.8" stroke-linecap="round"/><path d="M20 26.5 L29 26" stroke="#f2f2f2" stroke-width="2.4" stroke-linecap="round"/><path d="M34 4 l1.6 1.2 l-1.6 1.2Z" fill="#aaa"/></svg>
<svg style="left:941.5px;top:163.065px" width="14.5" height="10"><text x="0" y="5.9" font-size="5.7" fill="#a8a8a8"  textLength="12.5" lengthAdjust="spacingAndGlyphs" font-family="Liberation Sans, sans-serif">CAVE</text></svg>
<svg style="left:968px;top:130px" width="42" height="16"><defs><linearGradient id="cyl" x1="0" x2="1"><stop offset="0" stop-color="#9a9a9a"/><stop offset=".5" stop-color="#d8d8d8"/><stop offset="1" stop-color="#a2a2a2"/></linearGradient><linearGradient id="gld" x1="0" y1="0" x2="0" y2="1"><stop offset="0" stop-color="#ffd23a"/><stop offset=".55" stop-color="#f09a10"/><stop offset="1" stop-color="#b65a08"/></linearGradient></defs><path d="M4 3 L14.5 1.5 L16.5 11.5 L6.5 13.8Z" fill="url(#cyl)"/><ellipse cx="9.2" cy="2.3" rx="5.3" ry="1.3" fill="#bdbdbd" transform="rotate(-8 9.2 2.3)"/><text x="29.8" y="13.2" font-size="15" font-weight="bold" font-style="italic" text-anchor="middle" fill="url(#gld)" font-family="Liberation Serif, serif">S</text></svg>
<svg style="left:968.8px;top:143.065px" width="20.0" height="10"><text x="0" y="5.9" font-size="5.7" fill="#c4c4c4"  textLength="18.0" lengthAdjust="spacingAndGlyphs" font-family="Liberation Sans, sans-serif">Cylinde</text></svg>
<svg style="left:988.8px;top:143.065px" width="20.600000000000023" height="10"><text x="0" y="5.9" font-size="5.7" fill="#c4c4c4"  textLength="18.600000000000023" lengthAdjust="spacingAndGlyphs" font-family="Liberation Sans, sans-serif">SimpleI</text></svg>
<svg style="left:970.5px;top:150px" width="16" height="15"><path d="M3.2 11 H5.6 C3 8.5 3.4 2.5 7.6 2.5 C11.8 2.5 12.2 8.5 9.6 11 H12" fill="none" stroke="#f0f0f0" stroke-width="1.3"/><path d="M2 13 H13.4" stroke="#f0f0f0" stroke-width="1.6"/><text x="12.5" y="6.5" font-size="4" fill="#ccc" font-family="Liberation Sans, sans-serif">3</text></svg>
<svg style="left:991px;top:150px" width="16" height="15"><path d="M3.2 11 H5.6 C3 8.5 3.4 2.5 7.6 2.5 C11.8 2.5 12.2 8.5 9.6 11 H12" fill="none" stroke="#f0f0f0" stroke-width="1.3"/><path d="M2 13 H13.4" stroke="#f0f0f0" stroke-width="1.6"/><text x="12.5" y="6.5" font-size="4" fill="#ccc" font-family="Liberation Sans, sans-serif">2</text></svg>
<svg style="left:972px;top:163.065px" width="14.5" height="10"><text x="0" y="5.9" font-size="5.7" fill="#c4c4c4"  textLength="12.5" lengthAdjust="spacingAndGlyphs" font-family="Liberation Sans, sans-serif">CAVE</text></svg>
<svg style="left:989.5px;top:163.065px" width="19.5" height="10"><text x="0" y="5.9" font-size="5.7" fill="#c4c4c4"  textLength="17.5" lengthAdjust="spacingAndGlyphs" font-family="Liberation Sans, sans-serif">CAVE_0</text></svg>
<div style="left:928.4px;top:171.8px;width:18.4px;height:18px;background:#2a2a2a;border-radius:1px;border:1px solid #222;box-sizing:border-box;"></div>
<svg style="left:928.4px;top:171.8px" width="19" height="14"><g transform="scale(.46) translate(3,1)"><path d="M16 3.5 C20 1 24 1.5 24 4 C24 9 23 13 21.5 16 L19 18 C15 19 12 18 11 15 C11 10 13 6 16 3.5Z" fill="none" stroke="#f2f2f2" stroke-width="2" stroke-linejoin="round"/><path d="M10.5 19 C14 20.5 17 20.5 20 19.5 L28 22" stroke="#ececec" stroke-width="2.2" fill="none"/><path d="M7 23.5 L16 26.5" stroke="#f2f2f2" stroke-width="2.8" stroke-linecap="round"/><path d="M20 26.5 L29 26" stroke="#f2f2f2" stroke-width="2.4" stroke-linecap="round"/></g><text x="14.2" y="7" font-size="4" fill="#ccc" font-family="Liberation Sans, sans-serif">8</text></svg>
<svg style="left:931.5px;top:183.26500000000001px" width="14.0" height="10"><text x="0" y="5.9" font-size="5.7" fill="#c4c4c4"  textLength="12.0" lengthAdjust="spacingAndGlyphs" font-family="Liberation Sans, sans-serif">CAVE</text></svg>
<div style="left:925px;top:198.6px;width:84.6px;height:400px;background:#313131;border-radius:3px;border:1px solid #222;box-sizing:border-box;"></div>
<svg style="left:932.5px;top:199.865px" width="22.5" height="10"><text x="0" y="5.9" font-size="5.7" fill="#dadada"  textLength="20.5" lengthAdjust="spacingAndGlyphs" font-family="Liberation Sans, sans-serif">Subtool</text></svg>
<svg style="left:929.5px;top:209.065px" width="40.5" height="10"><text x="0" y="5.9" font-size="5.7" fill="#d6d6d6"  textLength="38.5" lengthAdjust="spacingAndGlyphs" font-family="Liberation Sans, sans-serif">Visible Count 8</text></svg>
<div style="left:928px;top:216.2px;width:79px;height:1px;background:#585858;"></div>
<div style="left:949.5px;top:215.4px;width:7px;height:2.6px;background:#f39a2b;border-radius:1.3px;"></div>
<div style="left:928px;top:219.6px;width:7.7999999999999545px;height:8.0px;background:#f39a2b;border-radius:1.5px;"></div>
<svg style="left:929.5px;top:220.065px" width="7.0" height="10"><text x="0" y="5.9" font-size="5.7" fill="#3a2408"  textLength="5.0" lengthAdjust="spacingAndGlyphs" font-family="Liberation Sans, sans-serif">V1</text></svg>
<svg style="left:939.7px;top:220.065px" width="7.600000000000023" height="10"><text x="0" y="5.9" font-size="5.7" fill="#c8c8c8"  textLength="5.600000000000023" lengthAdjust="spacingAndGlyphs" font-family="Liberation Sans, sans-serif">V2</text></svg>
<svg style="left:949.7px;top:220.065px" width="7.600000000000023" height="10"><text x="0" y="5.9" font-size="5.7" fill="#c8c8c8"  textLength="5.600000000000023" lengthAdjust="spacingAndGlyphs" font-family="Liberation Sans, sans-serif">V3</text></svg>
<svg style="left:959.7px;top:220.065px" width="7.600000000000023" height="10"><text x="0" y="5.9" font-size="5.7" fill="#c8c8c8"  textLength="5.600000000000023" lengthAdjust="spacingAndGlyphs" font-family="Liberation Sans, sans-serif">V4</text></svg>
<svg style="left:969.7px;top:220.065px" width="7.600000000000023" height="10"><text x="0" y="5.9" font-size="5.7" fill="#c8c8c8"  textLength="5.600000000000023" lengthAdjust="spacingAndGlyphs" font-family="Liberation Sans, sans-serif">V5</text></svg>
<svg style="left:979.7px;top:220.065px" width="7.600000000000023" height="10"><text x="0" y="5.9" font-size="5.7" fill="#c8c8c8"  textLength="5.600000000000023" lengthAdjust="spacingAndGlyphs" font-family="Liberation Sans, sans-serif">V6</text></svg>
<svg style="left:989.7px;top:220.065px" width="7.600000000000023" height="10"><text x="0" y="5.9" font-size="5.7" fill="#c8c8c8"  textLength="5.600000000000023" lengthAdjust="spacingAndGlyphs" font-family="Liberation Sans, sans-serif">V7</text></svg>
<svg style="left:999.7px;top:220.065px" width="7.600000000000023" height="10"><text x="0" y="5.9" font-size="5.7" fill="#c8c8c8"  textLength="5.600000000000023" lengthAdjust="spacingAndGlyphs" font-family="Liberation Sans, sans-serif">V8</text></svg>
<div style="left:935px;top:229.2px;width:72.5px;height:19px;background:#3f3f3f;border-radius:1px;"></div>
<div style="left:935px;top:241.4px;width:72.5px;height:6.8px;background:#2a2a2a;"></div>
<svg style="left:964.5px;top:241.465px" width="15.0" height="10"><text x="0" y="5.9" font-size="5.7" fill="#d0d0d0"  textLength="13.0" lengthAdjust="spacingAndGlyphs" font-family="Liberation Sans, sans-serif">CAVE</text></svg>
<div style="left:929px;top:230px;width:1.4px;height:9.5px;background:#d9892a;"></div>
<div style="left:929.4px;top:250px;width:1px;height:139px;background:#3d3d3d;"></div>
<svg style="left:925px;top:225px" width="86" height="170"><g transform="translate(10.5,2.8) scale(.42)"><path d="M16 3.5 C20 1 24 1.5 24 4 C24 9 23 13 21.5 16 L19 18 C15 19 12 18 11 15 C11 10 13 6 16 3.5Z" fill="none" stroke="#f2f2f2" stroke-width="2" stroke-linejoin="round"/><path d="M10.5 19 C14 20.5 17 20.5 20 19.5 L28 22" stroke="#ececec" stroke-width="2.2" fill="none"/><path d="M7 23.5 L16 26.5" stroke="#f2f2f2" stroke-width="2.8" stroke-linecap="round"/><path d="M20 26.5 L29 26" stroke="#f2f2f2" stroke-width="2.4" stroke-linecap="round"/></g><rect x="27.6" y="6.2" width="10" height="5.6" rx="2.8" fill="#8e8e8e"/><circle cx="30.4" cy="9" r="2.7" fill="#ececec"/><path d="M43.5 6.4 A2.7 2.7 0 1 0 43.5 11.6 A3.6 3.6 0 0 1 43.5 6.4Z" fill="#5a5a5a"/><path d="M54.3 6.6 V11.4" stroke="#555" stroke-width="1"/><path d="M61 11.6 L65.2 7.4 L67.6 6 L66.6 9 L63 12Z" fill="#d8d8d8"/><path d="M73 9.5 C75 5.6 80 5.6 82 9.5 C80 12 75 12 73 9.5Z" fill="none" stroke="#d0d0d0" stroke-width=".8"/><circle cx="77.5" cy="9.2" r="1.4" fill="#d8d8d8"/><path d="M72.6 7.2 C75 4 80 4 82.4 7.2" stroke="#bdbdbd" stroke-width=".8" fill="none"/><path d="M12.5 24.5 C15 22.5 20 22.5 22.5 24.5 L23.5 31 C22 35 14 35.5 12 32Z" fill="#e6e6e6"/><path d="M15 28 C17 31 19 31 21 28" stroke="#9a9a9a" stroke-width=".8" fill="none"/><rect x="27.6" y="26.2" width="10" height="5.6" rx="2.8" fill="#8e8e8e"/><circle cx="30.4" cy="29" r="2.7" fill="#ececec"/><path d="M43.5 26.4 A2.7 2.7 0 1 0 43.5 31.6 A3.6 3.6 0 0 1 43.5 26.4Z" fill="#5a5a5a"/><path d="M54.3 26.6 V31.4" stroke="#555" stroke-width="1"/><path d="M61 31.6 L65.2 27.4 L67.6 26 L66.6 29 L63 32Z" fill="#d8d8d8"/><path d="M73 29.5 C75 25.6 80 25.6 82 29.5 C80 32 75 32 73 29.5Z" fill="none" stroke="#d0d0d0" stroke-width=".8"/><circle cx="77.5" cy="29.2" r="1.4" fill="#d8d8d8"/><path d="M72.6 27.2 C75 24 80 24 82.4 27.2" stroke="#bdbdbd" stroke-width=".8" fill="none"/><text x="46" y="42.6" font-size="4.6" fill="#8a8a8a" font-family="Liberation Sans, sans-serif">2</text><path d="M12.5 44.5 C15 42.5 20 42.5 22.5 44.5 L23.5 51 C22 55 14 55.5 12 52Z" fill="#e6e6e6"/><path d="M15 48 C17 51 19 51 21 48" stroke="#9a9a9a" stroke-width=".8" fill="none"/><rect x="27.6" y="46.2" width="10" height="5.6" rx="2.8" fill="#8e8e8e"/><circle cx="30.4" cy="49" r="2.7" fill="#ececec"/><path d="M43.5 46.4 A2.7 2.7 0 1 0 43.5 51.6 A3.6 3.6 0 0 1 43.5 46.4Z" fill="#5a5a5a"/><path d="M54.3 46.6 V51.4" stroke="#555" stroke-width="1"/><path d="M61 51.6 L65.2 47.4 L67.6 46 L66.6 49 L63 52Z" fill="#d8d8d8"/><path d="M73 49.5 C75 45.6 80 45.6 82 49.5 C80 52 75 52 73 49.5Z" fill="none" stroke="#d0d0d0" stroke-width=".8"/><circle cx="77.5" cy="49.2" r="1.4" fill="#d8d8d8"/><path d="M72.6 47.2 C75 44 80 44 82.4 47.2" stroke="#bdbdbd" stroke-width=".8" fill="none"/><text x="46" y="62.6" font-size="4.6" fill="#8a8a8a" font-family="Liberation Sans, sans-serif">3</text><circle cx="11.4" cy="72.1" r="1.2" fill="#f2f2f2"/><circle cx="22" cy="71.9" r="1.7" fill="#f2f2f2"/><circle cx="20.8" cy="70.5" r="1" fill="#bbb"/><rect x="27.6" y="66.7" width="10" height="5.6" rx="2.8" fill="#8e8e8e"/><circle cx="30.4" cy="69.5" r="2.7" fill="#ececec"/><path d="M43.5 66.9 A2.7 2.7 0 1 0 43.5 72.1 A3.6 3.6 0 0 1 43.5 66.9Z" fill="#5a5a5a"/><path d="M54.3 67.1 V71.9" stroke="#555" stroke-width="1"/><path d="M61 72.1 L65.2 67.9 L67.6 66.5 L66.6 69.5 L63 72.5Z" fill="#d8d8d8"/><path d="M73 70.0 C75 66.1 80 66.1 82 70.0 C80 72.5 75 72.5 73 70.0Z" fill="none" stroke="#d0d0d0" stroke-width=".8"/><circle cx="77.5" cy="69.7" r="1.4" fill="#d8d8d8"/><path d="M72.6 67.7 C75 64.5 80 64.5 82.4 67.7" stroke="#bdbdbd" stroke-width=".8" fill="none"/><text x="46" y="83.1" font-size="4.6" fill="#8a8a8a" font-family="Liberation Sans, sans-serif">4</text><path d="M15 84.5 L20.5 85.5 L19.5 90.5 L21 95.5 L15.5 96.5 L14 90.5Z" fill="#e8e8e8"/><rect x="27.6" y="86.7" width="10" height="5.6" rx="2.8" fill="#8e8e8e"/><circle cx="30.4" cy="89.5" r="2.7" fill="#ececec"/><path d="M43.5 86.9 A2.7 2.7 0 1 0 43.5 92.1 A3.6 3.6 0 0 1 43.5 86.9Z" fill="#5a5a5a"/><path d="M54.3 87.1 V91.9" stroke="#555" stroke-width="1"/><path d="M61 92.1 L65.2 87.9 L67.6 86.5 L66.6 89.5 L63 92.5Z" fill="#d8d8d8"/><path d="M73 90.0 C75 86.1 80 86.1 82 90.0 C80 92.5 75 92.5 73 90.0Z" fill="none" stroke="#d0d0d0" stroke-width=".8"/><circle cx="77.5" cy="89.7" r="1.4" fill="#d8d8d8"/><path d="M72.6 87.7 C75 84.5 80 84.5 82.4 87.7" stroke="#bdbdbd" stroke-width=".8" fill="none"/><text x="46" y="103.1" font-size="4.6" fill="#8a8a8a" font-family="Liberation Sans, sans-serif">5</text><circle cx="11.4" cy="112.6" r="1.2" fill="#f2f2f2"/><circle cx="22" cy="112.4" r="1.7" fill="#f2f2f2"/><circle cx="20.8" cy="111" r="1" fill="#bbb"/><rect x="27.6" y="107.2" width="10" height="5.6" rx="2.8" fill="#8e8e8e"/><circle cx="30.4" cy="110" r="2.7" fill="#ececec"/><path d="M43.5 107.4 A2.7 2.7 0 1 0 43.5 112.6 A3.6 3.6 0 0 1 43.5 107.4Z" fill="#5a5a5a"/><path d="M54.3 107.6 V112.4" stroke="#555" stroke-width="1"/><path d="M61 112.6 L65.2 108.4 L67.6 107 L66.6 110 L63 113Z" fill="#d8d8d8"/><path d="M73 110.5 C75 106.6 80 106.6 82 110.5 C80 113 75 113 73 110.5Z" fill="none" stroke="#d0d0d0" stroke-width=".8"/><circle cx="77.5" cy="110.2" r="1.4" fill="#d8d8d8"/><path d="M72.6 108.2 C75 105 80 105 82.4 108.2" stroke="#bdbdbd" stroke-width=".8" fill="none"/><text x="46" y="123.6" font-size="4.6" fill="#8a8a8a" font-family="Liberation Sans, sans-serif">6</text><path d="M11 134.5 L13 128 L15.5 134.5Z M17.5 134.5 L20 127 L22.5 134.5Z" fill="#e8e8e8"/><rect x="27.6" y="127.2" width="10" height="5.6" rx="2.8" fill="#8e8e8e"/><circle cx="30.4" cy="130" r="2.7" fill="#ececec"/><path d="M43.5 127.4 A2.7 2.7 0 1 0 43.5 132.6 A3.6 3.6 0 0 1 43.5 127.4Z" fill="#5a5a5a"/><path d="M54.3 127.6 V132.4" stroke="#555" stroke-width="1"/><path d="M61 132.6 L65.2 128.4 L67.6 127 L66.6 130 L63 133Z" fill="#d8d8d8"/><path d="M73 130.5 C75 126.6 80 126.6 82 130.5 C80 133 75 133 73 130.5Z" fill="none" stroke="#d0d0d0" stroke-width=".8"/><circle cx="77.5" cy="130.2" r="1.4" fill="#d8d8d8"/><path d="M72.6 128.2 C75 125 80 125 82.4 128.2" stroke="#bdbdbd" stroke-width=".8" fill="none"/><text x="46" y="143.6" font-size="4.6" fill="#8a8a8a" font-family="Liberation Sans, sans-serif">7</text><path d="M12.5 145.0 C15 143.0 20 143.0 22.5 145.0 L23.5 151.5 C22 155.5 14 156.0 12 152.5Z" fill="#e6e6e6"/><path d="M15 148.5 C17 151.5 19 151.5 21 148.5" stroke="#9a9a9a" stroke-width=".8" fill="none"/><rect x="27.6" y="146.7" width="10" height="5.6" rx="2.8" fill="#8e8e8e"/><circle cx="30.4" cy="149.5" r="2.7" fill="#ececec"/><path d="M43.5 146.9 A2.7 2.7 0 1 0 43.5 152.1 A3.6 3.6 0 0 1 43.5 146.9Z" fill="#5a5a5a"/><path d="M54.3 147.1 V151.9" stroke="#555" stroke-width="1"/><path d="M61 152.1 L65.2 147.9 L67.6 146.5 L66.6 149.5 L63 152.5Z" fill="#d8d8d8"/><path d="M73 150.0 C75 146.1 80 146.1 82 150.0 C80 152.5 75 152.5 73 150.0Z" fill="none" stroke="#d0d0d0" stroke-width=".8"/><circle cx="77.5" cy="149.7" r="1.4" fill="#d8d8d8"/><path d="M72.6 147.7 C75 144.5 80 144.5 82.4 147.7" stroke="#bdbdbd" stroke-width=".8" fill="none"/><text x="46" y="163.1" font-size="4.6" fill="#8a8a8a" font-family="Liberation Sans, sans-serif">8</text></svg>
<div style="left:928px;top:392.5px;width:38px;height:7.5px;background:#3e3e3e;border-radius:1.5px;"></div>
<svg style="left:929.5px;top:392.71500000000003px" width="21.5" height="10"><text x="0" y="5.9" font-size="5.7" fill="#d6d6d6"  textLength="19.5" lengthAdjust="spacingAndGlyphs" font-family="Liberation Sans, sans-serif">List All</text></svg>
<div style="left:969px;top:392.5px;width:16.600000000000023px;height:7.5px;background:#343434;border-radius:1.5px;"></div>
<div style="left:989px;top:392.5px;width:18px;height:7.5px;background:#3e3e3e;border-radius:1.5px;"></div>
<div style="left:928px;top:402.5px;width:38px;height:7.5px;background:#3e3e3e;border-radius:1.5px;"></div>
<svg style="left:929.5px;top:402.71500000000003px" width="30.0" height="10"><text x="0" y="5.9" font-size="5.7" fill="#d6d6d6"  textLength="28.0" lengthAdjust="spacingAndGlyphs" font-family="Liberation Sans, sans-serif">New Folder</text></svg>
<div style="left:969px;top:402.5px;width:16.600000000000023px;height:7.5px;background:#343434;border-radius:1.5px;"></div>
<div style="left:989px;top:402.5px;width:18px;height:7.5px;background:#3e3e3e;border-radius:1.5px;"></div>
<svg style="left:969px;top:392.5px" width="38" height="18"><path d="M8.2 1.5 L10.6 4.4 H9 V6.5 H7.4 V4.4 H5.8Z" fill="#5c5c5c"/><path d="M29 6.6 L26.4 3.6 H28.2 V1.4 H29.8 V3.6 H31.6Z" fill="#f0f0f0"/><path d="M6.5 16.5 V13 H9.5 V11.6 L12 13.6 L9.5 15.6 V14.2 H7.6 V16.5Z" fill="#5c5c5c"/><path d="M25.5 11 V14.6 H29.5 V16.2 L32.6 13.8 L29.5 11.4 V13 H27 V11Z" fill="#f0f0f0"/></svg>
<div style="left:928px;top:423px;width:38px;height:7.199999999999989px;background:#3e3e3e;border-radius:1.5px;"></div>
<svg style="left:929.5px;top:423.06500000000005px" width="22.0" height="10"><text x="0" y="5.9" font-size="5.7" fill="#d6d6d6"  textLength="20.0" lengthAdjust="spacingAndGlyphs" font-family="Liberation Sans, sans-serif">Rename</text></svg>
<div style="left:968.5px;top:423px;width:38.5px;height:7.199999999999989px;background:#3e3e3e;border-radius:1.5px;"></div>
<svg style="left:970px;top:423.06500000000005px" width="36.5" height="10"><text x="0" y="5.9" font-size="5.7" fill="#d6d6d6"  textLength="34.5" lengthAdjust="spacingAndGlyphs" font-family="Liberation Sans, sans-serif">AutoReorder</text></svg>
<div style="left:928px;top:433px;width:38px;height:7.5px;background:#3e3e3e;border-radius:1.5px;"></div>
<svg style="left:929.5px;top:433.21500000000003px" width="20.5" height="10"><text x="0" y="5.9" font-size="5.7" fill="#d6d6d6"  textLength="18.5" lengthAdjust="spacingAndGlyphs" font-family="Liberation Sans, sans-serif">All Low</text></svg>
<div style="left:968.5px;top:433px;width:38.5px;height:7.5px;background:#3e3e3e;border-radius:1.5px;"></div>
<svg style="left:970px;top:433.21500000000003px" width="21.5" height="10"><text x="0" y="5.9" font-size="5.7" fill="#d6d6d6"  textLength="19.5" lengthAdjust="spacingAndGlyphs" font-family="Liberation Sans, sans-serif">All High</text></svg>
<div style="left:928px;top:443px;width:38px;height:7.800000000000011px;background:#3e3e3e;border-radius:1.5px;"></div>
<svg style="left:929.5px;top:443.365px" width="33.5" height="10"><text x="0" y="5.9" font-size="5.7" fill="#d6d6d6"  textLength="31.5" lengthAdjust="spacingAndGlyphs" font-family="Liberation Sans, sans-serif">All To Home</text></svg>
<div style="left:968.5px;top:443px;width:38.5px;height:7.800000000000011px;background:#3e3e3e;border-radius:1.5px;"></div>
<svg style="left:970px;top:443.365px" width="35" height="10"><text x="0" y="5.9" font-size="5.7" fill="#d6d6d6"  textLength="33" lengthAdjust="spacingAndGlyphs" font-family="Liberation Sans, sans-serif">All To Target</text></svg>
<div style="left:928px;top:453px;width:38px;height:7.800000000000011px;background:#3e3e3e;border-radius:1.5px;"></div>
<svg style="left:929.5px;top:453.365px" width="14.0" height="10"><text x="0" y="5.9" font-size="5.7" fill="#d6d6d6"  textLength="12.0" lengthAdjust="spacingAndGlyphs" font-family="Liberation Sans, sans-serif">Copy</text></svg>
<div style="left:968.5px;top:453px;width:38.5px;height:7.800000000000011px;background:#343434;border-radius:1.5px;"></div>
<svg style="left:970px;top:453.365px" width="15.5" height="10"><text x="0" y="5.9" font-size="5.7" fill="#636363"  textLength="13.5" lengthAdjust="spacingAndGlyphs" font-family="Liberation Sans, sans-serif">Paste</text></svg>
<div style="left:928px;top:463.2px;width:38px;height:17.80000000000001px;background:#3e3e3e;border-radius:1.5px;"></div>
<svg style="left:929.5px;top:468.56500000000005px" width="26.5" height="10"><text x="0" y="5.9" font-size="5.7" fill="#d6d6d6"  textLength="24.5" lengthAdjust="spacingAndGlyphs" font-family="Liberation Sans, sans-serif">Duplicate</text></svg>
<div style="left:968.5px;top:463.2px;width:38.5px;height:7.400000000000034px;background:#3e3e3e;border-radius:1.5px;"></div>
<svg style="left:970px;top:463.365px" width="21.5" height="10"><text x="0" y="5.9" font-size="5.7" fill="#d6d6d6"  textLength="19.5" lengthAdjust="spacingAndGlyphs" font-family="Liberation Sans, sans-serif">Append</text></svg>
<div style="left:968.5px;top:473.6px;width:38.5px;height:7.399999999999977px;background:#3e3e3e;border-radius:1.5px;"></div>
<svg style="left:970px;top:473.76500000000004px" width="15.5" height="10"><text x="0" y="5.9" font-size="5.7" fill="#d6d6d6"  textLength="13.5" lengthAdjust="spacingAndGlyphs" font-family="Liberation Sans, sans-serif">Insert</text></svg>
<div style="left:928px;top:483.8px;width:38px;height:17.599999999999966px;background:#3e3e3e;border-radius:1.5px;"></div>
<svg style="left:929.5px;top:489.06500000000005px" width="18.5" height="10"><text x="0" y="5.9" font-size="5.7" fill="#d6d6d6"  textLength="16.5" lengthAdjust="spacingAndGlyphs" font-family="Liberation Sans, sans-serif">Delete</text></svg>
<div style="left:968.5px;top:483.8px;width:38.5px;height:7.399999999999977px;background:#3e3e3e;border-radius:1.5px;"></div>
<svg style="left:970px;top:483.96500000000003px" width="26" height="10"><text x="0" y="5.9" font-size="5.7" fill="#d6d6d6"  textLength="24" lengthAdjust="spacingAndGlyphs" font-family="Liberation Sans, sans-serif">Del Other</text></svg>
<div style="left:968.5px;top:494px;width:38.5px;height:7.399999999999977px;background:#3e3e3e;border-radius:1.5px;"></div>
<svg style="left:970px;top:494.165px" width="18.5" height="10"><text x="0" y="5.9" font-size="5.7" fill="#d6d6d6"  textLength="16.5" lengthAdjust="spacingAndGlyphs" font-family="Liberation Sans, sans-serif">Del All</text></svg>
<div style="left:928px;top:504px;width:79px;height:17.600000000000023px;background:#343434;border-radius:1.5px;"></div>
<svg style="left:929.5px;top:509.265px" width="79.5" height="10"><text x="0" y="5.9" font-size="5.7" fill="#636363"  textLength="77.5" lengthAdjust="spacingAndGlyphs" font-family="Liberation Sans, sans-serif">Apply Last Action To All Subtools</text></svg>
<div style="left:928px;top:523.6px;width:79px;height:53px;background:#363636;"></div>
<svg style="left:930.5px;top:524.6650000000001px" width="12.0" height="10"><text x="0" y="5.9" font-size="5.7" fill="#dcdcdc"  textLength="10.0" lengthAdjust="spacingAndGlyphs" font-family="Liberation Sans, sans-serif">Split</text></svg>
<svg style="left:930.5px;top:534.9150000000001px" width="17.5" height="10"><text x="0" y="5.9" font-size="5.7" fill="#dcdcdc"  textLength="15.5" lengthAdjust="spacingAndGlyphs" font-family="Liberation Sans, sans-serif">Merge</text></svg>
<div style="left:928px;top:533.35px;width:79px;height:0.8px;background:#2e2e2e;"></div>
<svg style="left:930.5px;top:545.1650000000001px" width="23.0" height="10"><text x="0" y="5.9" font-size="5.7" fill="#dcdcdc"  textLength="21.0" lengthAdjust="spacingAndGlyphs" font-family="Liberation Sans, sans-serif">Boolean</text></svg>
<div style="left:928px;top:543.6px;width:79px;height:0.8px;background:#2e2e2e;"></div>
<svg style="left:930.5px;top:555.4150000000001px" width="26.0" height="10"><text x="0" y="5.9" font-size="5.7" fill="#dcdcdc"  textLength="24.0" lengthAdjust="spacingAndGlyphs" font-family="Liberation Sans, sans-serif">Bevel Pro</text></svg>
<div style="left:928px;top:553.85px;width:79px;height:0.8px;background:#2e2e2e;"></div>
<svg style="left:930.5px;top:565.6650000000001px" width="14.5" height="10"><text x="0" y="5.9" font-size="5.7" fill="#dcdcdc"  textLength="12.5" lengthAdjust="spacingAndGlyphs" font-family="Liberation Sans, sans-serif">Align</text></svg>
<div style="left:928px;top:564.1px;width:79px;height:0.8px;background:#2e2e2e;"></div>
</div></body></html>
